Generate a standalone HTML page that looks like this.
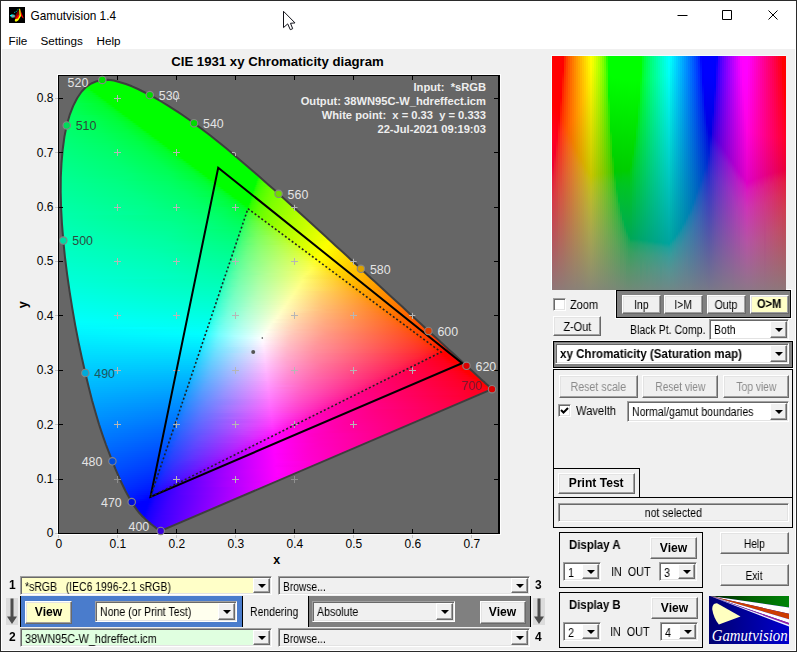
<!DOCTYPE html>
<html><head><meta charset="utf-8"><title>Gamutvision 1.4</title>
<style>
*{box-sizing:border-box;margin:0;padding:0}
html,body{width:797px;height:652px;overflow:hidden;background:#f0f0f0}
body{position:relative;font-family:"Liberation Sans",sans-serif;font-size:12px;color:#000}
.abs{position:absolute}
#frame{position:absolute;left:0;top:0;width:797px;height:652px;border:1px solid #2b2b2b;pointer-events:none;z-index:9}
#frame2{position:absolute;left:1px;top:1px;width:795px;height:650px;border:1px solid #fff;border-top:none;pointer-events:none;z-index:8}
#title{position:absolute;left:0;top:0;width:797px;height:30px;background:#fff}
#title .t{position:absolute;left:30.5px;top:8.7px;font-size:11.85px}
#menu{position:absolute;left:0;top:30px;width:797px;height:19px;background:#fff}
#menu span{position:absolute;top:4px;font-size:11.7px}
.btn{position:absolute;background:#f0f0f0;border:1px solid;border-color:#fff #696969 #696969 #fff;box-shadow:inset -1px -1px 0 #a0a0a0,inset 1px 1px 0 #e3e3e3;text-align:center;font-size:12px;line-height:1}
.btn.b{font-weight:bold}
.btn.dis{color:#8a8a8a}
.sel{position:absolute;background:#fff;border:1px solid;border-color:#a0a0a0 #fff #fff #a0a0a0;box-shadow:inset 1px 1px 0 #696969,inset -1px -1px 0 #e3e3e3;font-size:12px;white-space:nowrap;overflow:hidden}
.sel .tx{position:absolute;left:4px;top:3px;will-change:transform}
.sel .dd{position:absolute;right:1px;top:1px;bottom:1px;width:17px;background:#f0f0f0;border:1px solid;border-color:#fff #696969 #696969 #fff;box-shadow:inset -1px -1px 0 #a0a0a0}
.sel .dd:after{content:"";position:absolute;left:4px;top:50%;margin-top:-2px;border:4px solid transparent;border-top:4px solid #000;border-bottom:none}
.pan{position:absolute;border:1px solid #000}
.lbl{position:absolute;font-size:12px;white-space:nowrap;transform:scaleX(.9);transform-origin:0 50%;will-change:transform}
.lbl.b{font-weight:bold;transform:scaleX(.98)}
.btn .s{display:inline-block;position:relative;top:.7px;transform:scaleX(.9);will-change:transform}
.btn.b .s{transform:none;top:0}
.sel .tx{transform:scaleX(.9);transform-origin:0 50%}
.sel.b{font-weight:bold}
.sel.b .tx{transform:scaleX(.955)}
</style></head><body>
<div id="title"><svg class="abs" style="left:9px;top:7px" width="16" height="16" viewBox="0 0 16 16"><rect width="16" height="16" fill="#000"/><path d="M9.600 3L5 10.800L7.500 12L10.200 8z" fill="#8a0000"/><path d="M9.300 7.500L6 12.300H9.500L11.300 9z" fill="#f00"/><path d="M10.500 1L12.200 5L14.800 11.600L13.400 10.800L11.800 8.500L11 1.500z" fill="#f00"/><path d="M10.100 1.600L11.200 2.200L12 9L9.200 13.400L7 14.800L5.800 14L6 12.300L9 11.600L10.400 8.500z" fill="#ff0"/><path d="M5 5.600L7.500 4.600L9.600 1.600" stroke="#00a8a8" stroke-width="0.9" fill="none" stroke-dasharray="1.6 0.6"/><ellipse cx="3.700" cy="9" rx="2.400" ry="1.800" fill="#00b4b4"/><ellipse cx="4" cy="9.100" rx="1.700" ry="1.200" fill="#a09a9a"/><path d="M0.800 8.200L3.300 7.600L3 9L1.400 9z" fill="#0ff"/></svg>
<div class="t">Gamutvision 1.4</div>
<svg class="abs" style="left:660px;top:0" width="137" height="31" viewBox="0 0 137 31"><path d="M17.5 15.5h10M62.5 10.5h9v9h-9zM108.500 10.5l9 9m0-9l-9 9" stroke="#000" stroke-width="1" fill="none"/></svg>

</div>
<div id="menu"><span style="left:8.5px">File</span><span style="left:40.500px">Settings</span><span style="left:96.500px">Help</span></div>
<svg id="plot" width="545" height="530" viewBox="0 45 545 530" style="position:absolute;left:0;top:45px" font-family="Liberation Sans, sans-serif">
<defs><clipPath id="lc"><polygon points="160.7,530.9 160.6,530.9 160.3,530.9 160.0,530.8 159.6,530.7 159.3,530.6 159.0,530.4 158.6,530.1 158.2,529.7 157.6,529.3 157.0,528.8 156.3,528.2 155.5,527.6 154.5,526.7 153.2,525.8 152.0,524.8 150.9,523.9 150.0,523.1 149.2,522.5 148.4,521.9 147.6,521.2 146.6,520.3 145.6,519.4 144.6,518.4 143.5,517.3 142.3,516.2 141.1,514.9 139.8,513.5 138.4,511.8 136.9,509.8 135.3,507.6 133.6,505.0 131.7,502.1 129.8,498.8 127.7,495.1 125.5,491.0 123.2,486.3 120.7,481.0 118.1,475.1 115.3,468.6 112.4,461.3 109.2,453.2 105.9,444.5 102.5,434.9 99.0,424.3 95.6,412.8 92.1,400.4 88.7,387.1 85.3,373.0 81.9,358.0 78.5,342.1 75.3,325.6 72.4,309.0 69.7,292.1 67.2,274.8 65.0,257.5 63.3,240.6 62.0,224.2 61.1,207.9 60.7,192.2 60.8,177.3 61.5,163.1 62.7,149.5 64.4,136.8 66.7,125.4 69.6,115.2 73.1,106.1 77.1,98.2 81.5,91.8 86.2,86.9 91.3,83.5 96.8,81.2 102.3,79.9 108.0,79.7 113.9,80.5 119.9,82.2 125.9,84.0 131.9,86.3 137.9,89.0 143.9,92.0 149.8,95.1 155.5,98.2 161.2,101.5 166.8,104.8 172.3,108.3 177.8,111.9 183.2,115.5 188.6,119.3 194.0,123.2 199.3,127.1 204.7,131.2 210.0,135.3 215.3,139.5 220.6,143.7 225.9,148.1 231.2,152.5 236.4,156.9 241.7,161.4 247.0,165.9 252.2,170.5 257.5,175.1 262.8,179.7 268.1,184.4 273.4,189.1 278.6,193.8 283.9,198.5 289.1,203.2 294.4,208.0 299.6,212.8 304.9,217.5 310.1,222.3 315.3,227.0 320.5,231.7 325.7,236.5 330.8,241.2 335.9,245.9 341.0,250.5 346.0,255.1 351.0,259.7 356.0,264.3 360.9,268.8 365.7,273.2 370.5,277.7 375.3,282.0 379.9,286.3 384.5,290.5 389.1,294.7 393.5,298.7 397.9,302.7 402.1,306.6 406.3,310.5 410.3,314.2 414.2,317.8 418.0,321.2 421.6,324.6 425.0,327.8 428.4,330.9 431.7,333.9 434.9,336.8 438.0,339.6 440.9,342.3 443.6,344.7 446.0,346.9 448.4,349.2 451.3,351.8 454.9,355.1 458.9,358.8 463.0,362.5 466.5,365.8 469.4,368.4 471.9,370.7 474.1,372.8 476.2,374.7 478.1,376.4 479.8,378.0 481.3,379.4 482.7,380.7 484.0,381.8 485.0,382.8 486.0,383.7 486.8,384.4 487.5,385.1 488.1,385.6 488.6,386.1 489.2,386.6 489.9,387.3 490.7,388.0 491.5,388.7 492.0,389.2"/></clipPath><linearGradient id="g0" gradientUnits="userSpaceOnUse" x1="95" x2="118" y1="0" y2="0"><stop offset="0" stop-color="#0f0"/><stop offset="1" stop-color="#0f0"/></linearGradient><linearGradient id="g1" gradientUnits="userSpaceOnUse" x1="90" x2="125" y1="0" y2="0"><stop offset="0" stop-color="#0f0"/><stop offset="1" stop-color="#0f0"/></linearGradient><linearGradient id="g2" gradientUnits="userSpaceOnUse" x1="87" x2="131" y1="0" y2="0"><stop offset="0" stop-color="#0f0"/><stop offset="1" stop-color="#0f0"/></linearGradient><linearGradient id="g3" gradientUnits="userSpaceOnUse" x1="84" x2="136" y1="0" y2="0"><stop offset="0" stop-color="#00ff16"/><stop offset="0.03846" stop-color="#0f0"/><stop offset="1" stop-color="#0f0"/></linearGradient><linearGradient id="g4" gradientUnits="userSpaceOnUse" x1="82" x2="140" y1="0" y2="0"><stop offset="0" stop-color="#00ff27"/><stop offset="0.06897" stop-color="#00ff1a"/><stop offset="0.1207" stop-color="#0f0"/><stop offset="1" stop-color="#0f0"/></linearGradient><linearGradient id="g5" gradientUnits="userSpaceOnUse" x1="80" x2="144" y1="0" y2="0"><stop offset="0" stop-color="#00ff31"/><stop offset="0.125" stop-color="#00ff1d"/><stop offset="0.1562" stop-color="#00ff12"/><stop offset="0.1719" stop-color="#0f0"/><stop offset="1" stop-color="#0f0"/></linearGradient><linearGradient id="g6" gradientUnits="userSpaceOnUse" x1="78" x2="148" y1="0" y2="0"><stop offset="0" stop-color="#00ff38"/><stop offset="0.1571" stop-color="#00ff23"/><stop offset="0.2" stop-color="#00ff16"/><stop offset="0.2286" stop-color="#0f0"/><stop offset="1" stop-color="#0f0"/></linearGradient><linearGradient id="g7" gradientUnits="userSpaceOnUse" x1="77" x2="152" y1="0" y2="0"><stop offset="0" stop-color="#00ff3d"/><stop offset="0.2" stop-color="#0f2"/><stop offset="0.24" stop-color="#00ff14"/><stop offset="0.2667" stop-color="#0f0"/><stop offset="1" stop-color="#0f0"/></linearGradient><linearGradient id="g8" gradientUnits="userSpaceOnUse" x1="75" x2="156" y1="0" y2="0"><stop offset="0" stop-color="#00ff43"/><stop offset="0.2346" stop-color="#00ff24"/><stop offset="0.284" stop-color="#00ff12"/><stop offset="0.2963" stop-color="#0f0"/><stop offset="1" stop-color="#0f0"/></linearGradient><linearGradient id="g9" gradientUnits="userSpaceOnUse" x1="74" x2="159" y1="0" y2="0"><stop offset="0" stop-color="#00ff47"/><stop offset="0.2588" stop-color="#00ff26"/><stop offset="0.3059" stop-color="#00ff16"/><stop offset="0.3294" stop-color="#0f0"/><stop offset="1" stop-color="#0f0"/></linearGradient><linearGradient id="g10" gradientUnits="userSpaceOnUse" x1="73" x2="163" y1="0" y2="0"><stop offset="0" stop-color="#00ff4b"/><stop offset="0.2778" stop-color="#00ff28"/><stop offset="0.3222" stop-color="#00ff1a"/><stop offset="0.3556" stop-color="#0f0"/><stop offset="1" stop-color="#0f0"/></linearGradient><linearGradient id="g11" gradientUnits="userSpaceOnUse" x1="72" x2="166" y1="0" y2="0"><stop offset="0" stop-color="#00ff4e"/><stop offset="0.2872" stop-color="#00ff2c"/><stop offset="0.3511" stop-color="#00ff18"/><stop offset="0.3617" stop-color="#00ff12"/><stop offset="0.3723" stop-color="#0f0"/><stop offset="1" stop-color="#0f0"/></linearGradient><linearGradient id="g12" gradientUnits="userSpaceOnUse" x1="71" x2="170" y1="0" y2="0"><stop offset="0" stop-color="#00ff52"/><stop offset="0.1919" stop-color="#00ff3f"/><stop offset="0.3232" stop-color="#00ff29"/><stop offset="0.3636" stop-color="#00ff1c"/><stop offset="0.3939" stop-color="#0f0"/><stop offset="1" stop-color="#0f0"/></linearGradient><linearGradient id="g13" gradientUnits="userSpaceOnUse" x1="70" x2="173" y1="0" y2="0"><stop offset="0" stop-color="#0f5"/><stop offset="0.3107" stop-color="#00ff31"/><stop offset="0.3883" stop-color="#00ff1a"/><stop offset="0.4175" stop-color="#0f0"/><stop offset="1" stop-color="#0f0"/></linearGradient><linearGradient id="g14" gradientUnits="userSpaceOnUse" x1="70" x2="176" y1="0" y2="0"><stop offset="0" stop-color="#00ff57"/><stop offset="0.3113" stop-color="#00ff34"/><stop offset="0.3962" stop-color="#00ff1d"/><stop offset="0.4151" stop-color="#00ff12"/><stop offset="0.4245" stop-color="#0f0"/><stop offset="1" stop-color="#0f0"/></linearGradient><linearGradient id="g15" gradientUnits="userSpaceOnUse" x1="69" x2="179" y1="0" y2="0"><stop offset="0" stop-color="#00ff5a"/><stop offset="0.3455" stop-color="#00ff32"/><stop offset="0.4182" stop-color="#00ff1c"/><stop offset="0.4455" stop-color="#0f0"/><stop offset="1" stop-color="#0f0"/></linearGradient><linearGradient id="g16" gradientUnits="userSpaceOnUse" x1="68" x2="182" y1="0" y2="0"><stop offset="0" stop-color="#00ff5d"/><stop offset="0.3509" stop-color="#00ff35"/><stop offset="0.4298" stop-color="#00ff1f"/><stop offset="0.4649" stop-color="#0f0"/><stop offset="1" stop-color="#0f0"/></linearGradient><linearGradient id="g17" gradientUnits="userSpaceOnUse" x1="67" x2="185" y1="0" y2="0"><stop offset="0" stop-color="#00ff5f"/><stop offset="0.3559" stop-color="#00ff38"/><stop offset="0.4322" stop-color="#00ff25"/><stop offset="0.4576" stop-color="#00ff19"/><stop offset="0.4746" stop-color="#0f0"/><stop offset="1" stop-color="#0f0"/></linearGradient><linearGradient id="g18" gradientUnits="userSpaceOnUse" x1="67" x2="188" y1="0" y2="0"><stop offset="0" stop-color="#00ff61"/><stop offset="0.1983" stop-color="#00ff50"/><stop offset="0.3802" stop-color="#00ff36"/><stop offset="0.4628" stop-color="#00ff1c"/><stop offset="0.4876" stop-color="#0f0"/><stop offset="1" stop-color="#0f0"/></linearGradient><linearGradient id="g19" gradientUnits="userSpaceOnUse" x1="66" x2="191" y1="0" y2="0"><stop offset="0" stop-color="#00ff64"/><stop offset="0.224" stop-color="#00ff50"/><stop offset="0.392" stop-color="#00ff37"/><stop offset="0.464" stop-color="#00ff23"/><stop offset="0.488" stop-color="#00ff14"/><stop offset="0.504" stop-color="#0f0"/><stop offset="1" stop-color="#0f0"/></linearGradient><linearGradient id="g20" gradientUnits="userSpaceOnUse" x1="65" x2="193" y1="0" y2="0"><stop offset="0" stop-color="#0f6"/><stop offset="0.25" stop-color="#00ff50"/><stop offset="0.3984" stop-color="#00ff3a"/><stop offset="0.4922" stop-color="#00ff1e"/><stop offset="0.5078" stop-color="#0f1"/><stop offset="0.5156" stop-color="#0f0"/><stop offset="1" stop-color="#0f0"/></linearGradient><linearGradient id="g21" gradientUnits="userSpaceOnUse" x1="65" x2="196" y1="0" y2="0"><stop offset="0" stop-color="#00ff68"/><stop offset="0.2748" stop-color="#00ff4f"/><stop offset="0.4198" stop-color="#00ff38"/><stop offset="0.4885" stop-color="#00ff24"/><stop offset="0.5115" stop-color="#00ff17"/><stop offset="0.5267" stop-color="#0f0"/><stop offset="1" stop-color="#0f0"/></linearGradient><linearGradient id="g22" gradientUnits="userSpaceOnUse" x1="64" x2="199" y1="0" y2="0"><stop offset="0" stop-color="#00ff6a"/><stop offset="0.2444" stop-color="#0f5"/><stop offset="0.4222" stop-color="#00ff3b"/><stop offset="0.5037" stop-color="#00ff23"/><stop offset="0.5185" stop-color="#00ff1b"/><stop offset="0.5407" stop-color="#0f0"/><stop offset="1" stop-color="#0f0"/></linearGradient><linearGradient id="g23" gradientUnits="userSpaceOnUse" x1="64" x2="202" y1="0" y2="0"><stop offset="0" stop-color="#00ff6c"/><stop offset="0.2246" stop-color="#00ff59"/><stop offset="0.413" stop-color="#00ff3f"/><stop offset="0.5145" stop-color="#0f2"/><stop offset="0.5362" stop-color="#0f1"/><stop offset="0.5435" stop-color="#0f0"/><stop offset="1" stop-color="#0f0"/></linearGradient><linearGradient id="g24" gradientUnits="userSpaceOnUse" x1="63" x2="204" y1="0" y2="0"><stop offset="0" stop-color="#00ff6e"/><stop offset="0.2482" stop-color="#00ff59"/><stop offset="0.4255" stop-color="#00ff40"/><stop offset="0.5319" stop-color="#00ff21"/><stop offset="0.5461" stop-color="#00ff17"/><stop offset="0.5603" stop-color="#0f0"/><stop offset="1" stop-color="#0f0"/></linearGradient><linearGradient id="g25" gradientUnits="userSpaceOnUse" x1="63" x2="207" y1="0" y2="0"><stop offset="0" stop-color="#00ff70"/><stop offset="0.2639" stop-color="#00ff59"/><stop offset="0.4514" stop-color="#00ff3d"/><stop offset="0.5347" stop-color="#00ff23"/><stop offset="0.5486" stop-color="#00ff1b"/><stop offset="0.5625" stop-color="#00ff04"/><stop offset="0.5694" stop-color="#0f0"/><stop offset="1" stop-color="#0f0"/></linearGradient><linearGradient id="g26" gradientUnits="userSpaceOnUse" x1="63" x2="210" y1="0" y2="0"><stop offset="0" stop-color="#00ff71"/><stop offset="0.2245" stop-color="#00ff5f"/><stop offset="0.4422" stop-color="#00ff41"/><stop offset="0.5442" stop-color="#0f2"/><stop offset="0.5646" stop-color="#0f1"/><stop offset="0.5714" stop-color="#0f0"/><stop offset="1" stop-color="#0f0"/></linearGradient><linearGradient id="g27" gradientUnits="userSpaceOnUse" x1="62" x2="212" y1="0" y2="0"><stop offset="0" stop-color="#00ff73"/><stop offset="0.2667" stop-color="#00ff5d"/><stop offset="0.4333" stop-color="#00ff46"/><stop offset="0.5467" stop-color="#00ff28"/><stop offset="0.5733" stop-color="#00ff17"/><stop offset="0.5867" stop-color="#0f0"/><stop offset="1" stop-color="#0f0"/></linearGradient><linearGradient id="g28" gradientUnits="userSpaceOnUse" x1="62" x2="215" y1="0" y2="0"><stop offset="0" stop-color="#00ff75"/><stop offset="0.281" stop-color="#00ff5d"/><stop offset="0.4641" stop-color="#00ff42"/><stop offset="0.5556" stop-color="#00ff27"/><stop offset="0.5817" stop-color="#00ff14"/><stop offset="0.5882" stop-color="#0f0"/><stop offset="1" stop-color="#0f0"/></linearGradient><linearGradient id="g29" gradientUnits="userSpaceOnUse" x1="62" x2="217" y1="0" y2="0"><stop offset="0" stop-color="#0f7"/><stop offset="0.271" stop-color="#00ff60"/><stop offset="0.471" stop-color="#00ff43"/><stop offset="0.5677" stop-color="#00ff26"/><stop offset="0.5871" stop-color="#00ff19"/><stop offset="0.6" stop-color="#0f0"/><stop offset="1" stop-color="#0f0"/></linearGradient><linearGradient id="g30" gradientUnits="userSpaceOnUse" x1="61" x2="220" y1="0" y2="0"><stop offset="0" stop-color="#00ff79"/><stop offset="0.2516" stop-color="#00ff64"/><stop offset="0.4528" stop-color="#00ff49"/><stop offset="0.566" stop-color="#00ff2b"/><stop offset="0.5975" stop-color="#00ff17"/><stop offset="0.6101" stop-color="#0f0"/><stop offset="1" stop-color="#0f0"/></linearGradient><linearGradient id="g31" gradientUnits="userSpaceOnUse" x1="61" x2="222" y1="0" y2="0"><stop offset="0" stop-color="#00ff7a"/><stop offset="0.323" stop-color="#00ff5e"/><stop offset="0.4907" stop-color="#0f4"/><stop offset="0.5901" stop-color="#00ff24"/><stop offset="0.6087" stop-color="#00ff14"/><stop offset="0.6149" stop-color="#0f0"/><stop offset="1" stop-color="#0f0"/></linearGradient><linearGradient id="g32" gradientUnits="userSpaceOnUse" x1="61" x2="225" y1="0" y2="0"><stop offset="0" stop-color="#00ff7c"/><stop offset="0.2927" stop-color="#00ff63"/><stop offset="0.4939" stop-color="#00ff45"/><stop offset="0.5976" stop-color="#00ff23"/><stop offset="0.6159" stop-color="#0f1"/><stop offset="0.622" stop-color="#0f0"/><stop offset="1" stop-color="#0f0"/></linearGradient><linearGradient id="g33" gradientUnits="userSpaceOnUse" x1="61" x2="227" y1="0" y2="0"><stop offset="0" stop-color="#00ff7d"/><stop offset="0.2711" stop-color="#00ff67"/><stop offset="0.4759" stop-color="#00ff4b"/><stop offset="0.5843" stop-color="#00ff2e"/><stop offset="0.6145" stop-color="#00ff1d"/><stop offset="0.6325" stop-color="#0f0"/><stop offset="1" stop-color="#0f0"/></linearGradient><linearGradient id="g34" gradientUnits="userSpaceOnUse" x1="60" x2="230" y1="0" y2="0"><stop offset="0" stop-color="#00ff7f"/><stop offset="0.2706" stop-color="#00ff69"/><stop offset="0.4824" stop-color="#00ff4c"/><stop offset="0.5882" stop-color="#00ff30"/><stop offset="0.6235" stop-color="#00ff1b"/><stop offset="0.6294" stop-color="#00ff14"/><stop offset="0.6353" stop-color="#0f0"/><stop offset="1" stop-color="#0f0"/></linearGradient><linearGradient id="g35" gradientUnits="userSpaceOnUse" x1="60" x2="232" y1="0" y2="0"><stop offset="0" stop-color="#00ff81"/><stop offset="0.2965" stop-color="#00ff68"/><stop offset="0.4884" stop-color="#00ff4d"/><stop offset="0.6105" stop-color="#00ff2a"/><stop offset="0.6337" stop-color="#00ff19"/><stop offset="0.6453" stop-color="#0f0"/><stop offset="1" stop-color="#0f0"/></linearGradient><linearGradient id="g36" gradientUnits="userSpaceOnUse" x1="60" x2="234" y1="0" y2="0"><stop offset="0" stop-color="#00ff82"/><stop offset="0.2931" stop-color="#00ff6a"/><stop offset="0.4943" stop-color="#00ff4e"/><stop offset="0.6149" stop-color="#00ff2c"/><stop offset="0.6437" stop-color="#00ff17"/><stop offset="0.6552" stop-color="#0f0"/><stop offset="1" stop-color="#0f0"/></linearGradient><linearGradient id="g37" gradientUnits="userSpaceOnUse" x1="60" x2="237" y1="0" y2="0"><stop offset="0" stop-color="#00ff83"/><stop offset="0.2881" stop-color="#00ff6c"/><stop offset="0.4972" stop-color="#00ff4f"/><stop offset="0.6158" stop-color="#00ff2e"/><stop offset="0.6441" stop-color="#00ff1b"/><stop offset="0.6497" stop-color="#00ff14"/><stop offset="0.6554" stop-color="#0f0"/><stop offset="1" stop-color="#0f0"/></linearGradient><linearGradient id="g38" gradientUnits="userSpaceOnUse" x1="60" x2="239" y1="0" y2="0"><stop offset="0" stop-color="#00ff85"/><stop offset="0.3128" stop-color="#00ff6b"/><stop offset="0.5084" stop-color="#00ff4f"/><stop offset="0.6257" stop-color="#00ff2d"/><stop offset="0.6536" stop-color="#00ff19"/><stop offset="0.6648" stop-color="#0f0"/><stop offset="1" stop-color="#0f0"/></linearGradient><linearGradient id="g39" gradientUnits="userSpaceOnUse" x1="59" x2="241" y1="0" y2="0"><stop offset="0" stop-color="#00ff87"/><stop offset="0.3132" stop-color="#00ff6d"/><stop offset="0.5165" stop-color="#00ff50"/><stop offset="0.6319" stop-color="#00ff2f"/><stop offset="0.6593" stop-color="#00ff1d"/><stop offset="0.6758" stop-color="#0f0"/><stop offset="1" stop-color="#0f0"/></linearGradient><linearGradient id="g40" gradientUnits="userSpaceOnUse" x1="59" x2="244" y1="0" y2="0"><stop offset="0" stop-color="#0f8"/><stop offset="0.2973" stop-color="#00ff70"/><stop offset="0.5189" stop-color="#00ff51"/><stop offset="0.6324" stop-color="#00ff31"/><stop offset="0.6649" stop-color="#00ff1c"/><stop offset="0.6703" stop-color="#00ff14"/><stop offset="0.6757" stop-color="#0f0"/><stop offset="1" stop-color="#0f0"/></linearGradient><linearGradient id="g41" gradientUnits="userSpaceOnUse" x1="59" x2="246" y1="0" y2="0"><stop offset="0" stop-color="#00ff89"/><stop offset="0.2941" stop-color="#00ff72"/><stop offset="0.5241" stop-color="#00ff52"/><stop offset="0.6417" stop-color="#00ff30"/><stop offset="0.6738" stop-color="#00ff1a"/><stop offset="0.6845" stop-color="#0f0"/><stop offset="1" stop-color="#0f0"/></linearGradient><linearGradient id="g42" gradientUnits="userSpaceOnUse" x1="59" x2="248" y1="0" y2="0"><stop offset="0" stop-color="#00ff8b"/><stop offset="0.3175" stop-color="#00ff71"/><stop offset="0.5344" stop-color="#00ff52"/><stop offset="0.6561" stop-color="#00ff2d"/><stop offset="0.6772" stop-color="#00ff1e"/><stop offset="0.6931" stop-color="#0f0"/><stop offset="1" stop-color="#0f0"/></linearGradient><linearGradient id="g43" gradientUnits="userSpaceOnUse" x1="59" x2="251" y1="0" y2="0"><stop offset="0" stop-color="#00ff8c"/><stop offset="0.3125" stop-color="#00ff73"/><stop offset="0.5365" stop-color="#00ff53"/><stop offset="0.6562" stop-color="#00ff2f"/><stop offset="0.6823" stop-color="#00ff1c"/><stop offset="0.6875" stop-color="#00ff14"/><stop offset="0.6927" stop-color="#0f0"/><stop offset="1" stop-color="#0f0"/></linearGradient><linearGradient id="g44" gradientUnits="userSpaceOnUse" x1="59" x2="253" y1="0" y2="0"><stop offset="0" stop-color="#00ff8e"/><stop offset="0.3454" stop-color="#00ff71"/><stop offset="0.5464" stop-color="#00ff53"/><stop offset="0.6649" stop-color="#00ff2e"/><stop offset="0.6907" stop-color="#00ff1a"/><stop offset="0.701" stop-color="#0f0"/><stop offset="1" stop-color="#0f0"/></linearGradient><linearGradient id="g45" gradientUnits="userSpaceOnUse" x1="59" x2="255" y1="0" y2="0"><stop offset="0" stop-color="#00ff8f"/><stop offset="0.3316" stop-color="#00ff74"/><stop offset="0.551" stop-color="#00ff54"/><stop offset="0.6684" stop-color="#00ff30"/><stop offset="0.6939" stop-color="#00ff1e"/><stop offset="0.7092" stop-color="#0f0"/><stop offset="1" stop-color="#0f0"/></linearGradient><linearGradient id="g46" gradientUnits="userSpaceOnUse" x1="59" x2="258" y1="0" y2="0"><stop offset="0" stop-color="#00ff90"/><stop offset="0.3166" stop-color="#0f7"/><stop offset="0.5578" stop-color="#00ff54"/><stop offset="0.6683" stop-color="#00ff32"/><stop offset="0.6985" stop-color="#00ff1c"/><stop offset="0.7035" stop-color="#00ff14"/><stop offset="0.7085" stop-color="#0f0"/><stop offset="1" stop-color="#0f0"/></linearGradient><linearGradient id="g47" gradientUnits="userSpaceOnUse" x1="58" x2="260" y1="0" y2="0"><stop offset="0" stop-color="#00ff92"/><stop offset="0.3614" stop-color="#00ff74"/><stop offset="0.5693" stop-color="#00ff54"/><stop offset="0.6733" stop-color="#00ff34"/><stop offset="0.703" stop-color="#00ff20"/><stop offset="0.7129" stop-color="#0f1"/><stop offset="0.7178" stop-color="#0f0"/><stop offset="0.995" stop-color="#0f0"/><stop offset="1" stop-color="#19ff00"/></linearGradient><linearGradient id="g48" gradientUnits="userSpaceOnUse" x1="58" x2="262" y1="0" y2="0"><stop offset="0" stop-color="#00ff93"/><stop offset="0.348" stop-color="#0f7"/><stop offset="0.5441" stop-color="#00ff5b"/><stop offset="0.6716" stop-color="#00ff38"/><stop offset="0.7108" stop-color="#00ff1e"/><stop offset="0.7255" stop-color="#0f0"/><stop offset="0.9804" stop-color="#0f0"/><stop offset="0.9902" stop-color="#24ff00"/><stop offset="1" stop-color="#36ff00"/></linearGradient><linearGradient id="g49" gradientUnits="userSpaceOnUse" x1="58" x2="264" y1="0" y2="0"><stop offset="0" stop-color="#00ff95"/><stop offset="0.3252" stop-color="#00ff7b"/><stop offset="0.5485" stop-color="#00ff5c"/><stop offset="0.6845" stop-color="#00ff35"/><stop offset="0.7136" stop-color="#0f2"/><stop offset="0.7233" stop-color="#00ff14"/><stop offset="0.7282" stop-color="#0f0"/><stop offset="0.9709" stop-color="#0f0"/><stop offset="0.9757" stop-color="#1fff00"/><stop offset="0.9806" stop-color="#2cff00"/><stop offset="1" stop-color="#46ff00"/></linearGradient><linearGradient id="g50" gradientUnits="userSpaceOnUse" x1="58" x2="267" y1="0" y2="0"><stop offset="0" stop-color="#00ff96"/><stop offset="0.2679" stop-color="#00ff82"/><stop offset="0.5502" stop-color="#00ff5d"/><stop offset="0.6842" stop-color="#00ff37"/><stop offset="0.7177" stop-color="#00ff20"/><stop offset="0.7273" stop-color="#0f1"/><stop offset="0.7321" stop-color="#0f0"/><stop offset="0.9522" stop-color="#0f0"/><stop offset="0.9569" stop-color="#1aff00"/><stop offset="0.9665" stop-color="#32ff00"/><stop offset="1" stop-color="#5f0"/></linearGradient><linearGradient id="g51" gradientUnits="userSpaceOnUse" x1="58" x2="269" y1="0" y2="0"><stop offset="0" stop-color="#00ff97"/><stop offset="0.3033" stop-color="#00ff80"/><stop offset="0.5213" stop-color="#00ff64"/><stop offset="0.6209" stop-color="#00ff4f"/><stop offset="0.6967" stop-color="#00ff34"/><stop offset="0.7251" stop-color="#00ff1e"/><stop offset="0.7393" stop-color="#0f0"/><stop offset="0.9384" stop-color="#0f0"/><stop offset="0.9479" stop-color="#25ff00"/><stop offset="0.9573" stop-color="#37ff00"/><stop offset="1" stop-color="#5fff00"/></linearGradient><linearGradient id="g52" gradientUnits="userSpaceOnUse" x1="58" x2="271" y1="0" y2="0"><stop offset="0" stop-color="#0f9"/><stop offset="0.277" stop-color="#00ff84"/><stop offset="0.5258" stop-color="#00ff65"/><stop offset="0.6291" stop-color="#00ff4f"/><stop offset="0.6948" stop-color="#00ff38"/><stop offset="0.7277" stop-color="#0f2"/><stop offset="0.7371" stop-color="#00ff14"/><stop offset="0.7418" stop-color="#0f0"/><stop offset="0.9296" stop-color="#0f0"/><stop offset="0.9343" stop-color="#20ff00"/><stop offset="0.9437" stop-color="#35ff00"/><stop offset="0.9624" stop-color="#4bff00"/><stop offset="1" stop-color="#67ff00"/></linearGradient><linearGradient id="g53" gradientUnits="userSpaceOnUse" x1="58" x2="274" y1="0" y2="0"><stop offset="0" stop-color="#00ff9a"/><stop offset="0.3009" stop-color="#00ff83"/><stop offset="0.5093" stop-color="#00ff69"/><stop offset="0.6111" stop-color="#0f5"/><stop offset="0.6898" stop-color="#00ff3c"/><stop offset="0.7315" stop-color="#00ff20"/><stop offset="0.7407" stop-color="#00ff10"/><stop offset="0.7454" stop-color="#0f0"/><stop offset="0.912" stop-color="#0f0"/><stop offset="0.9167" stop-color="#1aff00"/><stop offset="0.9213" stop-color="#29ff00"/><stop offset="0.9352" stop-color="#40ff00"/><stop offset="1" stop-color="#71ff00"/></linearGradient><linearGradient id="g54" gradientUnits="userSpaceOnUse" x1="58" x2="276" y1="0" y2="0"><stop offset="0" stop-color="#00ff9b"/><stop offset="0.2844" stop-color="#00ff86"/><stop offset="0.5138" stop-color="#00ff6a"/><stop offset="0.6422" stop-color="#00ff4f"/><stop offset="0.7064" stop-color="#00ff37"/><stop offset="0.7385" stop-color="#00ff1f"/><stop offset="0.7523" stop-color="#0f0"/><stop offset="0.8991" stop-color="#0f0"/><stop offset="0.9083" stop-color="#25ff00"/><stop offset="0.922" stop-color="#3eff00"/><stop offset="0.9495" stop-color="#59ff00"/><stop offset="1" stop-color="#78ff00"/></linearGradient><linearGradient id="g55" gradientUnits="userSpaceOnUse" x1="58" x2="278" y1="0" y2="0"><stop offset="0" stop-color="#00ff9c"/><stop offset="0.3" stop-color="#00ff86"/><stop offset="0.5409" stop-color="#00ff67"/><stop offset="0.6273" stop-color="#0f5"/><stop offset="0.7045" stop-color="#00ff3b"/><stop offset="0.7455" stop-color="#00ff1d"/><stop offset="0.75" stop-color="#00ff14"/><stop offset="0.7545" stop-color="#0f0"/><stop offset="0.8909" stop-color="#0f0"/><stop offset="0.8955" stop-color="#21ff00"/><stop offset="0.9136" stop-color="#42ff00"/><stop offset="0.9455" stop-color="#5fff00"/><stop offset="1" stop-color="#7eff00"/></linearGradient><linearGradient id="g56" gradientUnits="userSpaceOnUse" x1="58" x2="280" y1="0" y2="0"><stop offset="0" stop-color="#00ff9e"/><stop offset="0.3243" stop-color="#00ff85"/><stop offset="0.5676" stop-color="#00ff64"/><stop offset="0.6667" stop-color="#00ff4c"/><stop offset="0.7207" stop-color="#00ff36"/><stop offset="0.7477" stop-color="#00ff21"/><stop offset="0.7613" stop-color="#0f0"/><stop offset="0.8784" stop-color="#0f0"/><stop offset="0.8829" stop-color="#1bff00"/><stop offset="0.8874" stop-color="#29ff00"/><stop offset="0.9054" stop-color="#46ff00"/><stop offset="0.955" stop-color="#6dff00"/><stop offset="1" stop-color="#84ff00"/></linearGradient><linearGradient id="g57" gradientUnits="userSpaceOnUse" x1="58" x2="282" y1="0" y2="0"><stop offset="0" stop-color="#00ff9f"/><stop offset="0.3393" stop-color="#00ff85"/><stop offset="0.5714" stop-color="#00ff65"/><stop offset="0.6607" stop-color="#00ff50"/><stop offset="0.7188" stop-color="#00ff3a"/><stop offset="0.7545" stop-color="#00ff1f"/><stop offset="0.7679" stop-color="#0f0"/><stop offset="0.8661" stop-color="#0f0"/><stop offset="0.875" stop-color="#26ff00"/><stop offset="0.8795" stop-color="#30ff00"/><stop offset="0.9018" stop-color="#4eff00"/><stop offset="0.9464" stop-color="#6fff00"/><stop offset="1" stop-color="#8aff00"/></linearGradient><linearGradient id="g58" gradientUnits="userSpaceOnUse" x1="58" x2="285" y1="0" y2="0"><stop offset="0" stop-color="#00ffa0"/><stop offset="0.3612" stop-color="#00ff84"/><stop offset="0.5727" stop-color="#0f6"/><stop offset="0.7137" stop-color="#00ff3e"/><stop offset="0.7533" stop-color="#00ff23"/><stop offset="0.7621" stop-color="#00ff15"/><stop offset="0.7665" stop-color="#0f0"/><stop offset="0.8546" stop-color="#0f0"/><stop offset="0.859" stop-color="#21ff00"/><stop offset="0.8634" stop-color="#2dff00"/><stop offset="0.8899" stop-color="#51ff00"/><stop offset="0.9339" stop-color="#71ff00"/><stop offset="1" stop-color="#91ff00"/></linearGradient><linearGradient id="g59" gradientUnits="userSpaceOnUse" x1="58" x2="287" y1="0" y2="0"><stop offset="0" stop-color="#00ffa2"/><stop offset="0.3362" stop-color="#0f8"/><stop offset="0.5764" stop-color="#00ff67"/><stop offset="0.655" stop-color="#0f5"/><stop offset="0.7293" stop-color="#00ff39"/><stop offset="0.7598" stop-color="#00ff21"/><stop offset="0.7729" stop-color="#0f0"/><stop offset="0.8428" stop-color="#0f0"/><stop offset="0.8472" stop-color="#1cff00"/><stop offset="0.8515" stop-color="#2aff00"/><stop offset="0.8777" stop-color="#50ff00"/><stop offset="0.917" stop-color="#6eff00"/><stop offset="1" stop-color="#96ff00"/></linearGradient><linearGradient id="g60" gradientUnits="userSpaceOnUse" x1="58" x2="289" y1="0" y2="0"><stop offset="0" stop-color="#00ffa3"/><stop offset="0.3506" stop-color="#0f8"/><stop offset="0.5801" stop-color="#00ff68"/><stop offset="0.6623" stop-color="#0f5"/><stop offset="0.7316" stop-color="#00ff3b"/><stop offset="0.7619" stop-color="#00ff25"/><stop offset="0.7706" stop-color="#00ff18"/><stop offset="0.7792" stop-color="#0f0"/><stop offset="0.8312" stop-color="#0f0"/><stop offset="0.8398" stop-color="#26ff00"/><stop offset="0.8442" stop-color="#31ff00"/><stop offset="0.8701" stop-color="#53ff00"/><stop offset="0.9264" stop-color="#7aff00"/><stop offset="1" stop-color="#9cff00"/></linearGradient><linearGradient id="g61" gradientUnits="userSpaceOnUse" x1="58" x2="291" y1="0" y2="0"><stop offset="0" stop-color="#00ffa4"/><stop offset="0.3648" stop-color="#0f8"/><stop offset="0.5837" stop-color="#00ff69"/><stop offset="0.7082" stop-color="#00ff48"/><stop offset="0.7639" stop-color="#00ff28"/><stop offset="0.7768" stop-color="#00ff15"/><stop offset="0.7811" stop-color="#0f0"/><stop offset="0.824" stop-color="#0f0"/><stop offset="0.8283" stop-color="#2f0"/><stop offset="0.8326" stop-color="#2eff00"/><stop offset="0.8627" stop-color="#56ff00"/><stop offset="0.9185" stop-color="#7cff00"/><stop offset="1" stop-color="#a1ff00"/></linearGradient><linearGradient id="g62" gradientUnits="userSpaceOnUse" x1="58" x2="294" y1="0" y2="0"><stop offset="0" stop-color="#00ffa6"/><stop offset="0.3856" stop-color="#00ff87"/><stop offset="0.6102" stop-color="#00ff65"/><stop offset="0.7415" stop-color="#00ff3a"/><stop offset="0.7712" stop-color="#00ff21"/><stop offset="0.7839" stop-color="#0f0"/><stop offset="0.8093" stop-color="#0f0"/><stop offset="0.8136" stop-color="#1cff00"/><stop offset="0.822" stop-color="#34ff00"/><stop offset="0.8559" stop-color="#5cff00"/><stop offset="0.911" stop-color="#80ff00"/><stop offset="1" stop-color="#a7ff00"/></linearGradient><linearGradient id="g63" gradientUnits="userSpaceOnUse" x1="59" x2="296" y1="0" y2="0"><stop offset="0" stop-color="#00ffa7"/><stop offset="0.3502" stop-color="#00ff8c"/><stop offset="0.6076" stop-color="#00ff67"/><stop offset="0.7384" stop-color="#00ff3e"/><stop offset="0.7722" stop-color="#00ff25"/><stop offset="0.7806" stop-color="#00ff18"/><stop offset="0.7848" stop-color="#00ff06"/><stop offset="0.7975" stop-color="#0f0"/><stop offset="0.8059" stop-color="#27ff00"/><stop offset="0.8143" stop-color="#39ff00"/><stop offset="0.8481" stop-color="#5fff00"/><stop offset="0.903" stop-color="#82ff00"/><stop offset="1" stop-color="#acff00"/></linearGradient><linearGradient id="g64" gradientUnits="userSpaceOnUse" x1="59" x2="298" y1="0" y2="0"><stop offset="0" stop-color="#00ffa8"/><stop offset="0.364" stop-color="#00ff8c"/><stop offset="0.6109" stop-color="#00ff68"/><stop offset="0.6862" stop-color="#0f5"/><stop offset="0.749" stop-color="#00ff3b"/><stop offset="0.7782" stop-color="#00ff23"/><stop offset="0.7866" stop-color="#00ff15"/><stop offset="0.7908" stop-color="#0f0"/><stop offset="0.795" stop-color="#2f0"/><stop offset="0.8033" stop-color="#37ff00"/><stop offset="0.8368" stop-color="#5eff00"/><stop offset="0.8996" stop-color="#86ff00"/><stop offset="1" stop-color="#b1ff00"/></linearGradient><linearGradient id="g65" gradientUnits="userSpaceOnUse" x1="59" x2="300" y1="0" y2="0"><stop offset="0" stop-color="#00ffa9"/><stop offset="0.3485" stop-color="#00ff8f"/><stop offset="0.5685" stop-color="#00ff72"/><stop offset="0.6929" stop-color="#0f5"/><stop offset="0.751" stop-color="#00ff3d"/><stop offset="0.7801" stop-color="#00ff27"/><stop offset="0.7842" stop-color="#1dff22"/><stop offset="0.7925" stop-color="#35ff10"/><stop offset="0.7967" stop-color="#3cff00"/><stop offset="0.834" stop-color="#64ff00"/><stop offset="0.8963" stop-color="#8aff00"/><stop offset="1" stop-color="#b5ff00"/></linearGradient><linearGradient id="g66" gradientUnits="userSpaceOnUse" x1="59" x2="302" y1="0" y2="0"><stop offset="0" stop-color="#0fa"/><stop offset="0.2798" stop-color="#00ff97"/><stop offset="0.5103" stop-color="#00ff7d"/><stop offset="0.6831" stop-color="#00ff5a"/><stop offset="0.7695" stop-color="#00ff34"/><stop offset="0.7778" stop-color="#27ff2e"/><stop offset="0.786" stop-color="#3aff25"/><stop offset="0.7942" stop-color="#46ff18"/><stop offset="0.7984" stop-color="#4bff02"/><stop offset="0.823" stop-color="#63ff00"/><stop offset="0.8683" stop-color="#81ff00"/><stop offset="1" stop-color="#baff00"/></linearGradient><linearGradient id="g67" gradientUnits="userSpaceOnUse" x1="59" x2="305" y1="0" y2="0"><stop offset="0" stop-color="#00ffac"/><stop offset="0.3049" stop-color="#00ff96"/><stop offset="0.5122" stop-color="#00ff7e"/><stop offset="0.6545" stop-color="#00ff63"/><stop offset="0.7602" stop-color="#00ff3c"/><stop offset="0.7642" stop-color="#23ff39"/><stop offset="0.7724" stop-color="#38ff34"/><stop offset="0.7927" stop-color="#53ff1e"/><stop offset="0.7967" stop-color="#57ff15"/><stop offset="0.8008" stop-color="#5bff00"/><stop offset="0.8049" stop-color="#5fff00"/><stop offset="0.8618" stop-color="#85ff00"/><stop offset="1" stop-color="#c0ff00"/></linearGradient><linearGradient id="g68" gradientUnits="userSpaceOnUse" x1="59" x2="307" y1="0" y2="0"><stop offset="0" stop-color="#00ffad"/><stop offset="0.4879" stop-color="#00ff83"/><stop offset="0.6371" stop-color="#00ff69"/><stop offset="0.75" stop-color="#0f4"/><stop offset="0.754" stop-color="#1eff42"/><stop offset="0.7661" stop-color="#3dff3b"/><stop offset="0.7863" stop-color="#56ff2c"/><stop offset="0.8024" stop-color="#65ff0f"/><stop offset="0.8065" stop-color="#68ff00"/><stop offset="0.8952" stop-color="#9bff00"/><stop offset="1" stop-color="#c4ff00"/></linearGradient><linearGradient id="g69" gradientUnits="userSpaceOnUse" x1="59" x2="309" y1="0" y2="0"><stop offset="0" stop-color="#00ffae"/><stop offset="0.492" stop-color="#00ff84"/><stop offset="0.636" stop-color="#00ff6b"/><stop offset="0.74" stop-color="#00ff4b"/><stop offset="0.748" stop-color="#28ff48"/><stop offset="0.756" stop-color="#3aff44"/><stop offset="0.792" stop-color="#64ff2b"/><stop offset="0.804" stop-color="#6dff18"/><stop offset="0.808" stop-color="#70ff00"/><stop offset="0.88" stop-color="#9f0"/><stop offset="1" stop-color="#c9ff00"/></linearGradient><linearGradient id="g70" gradientUnits="userSpaceOnUse" x1="59" x2="311" y1="0" y2="0"><stop offset="0" stop-color="#00ffb0"/><stop offset="0.496" stop-color="#00ff85"/><stop offset="0.6349" stop-color="#00ff6d"/><stop offset="0.7341" stop-color="#00ff50"/><stop offset="0.7381" stop-color="#24ff4f"/><stop offset="0.7421" stop-color="#30ff4d"/><stop offset="0.7579" stop-color="#4bff46"/><stop offset="0.7817" stop-color="#63ff37"/><stop offset="0.8056" stop-color="#75ff1e"/><stop offset="0.8135" stop-color="#7aff00"/><stop offset="0.8889" stop-color="#a2ff00"/><stop offset="1" stop-color="#ceff00"/></linearGradient><linearGradient id="g71" gradientUnits="userSpaceOnUse" x1="59" x2="313" y1="0" y2="0"><stop offset="0" stop-color="#00ffb1"/><stop offset="0.4291" stop-color="#00ff8f"/><stop offset="0.6142" stop-color="#00ff73"/><stop offset="0.7244" stop-color="#00ff56"/><stop offset="0.7283" stop-color="#1eff55"/><stop offset="0.7362" stop-color="#36ff52"/><stop offset="0.7559" stop-color="#53ff49"/><stop offset="0.7795" stop-color="#69ff3c"/><stop offset="0.8031" stop-color="#7aff28"/><stop offset="0.811" stop-color="#7fff1b"/><stop offset="0.8189" stop-color="#83ff00"/><stop offset="0.8898" stop-color="#a7ff00"/><stop offset="1" stop-color="#d2ff00"/></linearGradient><linearGradient id="g72" gradientUnits="userSpaceOnUse" x1="59" x2="316" y1="0" y2="0"><stop offset="0" stop-color="#00ffb2"/><stop offset="0.4319" stop-color="#00ff90"/><stop offset="0.5953" stop-color="#00ff78"/><stop offset="0.7121" stop-color="#00ff5b"/><stop offset="0.7198" stop-color="#29ff59"/><stop offset="0.7315" stop-color="#42ff54"/><stop offset="0.7549" stop-color="#5eff4b"/><stop offset="0.786" stop-color="#77ff39"/><stop offset="0.8093" stop-color="#85ff20"/><stop offset="0.8132" stop-color="#88ff18"/><stop offset="0.8171" stop-color="#8aff00"/><stop offset="1" stop-color="#d8ff00"/></linearGradient><linearGradient id="g73" gradientUnits="userSpaceOnUse" x1="60" x2="318" y1="0" y2="0"><stop offset="0" stop-color="#00ffb3"/><stop offset="0.4341" stop-color="#00ff91"/><stop offset="0.5814" stop-color="#00ff7c"/><stop offset="0.7054" stop-color="#00ff5f"/><stop offset="0.7093" stop-color="#24ff5e"/><stop offset="0.7209" stop-color="#40ff5a"/><stop offset="0.7442" stop-color="#5dff51"/><stop offset="0.7791" stop-color="#79ff40"/><stop offset="0.8101" stop-color="#8cff24"/><stop offset="0.8178" stop-color="#90ff14"/><stop offset="0.8217" stop-color="#92ff00"/><stop offset="1" stop-color="#df0"/></linearGradient><linearGradient id="g74" gradientUnits="userSpaceOnUse" x1="60" x2="320" y1="0" y2="0"><stop offset="0" stop-color="#00ffb5"/><stop offset="0.4385" stop-color="#00ff92"/><stop offset="0.5962" stop-color="#00ff7b"/><stop offset="0.6962" stop-color="#00ff64"/><stop offset="0.7" stop-color="#1fff63"/><stop offset="0.7115" stop-color="#3eff5f"/><stop offset="0.7308" stop-color="#58ff59"/><stop offset="0.7615" stop-color="#73ff4c"/><stop offset="0.8115" stop-color="#92ff28"/><stop offset="0.8192" stop-color="#96ff1b"/><stop offset="0.8269" stop-color="#9aff00"/><stop offset="1" stop-color="#e2ff00"/></linearGradient><linearGradient id="g75" gradientUnits="userSpaceOnUse" x1="60" x2="322" y1="0" y2="0"><stop offset="0" stop-color="#00ffb6"/><stop offset="0.4427" stop-color="#00ff93"/><stop offset="0.687" stop-color="#00ff68"/><stop offset="0.6947" stop-color="#29ff66"/><stop offset="0.7023" stop-color="#3cff64"/><stop offset="0.7252" stop-color="#5bff5d"/><stop offset="0.7595" stop-color="#78ff4f"/><stop offset="0.813" stop-color="#98ff2b"/><stop offset="0.8244" stop-color="#9dff18"/><stop offset="0.8282" stop-color="#9fff00"/><stop offset="1" stop-color="#e6ff00"/></linearGradient><linearGradient id="g76" gradientUnits="userSpaceOnUse" x1="60" x2="324" y1="0" y2="0"><stop offset="0" stop-color="#00ffb7"/><stop offset="0.4129" stop-color="#00ff98"/><stop offset="0.6818" stop-color="#00ff6c"/><stop offset="0.6856" stop-color="#25ff6b"/><stop offset="0.697" stop-color="#40ff68"/><stop offset="0.7273" stop-color="#65ff5e"/><stop offset="0.7538" stop-color="#7aff54"/><stop offset="0.8106" stop-color="#9bff32"/><stop offset="0.8258" stop-color="#a3ff1e"/><stop offset="0.8333" stop-color="#a6ff00"/><stop offset="1" stop-color="#ebff00"/></linearGradient><linearGradient id="g77" gradientUnits="userSpaceOnUse" x1="60" x2="327" y1="0" y2="0"><stop offset="0" stop-color="#00ffb9"/><stop offset="0.4157" stop-color="#0f9"/><stop offset="0.6704" stop-color="#00ff70"/><stop offset="0.6742" stop-color="#1fff6f"/><stop offset="0.6779" stop-color="#2dff6e"/><stop offset="0.6891" stop-color="#45ff6b"/><stop offset="0.7341" stop-color="#74ff5d"/><stop offset="0.809" stop-color="#a1ff34"/><stop offset="0.8277" stop-color="#aaff1b"/><stop offset="0.8352" stop-color="#aeff00"/><stop offset="1" stop-color="#f2ff00"/></linearGradient><linearGradient id="g78" gradientUnits="userSpaceOnUse" x1="60" x2="329" y1="0" y2="0"><stop offset="0" stop-color="#00ffba"/><stop offset="0.3829" stop-color="#00ff9e"/><stop offset="0.6617" stop-color="#00ff74"/><stop offset="0.6691" stop-color="#2aff72"/><stop offset="0.6803" stop-color="#43ff6f"/><stop offset="0.7323" stop-color="#79ff5f"/><stop offset="0.7658" stop-color="#8fff52"/><stop offset="0.8141" stop-color="#a8ff33"/><stop offset="0.829" stop-color="#afff20"/><stop offset="0.8327" stop-color="#b1ff17"/><stop offset="0.8364" stop-color="#b3ff00"/><stop offset="1" stop-color="#f7ff00"/></linearGradient><linearGradient id="g79" gradientUnits="userSpaceOnUse" x1="61" x2="331" y1="0" y2="0"><stop offset="0" stop-color="#0fb"/><stop offset="0.3852" stop-color="#00ff9f"/><stop offset="0.6519" stop-color="#0f7"/><stop offset="0.6556" stop-color="#08ff77"/><stop offset="0.6593" stop-color="#25ff76"/><stop offset="0.6704" stop-color="#41ff73"/><stop offset="0.6963" stop-color="#62ff6c"/><stop offset="0.7259" stop-color="#7bff63"/><stop offset="0.7704" stop-color="#97ff52"/><stop offset="0.8185" stop-color="#afff32"/><stop offset="0.8333" stop-color="#b6ff1d"/><stop offset="0.8407" stop-color="#b9ff00"/><stop offset="1" stop-color="#fcff00"/></linearGradient><linearGradient id="g80" gradientUnits="userSpaceOnUse" x1="61" x2="333" y1="0" y2="0"><stop offset="0" stop-color="#00ffbc"/><stop offset="0.3603" stop-color="#00ffa3"/><stop offset="0.6471" stop-color="#00ff7a"/><stop offset="0.6507" stop-color="#20ff79"/><stop offset="0.6618" stop-color="#3fff77"/><stop offset="0.6912" stop-color="#65ff70"/><stop offset="0.7243" stop-color="#80ff66"/><stop offset="0.7684" stop-color="#9bff55"/><stop offset="0.8199" stop-color="#b4ff34"/><stop offset="0.8346" stop-color="#bf2"/><stop offset="0.8456" stop-color="#c0ff00"/><stop offset="1" stop-color="#fffd00"/></linearGradient><linearGradient id="g81" gradientUnits="userSpaceOnUse" x1="61" x2="335" y1="0" y2="0"><stop offset="0" stop-color="#00ffbe"/><stop offset="0.3759" stop-color="#00ffa3"/><stop offset="0.6387" stop-color="#00ff7e"/><stop offset="0.646" stop-color="#2aff7c"/><stop offset="0.6606" stop-color="#49ff79"/><stop offset="0.6825" stop-color="#64ff74"/><stop offset="0.719" stop-color="#82ff69"/><stop offset="0.7774" stop-color="#a4ff53"/><stop offset="0.8248" stop-color="#bf3"/><stop offset="0.8431" stop-color="#c4ff17"/><stop offset="0.8467" stop-color="#c5ff00"/><stop offset="0.9781" stop-color="#fdff00"/><stop offset="1" stop-color="#fff800"/></linearGradient><linearGradient id="g82" gradientUnits="userSpaceOnUse" x1="61" x2="337" y1="0" y2="0"><stop offset="0" stop-color="#00ffbf"/><stop offset="0.3913" stop-color="#00ffa3"/><stop offset="0.6304" stop-color="#00ff81"/><stop offset="0.6341" stop-color="#0aff81"/><stop offset="0.6377" stop-color="#26ff80"/><stop offset="0.6558" stop-color="#4dff7c"/><stop offset="0.7138" stop-color="#84ff6d"/><stop offset="0.8116" stop-color="#baff41"/><stop offset="0.837" stop-color="#c5ff29"/><stop offset="0.8442" stop-color="#c9ff1d"/><stop offset="0.8514" stop-color="#cf0"/><stop offset="0.9674" stop-color="#feff00"/><stop offset="1" stop-color="#fff300"/></linearGradient><linearGradient id="g83" gradientUnits="userSpaceOnUse" x1="61" x2="340" y1="0" y2="0"><stop offset="0" stop-color="#00ffc1"/><stop offset="0.405" stop-color="#00ffa3"/><stop offset="0.6237" stop-color="#00ff84"/><stop offset="0.6272" stop-color="#20ff83"/><stop offset="0.6416" stop-color="#46ff80"/><stop offset="0.6703" stop-color="#69ff7a"/><stop offset="0.7133" stop-color="#8bff6e"/><stop offset="0.7706" stop-color="#acff59"/><stop offset="0.8136" stop-color="#c1ff40"/><stop offset="0.8387" stop-color="#ccff27"/><stop offset="0.8459" stop-color="#cfff1a"/><stop offset="0.853" stop-color="#d2ff00"/><stop offset="0.9498" stop-color="#fdff00"/><stop offset="1" stop-color="#ffed00"/></linearGradient><linearGradient id="g84" gradientUnits="userSpaceOnUse" x1="61" x2="342" y1="0" y2="0"><stop offset="0" stop-color="#00ffc2"/><stop offset="0.3808" stop-color="#00ffa7"/><stop offset="0.6157" stop-color="#00ff87"/><stop offset="0.6228" stop-color="#2aff86"/><stop offset="0.637" stop-color="#4aff83"/><stop offset="0.669" stop-color="#6fff7c"/><stop offset="0.7011" stop-color="#88ff74"/><stop offset="0.7687" stop-color="#afff5c"/><stop offset="0.8149" stop-color="#c6ff42"/><stop offset="0.847" stop-color="#d4ff1f"/><stop offset="0.8505" stop-color="#d6ff16"/><stop offset="0.8541" stop-color="#d7ff00"/><stop offset="0.9431" stop-color="#ff0"/><stop offset="1" stop-color="#ffe800"/></linearGradient><linearGradient id="g85" gradientUnits="userSpaceOnUse" x1="62" x2="344" y1="0" y2="0"><stop offset="0" stop-color="#00ffc3"/><stop offset="0.3191" stop-color="#00ffae"/><stop offset="0.6064" stop-color="#00ff8a"/><stop offset="0.6099" stop-color="#0cff8a"/><stop offset="0.6135" stop-color="#26ff89"/><stop offset="0.6277" stop-color="#48ff86"/><stop offset="0.6596" stop-color="#6eff80"/><stop offset="0.7057" stop-color="#91ff74"/><stop offset="0.7766" stop-color="#b8ff5a"/><stop offset="0.8191" stop-color="#ccff41"/><stop offset="0.8475" stop-color="#d9ff23"/><stop offset="0.8546" stop-color="#df1"/><stop offset="0.8582" stop-color="#deff00"/><stop offset="0.9326" stop-color="#ff0"/><stop offset="1" stop-color="#ffe300"/></linearGradient><linearGradient id="g86" gradientUnits="userSpaceOnUse" x1="62" x2="346" y1="0" y2="0"><stop offset="0" stop-color="#00ffc5"/><stop offset="0.3134" stop-color="#00ffb0"/><stop offset="0.6021" stop-color="#00ff8d"/><stop offset="0.6056" stop-color="#21ff8c"/><stop offset="0.6092" stop-color="#2eff8c"/><stop offset="0.6232" stop-color="#4cff89"/><stop offset="0.6479" stop-color="#6aff84"/><stop offset="0.7007" stop-color="#93ff77"/><stop offset="0.7676" stop-color="#b8ff60"/><stop offset="0.8239" stop-color="#d3ff40"/><stop offset="0.8486" stop-color="#dfff26"/><stop offset="0.8556" stop-color="#e2ff19"/><stop offset="0.8627" stop-color="#e5ff00"/><stop offset="0.9225" stop-color="#fffe00"/><stop offset="1" stop-color="#ffde00"/></linearGradient><linearGradient id="g87" gradientUnits="userSpaceOnUse" x1="62" x2="348" y1="0" y2="0"><stop offset="0" stop-color="#00ffc6"/><stop offset="0.3427" stop-color="#00ffaf"/><stop offset="0.5944" stop-color="#00ff90"/><stop offset="0.6014" stop-color="#2bff8f"/><stop offset="0.6154" stop-color="#4aff8c"/><stop offset="0.6503" stop-color="#73ff85"/><stop offset="0.6958" stop-color="#95ff7a"/><stop offset="0.7762" stop-color="#c1ff5e"/><stop offset="0.8287" stop-color="#daff3f"/><stop offset="0.8566" stop-color="#e7ff1e"/><stop offset="0.8601" stop-color="#e9ff15"/><stop offset="0.8636" stop-color="#eaff00"/><stop offset="0.9091" stop-color="#ff0"/><stop offset="1" stop-color="#ffda00"/></linearGradient><linearGradient id="g88" gradientUnits="userSpaceOnUse" x1="62" x2="351" y1="0" y2="0"><stop offset="0" stop-color="#00ffc7"/><stop offset="0.3253" stop-color="#00ffb2"/><stop offset="0.5848" stop-color="#00ff93"/><stop offset="0.5952" stop-color="#32ff91"/><stop offset="0.609" stop-color="#4eff8f"/><stop offset="0.6367" stop-color="#6fff8a"/><stop offset="0.6886" stop-color="#97ff7d"/><stop offset="0.7647" stop-color="#c1ff64"/><stop offset="0.8201" stop-color="#dcff46"/><stop offset="0.8512" stop-color="#ebff28"/><stop offset="0.8581" stop-color="#eeff1b"/><stop offset="0.8651" stop-color="#f1ff00"/><stop offset="0.8962" stop-color="#fffe00"/><stop offset="1" stop-color="#ffd400"/></linearGradient><linearGradient id="g89" gradientUnits="userSpaceOnUse" x1="63" x2="353" y1="0" y2="0"><stop offset="0" stop-color="#00ffc9"/><stop offset="0.3517" stop-color="#00ffb1"/><stop offset="0.5793" stop-color="#00ff95"/><stop offset="0.5828" stop-color="#21ff95"/><stop offset="0.5862" stop-color="#2fff94"/><stop offset="0.6" stop-color="#4cff92"/><stop offset="0.6276" stop-color="#6eff8d"/><stop offset="0.6862" stop-color="#9bff7f"/><stop offset="0.7586" stop-color="#c3ff68"/><stop offset="0.8172" stop-color="#e0ff4a"/><stop offset="0.8517" stop-color="#f0ff2b"/><stop offset="0.8621" stop-color="#f5ff18"/><stop offset="0.869" stop-color="#f8ff00"/><stop offset="0.8828" stop-color="#ff0"/><stop offset="1" stop-color="#ffd000"/></linearGradient><linearGradient id="g90" gradientUnits="userSpaceOnUse" x1="63" x2="355" y1="0" y2="0"><stop offset="0" stop-color="#00ffca"/><stop offset="0.3356" stop-color="#00ffb4"/><stop offset="0.5719" stop-color="#00ff98"/><stop offset="0.5788" stop-color="#2bff97"/><stop offset="0.5993" stop-color="#55ff94"/><stop offset="0.6199" stop-color="#6dff90"/><stop offset="0.6815" stop-color="#9dff82"/><stop offset="0.7534" stop-color="#c5ff6c"/><stop offset="0.8219" stop-color="#e7ff49"/><stop offset="0.8596" stop-color="#f9ff24"/><stop offset="0.8664" stop-color="#fcff14"/><stop offset="0.8699" stop-color="#feff00"/><stop offset="1" stop-color="#ffcb00"/></linearGradient><linearGradient id="g91" gradientUnits="userSpaceOnUse" x1="63" x2="357" y1="0" y2="0"><stop offset="0" stop-color="#00ffcb"/><stop offset="0.3197" stop-color="#00ffb7"/><stop offset="0.5646" stop-color="#00ff9b"/><stop offset="0.5714" stop-color="#26ff9a"/><stop offset="0.5782" stop-color="#3bff99"/><stop offset="0.602" stop-color="#61ff95"/><stop offset="0.6429" stop-color="#87ff8d"/><stop offset="0.7177" stop-color="#b7ff7a"/><stop offset="0.7789" stop-color="#d6ff63"/><stop offset="0.8299" stop-color="#f0ff46"/><stop offset="0.8605" stop-color="#ffff27"/><stop offset="0.8673" stop-color="#fffc1a"/><stop offset="0.8741" stop-color="#fff900"/><stop offset="1" stop-color="#ffc700"/></linearGradient><linearGradient id="g92" gradientUnits="userSpaceOnUse" x1="63" x2="359" y1="0" y2="0"><stop offset="0" stop-color="#00ffcd"/><stop offset="0.3142" stop-color="#00ffb9"/><stop offset="0.5608" stop-color="#00ff9e"/><stop offset="0.5642" stop-color="#21ff9d"/><stop offset="0.5676" stop-color="#2fff9d"/><stop offset="0.5912" stop-color="#5bff99"/><stop offset="0.6318" stop-color="#84ff91"/><stop offset="0.7095" stop-color="#b7ff7e"/><stop offset="0.7872" stop-color="#dfff61"/><stop offset="0.8345" stop-color="#f7ff45"/><stop offset="0.8649" stop-color="#fff824"/><stop offset="0.8784" stop-color="#fff200"/><stop offset="1" stop-color="#ffc300"/></linearGradient><linearGradient id="g93" gradientUnits="userSpaceOnUse" x1="63" x2="361" y1="0" y2="0"><stop offset="0" stop-color="#00ffce"/><stop offset="0.3221" stop-color="#00ffba"/><stop offset="0.5537" stop-color="#00ffa0"/><stop offset="0.557" stop-color="#1bffa0"/><stop offset="0.5604" stop-color="#2bffa0"/><stop offset="0.5671" stop-color="#3eff9f"/><stop offset="0.5839" stop-color="#5aff9c"/><stop offset="0.6275" stop-color="#86ff94"/><stop offset="0.7047" stop-color="#b9ff81"/><stop offset="0.7718" stop-color="#dcff6a"/><stop offset="0.8322" stop-color="#fbff49"/><stop offset="0.8658" stop-color="#fff327"/><stop offset="0.8758" stop-color="#ffee12"/><stop offset="0.8792" stop-color="#ffed00"/><stop offset="1" stop-color="#ffbf00"/></linearGradient><linearGradient id="g94" gradientUnits="userSpaceOnUse" x1="64" x2="364" y1="0" y2="0"><stop offset="0" stop-color="#00ffd0"/><stop offset="0.3267" stop-color="#0fb"/><stop offset="0.5433" stop-color="#00ffa3"/><stop offset="0.55" stop-color="#27ffa2"/><stop offset="0.5533" stop-color="#32ffa2"/><stop offset="0.5767" stop-color="#5dff9e"/><stop offset="0.63" stop-color="#90ff95"/><stop offset="0.6933" stop-color="#b9ff85"/><stop offset="0.7633" stop-color="#deff6e"/><stop offset="0.8267" stop-color="#ffff4d"/><stop offset="0.8633" stop-color="#ffed29"/><stop offset="0.8733" stop-color="#ffe918"/><stop offset="0.88" stop-color="#ffe600"/><stop offset="1" stop-color="#ffb900"/></linearGradient><linearGradient id="g95" gradientUnits="userSpaceOnUse" x1="64" x2="366" y1="0" y2="0"><stop offset="0" stop-color="#00ffd1"/><stop offset="0.2848" stop-color="#00ffc0"/><stop offset="0.5397" stop-color="#00ffa6"/><stop offset="0.543" stop-color="#21ffa5"/><stop offset="0.5497" stop-color="#38ffa4"/><stop offset="0.5795" stop-color="#68ffa0"/><stop offset="0.6258" stop-color="#92ff97"/><stop offset="0.7119" stop-color="#c8ff82"/><stop offset="0.8179" stop-color="#fffe55"/><stop offset="0.8675" stop-color="#ffe726"/><stop offset="0.8841" stop-color="#ffdf00"/><stop offset="1" stop-color="#ffb500"/></linearGradient><linearGradient id="g96" gradientUnits="userSpaceOnUse" x1="64" x2="368" y1="0" y2="0"><stop offset="0" stop-color="#00ffd3"/><stop offset="0.3059" stop-color="#00ffc0"/><stop offset="0.5329" stop-color="#00ffa8"/><stop offset="0.5362" stop-color="#1bffa8"/><stop offset="0.5395" stop-color="#2bffa7"/><stop offset="0.5461" stop-color="#3effa7"/><stop offset="0.5625" stop-color="#5affa4"/><stop offset="0.5855" stop-color="#75ffa1"/><stop offset="0.6414" stop-color="#a2ff96"/><stop offset="0.7401" stop-color="#dcff7a"/><stop offset="0.8059" stop-color="#ffff5e"/><stop offset="0.8388" stop-color="#ffef45"/><stop offset="0.8684" stop-color="#ffe128"/><stop offset="0.8783" stop-color="#ffdd19"/><stop offset="0.8849" stop-color="#ffda00"/><stop offset="1" stop-color="#ffb100"/></linearGradient><linearGradient id="g97" gradientUnits="userSpaceOnUse" x1="64" x2="370" y1="0" y2="0"><stop offset="0" stop-color="#00ffd4"/><stop offset="0.3268" stop-color="#00ffc0"/><stop offset="0.5261" stop-color="#00ffab"/><stop offset="0.5327" stop-color="#27ffaa"/><stop offset="0.5392" stop-color="#3bffa9"/><stop offset="0.5523" stop-color="#54ffa8"/><stop offset="0.5784" stop-color="#74ffa4"/><stop offset="0.6667" stop-color="#b7ff92"/><stop offset="0.7941" stop-color="#feff66"/><stop offset="0.866" stop-color="#ffde2d"/><stop offset="0.8824" stop-color="#ffd716"/><stop offset="0.8889" stop-color="#ffd400"/><stop offset="1" stop-color="#ffae00"/></linearGradient><linearGradient id="g98" gradientUnits="userSpaceOnUse" x1="65" x2="372" y1="0" y2="0"><stop offset="0" stop-color="#00ffd6"/><stop offset="0.3453" stop-color="#00ffc0"/><stop offset="0.5212" stop-color="#00ffad"/><stop offset="0.5244" stop-color="#21ffad"/><stop offset="0.5342" stop-color="#40ffac"/><stop offset="0.57" stop-color="#73ffa7"/><stop offset="0.6319" stop-color="#a6ff9b"/><stop offset="0.7785" stop-color="#fbff6f"/><stop offset="0.8697" stop-color="#ffd72b"/><stop offset="0.8827" stop-color="#ffd219"/><stop offset="0.8925" stop-color="#ffce00"/><stop offset="1" stop-color="#fa0"/></linearGradient><linearGradient id="g99" gradientUnits="userSpaceOnUse" x1="65" x2="374" y1="0" y2="0"><stop offset="0" stop-color="#00ffd7"/><stop offset="0.2783" stop-color="#00ffc7"/><stop offset="0.5146" stop-color="#00ffb0"/><stop offset="0.5178" stop-color="#1bffb0"/><stop offset="0.521" stop-color="#2bffaf"/><stop offset="0.5307" stop-color="#45ffae"/><stop offset="0.5728" stop-color="#7cffa8"/><stop offset="0.6278" stop-color="#a8ff9e"/><stop offset="0.767" stop-color="#faff76"/><stop offset="0.8706" stop-color="#ffd22c"/><stop offset="0.8867" stop-color="#ffcc16"/><stop offset="0.8932" stop-color="#ffc900"/><stop offset="1" stop-color="#ffa600"/></linearGradient><linearGradient id="g100" gradientUnits="userSpaceOnUse" x1="65" x2="377" y1="0" y2="0"><stop offset="0" stop-color="#00ffd9"/><stop offset="0.5064" stop-color="#00ffb3"/><stop offset="0.5128" stop-color="#27ffb2"/><stop offset="0.5192" stop-color="#3bffb1"/><stop offset="0.5353" stop-color="#59ffaf"/><stop offset="0.5609" stop-color="#78ffab"/><stop offset="0.6218" stop-color="#aaffa1"/><stop offset="0.7628" stop-color="#feff78"/><stop offset="0.859" stop-color="#ffd236"/><stop offset="0.8846" stop-color="#ffc71a"/><stop offset="0.8942" stop-color="#ffc400"/><stop offset="1" stop-color="#ffa100"/></linearGradient><linearGradient id="g101" gradientUnits="userSpaceOnUse" x1="66" x2="379" y1="0" y2="0"><stop offset="0" stop-color="#00ffda"/><stop offset="0.5016" stop-color="#00ffb5"/><stop offset="0.5048" stop-color="#21ffb5"/><stop offset="0.5144" stop-color="#40ffb4"/><stop offset="0.5304" stop-color="#5cffb1"/><stop offset="0.5527" stop-color="#77ffae"/><stop offset="0.6166" stop-color="#acffa3"/><stop offset="0.754" stop-color="#ffff7e"/><stop offset="0.8658" stop-color="#ffca31"/><stop offset="0.885" stop-color="#ffc31c"/><stop offset="0.8978" stop-color="#ffbe00"/><stop offset="1" stop-color="#ff9d00"/></linearGradient><linearGradient id="g102" gradientUnits="userSpaceOnUse" x1="66" x2="381" y1="0" y2="0"><stop offset="0" stop-color="#00ffdc"/><stop offset="0.4952" stop-color="#00ffb8"/><stop offset="0.4984" stop-color="#1bffb7"/><stop offset="0.5016" stop-color="#2bffb7"/><stop offset="0.5079" stop-color="#3dffb6"/><stop offset="0.527" stop-color="#5fffb4"/><stop offset="0.546" stop-color="#76ffb1"/><stop offset="0.6127" stop-color="#aeffa6"/><stop offset="0.7429" stop-color="#feff84"/><stop offset="0.8698" stop-color="#ffc42f"/><stop offset="0.8921" stop-color="#ffbc15"/><stop offset="0.8984" stop-color="#ffba00"/><stop offset="1" stop-color="#ff9a00"/></linearGradient><linearGradient id="g103" gradientUnits="userSpaceOnUse" x1="66" x2="383" y1="0" y2="0"><stop offset="0" stop-color="#0fd"/><stop offset="0.489" stop-color="#00ffba"/><stop offset="0.4953" stop-color="#26ffba"/><stop offset="0.5079" stop-color="#49ffb8"/><stop offset="0.5489" stop-color="#7fffb3"/><stop offset="0.6088" stop-color="#b0ffa9"/><stop offset="0.735" stop-color="#feff88"/><stop offset="0.8707" stop-color="#ffc030"/><stop offset="0.8927" stop-color="#ffb818"/><stop offset="0.9022" stop-color="#ffb400"/><stop offset="1" stop-color="#ff9600"/></linearGradient><linearGradient id="g104" gradientUnits="userSpaceOnUse" x1="66" x2="385" y1="0" y2="0"><stop offset="0" stop-color="#00ffdf"/><stop offset="0.4859" stop-color="#00ffbd"/><stop offset="0.489" stop-color="#21ffbc"/><stop offset="0.4984" stop-color="#40ffbb"/><stop offset="0.5204" stop-color="#65ffb9"/><stop offset="0.5423" stop-color="#7effb6"/><stop offset="0.605" stop-color="#b2ffac"/><stop offset="0.7273" stop-color="#ffff8d"/><stop offset="0.8621" stop-color="#ffbf38"/><stop offset="0.8903" stop-color="#ffb41e"/><stop offset="0.906" stop-color="#ffaf00"/><stop offset="1" stop-color="#ff9200"/></linearGradient><linearGradient id="g105" gradientUnits="userSpaceOnUse" x1="67" x2="388" y1="0" y2="0"><stop offset="0" stop-color="#00ffe1"/><stop offset="0.4766" stop-color="#00ffbf"/><stop offset="0.4798" stop-color="#1bffbf"/><stop offset="0.4829" stop-color="#2bffbf"/><stop offset="0.4891" stop-color="#3dffbe"/><stop offset="0.5078" stop-color="#5fffbc"/><stop offset="0.5296" stop-color="#7affb9"/><stop offset="0.5981" stop-color="#b4ffae"/><stop offset="0.7134" stop-color="#feff93"/><stop offset="0.8629" stop-color="#ffb936"/><stop offset="0.8941" stop-color="#ffae18"/><stop offset="0.9034" stop-color="#ffab00"/><stop offset="1" stop-color="#ff8e00"/></linearGradient><linearGradient id="g106" gradientUnits="userSpaceOnUse" x1="67" x2="390" y1="0" y2="0"><stop offset="0" stop-color="#00ffe2"/><stop offset="0.4706" stop-color="#00ffc2"/><stop offset="0.4768" stop-color="#26ffc1"/><stop offset="0.483" stop-color="#3bffc1"/><stop offset="0.4985" stop-color="#59ffbf"/><stop offset="0.5232" stop-color="#79ffbc"/><stop offset="0.5913" stop-color="#b4ffb2"/><stop offset="0.7059" stop-color="#ffff97"/><stop offset="0.7709" stop-color="#ffdb6f"/><stop offset="0.87" stop-color="#ffb232"/><stop offset="0.8978" stop-color="#ffa916"/><stop offset="0.9071" stop-color="#ffa600"/><stop offset="1" stop-color="#ff8a00"/></linearGradient><linearGradient id="g107" gradientUnits="userSpaceOnUse" x1="67" x2="392" y1="0" y2="0"><stop offset="0" stop-color="#00ffe4"/><stop offset="0.4677" stop-color="#00ffc4"/><stop offset="0.4708" stop-color="#21ffc4"/><stop offset="0.48" stop-color="#40ffc3"/><stop offset="0.5169" stop-color="#78ffbf"/><stop offset="0.5877" stop-color="#b6ffb4"/><stop offset="0.6985" stop-color="#ffff9b"/><stop offset="0.7846" stop-color="#ffd067"/><stop offset="0.8738" stop-color="#ffad30"/><stop offset="0.8985" stop-color="#ffa419"/><stop offset="0.9046" stop-color="#ffa20e"/><stop offset="0.9077" stop-color="#ffa100"/><stop offset="1" stop-color="#ff8700"/></linearGradient><linearGradient id="g108" gradientUnits="userSpaceOnUse" x1="68" x2="394" y1="0" y2="0"><stop offset="0" stop-color="#00ffe6"/><stop offset="0.4601" stop-color="#00ffc7"/><stop offset="0.4632" stop-color="#1bffc7"/><stop offset="0.4724" stop-color="#3dffc6"/><stop offset="0.5092" stop-color="#77ffc2"/><stop offset="0.5798" stop-color="#b6ffb8"/><stop offset="0.6871" stop-color="#feffa1"/><stop offset="0.7761" stop-color="#ffcf6b"/><stop offset="0.8712" stop-color="#fa3"/><stop offset="0.8988" stop-color="#ffa01b"/><stop offset="0.911" stop-color="#ff9c00"/><stop offset="1" stop-color="#ff8300"/></linearGradient><linearGradient id="g109" gradientUnits="userSpaceOnUse" x1="68" x2="396" y1="0" y2="0"><stop offset="0" stop-color="#00ffe7"/><stop offset="0.4543" stop-color="#00ffca"/><stop offset="0.4604" stop-color="#26ffc9"/><stop offset="0.4695" stop-color="#42ffc8"/><stop offset="0.503" stop-color="#76ffc5"/><stop offset="0.5579" stop-color="#aaffbd"/><stop offset="0.6799" stop-color="#ffffa5"/><stop offset="0.7683" stop-color="#ffce6f"/><stop offset="0.8811" stop-color="#ffa22d"/><stop offset="0.9055" stop-color="#ff9a15"/><stop offset="0.9146" stop-color="#ff9800"/><stop offset="1" stop-color="#ff8000"/></linearGradient><linearGradient id="g110" gradientUnits="userSpaceOnUse" x1="68" x2="398" y1="0" y2="0"><stop offset="0" stop-color="#00ffe9"/><stop offset="0.4515" stop-color="#0fc"/><stop offset="0.4545" stop-color="#21ffcc"/><stop offset="0.4606" stop-color="#37ffcb"/><stop offset="0.4727" stop-color="#52ffca"/><stop offset="0.4939" stop-color="#71ffc8"/><stop offset="0.5606" stop-color="#b1ffbf"/><stop offset="0.6697" stop-color="#feffaa"/><stop offset="0.7667" stop-color="#ffca70"/><stop offset="0.8758" stop-color="#ffa032"/><stop offset="0.903" stop-color="#ff971b"/><stop offset="0.9121" stop-color="#ff950d"/><stop offset="0.9152" stop-color="#ff9400"/><stop offset="1" stop-color="#ff7c00"/></linearGradient><linearGradient id="g111" gradientUnits="userSpaceOnUse" x1="69" x2="401" y1="0" y2="0"><stop offset="0" stop-color="#00ffeb"/><stop offset="0.4428" stop-color="#00ffcf"/><stop offset="0.4458" stop-color="#1bffcf"/><stop offset="0.4548" stop-color="#3dffce"/><stop offset="0.4849" stop-color="#70ffcb"/><stop offset="0.5602" stop-color="#b8ffc1"/><stop offset="0.6596" stop-color="#ffffae"/><stop offset="0.756" stop-color="#ffc974"/><stop offset="0.8855" stop-color="#ff982a"/><stop offset="0.9096" stop-color="#ff9111"/><stop offset="0.9157" stop-color="#ff8f00"/><stop offset="1" stop-color="#ff7800"/></linearGradient><linearGradient id="g112" gradientUnits="userSpaceOnUse" x1="69" x2="403" y1="0" y2="0"><stop offset="0" stop-color="#00ffed"/><stop offset="0.4371" stop-color="#00ffd2"/><stop offset="0.4431" stop-color="#26ffd1"/><stop offset="0.4491" stop-color="#3affd1"/><stop offset="0.4611" stop-color="#54ffd0"/><stop offset="0.485" stop-color="#76ffcd"/><stop offset="0.5479" stop-color="#b3ffc5"/><stop offset="0.6527" stop-color="#fffeb2"/><stop offset="0.7485" stop-color="#ffc877"/><stop offset="0.8743" stop-color="#ff9833"/><stop offset="0.9072" stop-color="#ff8e18"/><stop offset="0.9192" stop-color="#ff8a00"/><stop offset="1" stop-color="#ff7500"/></linearGradient><linearGradient id="g113" gradientUnits="userSpaceOnUse" x1="69" x2="405" y1="0" y2="0"><stop offset="0" stop-color="#00ffef"/><stop offset="0.4345" stop-color="#00ffd4"/><stop offset="0.4375" stop-color="#21ffd4"/><stop offset="0.4464" stop-color="#3fffd3"/><stop offset="0.4792" stop-color="#75ffd0"/><stop offset="0.5565" stop-color="#bfffc6"/><stop offset="0.6429" stop-color="#feffb7"/><stop offset="0.756" stop-color="#ffc073"/><stop offset="0.8661" stop-color="#ff9739"/><stop offset="0.9048" stop-color="#ff8b1d"/><stop offset="0.9137" stop-color="#ff8812"/><stop offset="0.9196" stop-color="#ff8700"/><stop offset="1" stop-color="#ff7100"/></linearGradient><linearGradient id="g114" gradientUnits="userSpaceOnUse" x1="70" x2="407" y1="0" y2="0"><stop offset="0" stop-color="#00fff0"/><stop offset="0.4273" stop-color="#00ffd7"/><stop offset="0.4303" stop-color="#1bffd7"/><stop offset="0.4332" stop-color="#2affd7"/><stop offset="0.4421" stop-color="#44ffd6"/><stop offset="0.4718" stop-color="#74ffd3"/><stop offset="0.5252" stop-color="#abffcd"/><stop offset="0.635" stop-color="#ffb"/><stop offset="0.7389" stop-color="#ffc37b"/><stop offset="0.8754" stop-color="#ff9034"/><stop offset="0.911" stop-color="#ff8518"/><stop offset="0.9228" stop-color="#ff8200"/><stop offset="1" stop-color="#ff6e00"/></linearGradient><linearGradient id="g115" gradientUnits="userSpaceOnUse" x1="70" x2="409" y1="0" y2="0"><stop offset="0" stop-color="#00fff2"/><stop offset="0.4218" stop-color="#00ffda"/><stop offset="0.4277" stop-color="#25ffda"/><stop offset="0.4336" stop-color="#3affd9"/><stop offset="0.4631" stop-color="#6fffd6"/><stop offset="0.531" stop-color="#b5ffcf"/><stop offset="0.6254" stop-color="#feffc0"/><stop offset="0.7581" stop-color="#ffb671"/><stop offset="0.8879" stop-color="#ff892d"/><stop offset="0.9115" stop-color="#ff821a"/><stop offset="0.9263" stop-color="#ff7d00"/><stop offset="1" stop-color="#ff6a00"/></linearGradient><linearGradient id="g116" gradientUnits="userSpaceOnUse" x1="70" x2="412" y1="0" y2="0"><stop offset="0" stop-color="#00fff4"/><stop offset="0.4181" stop-color="#0fd"/><stop offset="0.4211" stop-color="#21ffdd"/><stop offset="0.4298" stop-color="#3fffdc"/><stop offset="0.4649" stop-color="#79ffd9"/><stop offset="0.5146" stop-color="#adffd3"/><stop offset="0.617" stop-color="#ffffc4"/><stop offset="0.7193" stop-color="#ffc284"/><stop offset="0.8772" stop-color="#ff8733"/><stop offset="0.9152" stop-color="#ff7c15"/><stop offset="0.924" stop-color="#ff7a00"/><stop offset="1" stop-color="#f60"/></linearGradient><linearGradient id="g117" gradientUnits="userSpaceOnUse" x1="71" x2="414" y1="0" y2="0"><stop offset="0" stop-color="#00fff6"/><stop offset="0.4111" stop-color="#00ffe0"/><stop offset="0.414" stop-color="#1bffe0"/><stop offset="0.4227" stop-color="#3cffdf"/><stop offset="0.4577" stop-color="#78ffdc"/><stop offset="0.5131" stop-color="#b2ffd6"/><stop offset="0.6093" stop-color="#fffec8"/><stop offset="0.6706" stop-color="#ffd69e"/><stop offset="0.7376" stop-color="#ffb579"/><stop offset="0.8834" stop-color="#ff8230"/><stop offset="0.9155" stop-color="#ff7917"/><stop offset="0.9271" stop-color="#ff7500"/><stop offset="1" stop-color="#ff6300"/></linearGradient><linearGradient id="g118" gradientUnits="userSpaceOnUse" x1="71" x2="416" y1="0" y2="0"><stop offset="0" stop-color="#00fff8"/><stop offset="0.4058" stop-color="#00ffe3"/><stop offset="0.4116" stop-color="#25ffe2"/><stop offset="0.4203" stop-color="#41ffe2"/><stop offset="0.4522" stop-color="#77ffdf"/><stop offset="0.513" stop-color="#b7ffd9"/><stop offset="0.6" stop-color="#feffcd"/><stop offset="0.6464" stop-color="#ffdfac"/><stop offset="0.7275" stop-color="#ffb57e"/><stop offset="0.8899" stop-color="#ff7c2d"/><stop offset="0.9159" stop-color="#ff7519"/><stop offset="0.9304" stop-color="#ff7100"/><stop offset="1" stop-color="#ff5f00"/></linearGradient><linearGradient id="g119" gradientUnits="userSpaceOnUse" x1="71" x2="418" y1="0" y2="0"><stop offset="0" stop-color="#00fffa"/><stop offset="0.4035" stop-color="#00ffe6"/><stop offset="0.4063" stop-color="#20ffe5"/><stop offset="0.4121" stop-color="#36ffe5"/><stop offset="0.4265" stop-color="#57ffe4"/><stop offset="0.4438" stop-color="#72ffe2"/><stop offset="0.4957" stop-color="#acffdd"/><stop offset="0.5937" stop-color="#ffffd1"/><stop offset="0.6513" stop-color="#ffd7a8"/><stop offset="0.7176" stop-color="#ffb583"/><stop offset="0.8963" stop-color="#ff772a"/><stop offset="0.9222" stop-color="#ff7014"/><stop offset="0.9308" stop-color="#ff6d00"/><stop offset="1" stop-color="#ff5c00"/></linearGradient><linearGradient id="g120" gradientUnits="userSpaceOnUse" x1="72" x2="420" y1="0" y2="0"><stop offset="0" stop-color="#00fffc"/><stop offset="0.3966" stop-color="#00ffe9"/><stop offset="0.3994" stop-color="#1bffe9"/><stop offset="0.408" stop-color="#3cffe8"/><stop offset="0.4253" stop-color="#5fffe7"/><stop offset="0.4454" stop-color="#7cffe5"/><stop offset="0.4971" stop-color="#b4ffe0"/><stop offset="0.5805" stop-color="#fcffd6"/><stop offset="0.6466" stop-color="#ffd4a9"/><stop offset="0.7299" stop-color="#ffab7c"/><stop offset="0.8908" stop-color="#ff752e"/><stop offset="0.9253" stop-color="#ff6b13"/><stop offset="0.9339" stop-color="#ff6900"/><stop offset="1" stop-color="#ff5800"/></linearGradient><linearGradient id="g121" gradientUnits="userSpaceOnUse" x1="72" x2="422" y1="0" y2="0"><stop offset="0" stop-color="#00fffe"/><stop offset="0.3914" stop-color="#00ffec"/><stop offset="0.3971" stop-color="#25ffeb"/><stop offset="0.4029" stop-color="#39ffeb"/><stop offset="0.4143" stop-color="#53ffea"/><stop offset="0.44" stop-color="#7bffe8"/><stop offset="0.4886" stop-color="#b1ffe4"/><stop offset="0.5771" stop-color="#ffffda"/><stop offset="0.6314" stop-color="#ffd8b2"/><stop offset="0.72" stop-color="#ffab80"/><stop offset="0.8943" stop-color="#ff702d"/><stop offset="0.9229" stop-color="#ff6818"/><stop offset="0.9371" stop-color="#ff6400"/><stop offset="1" stop-color="#ff5400"/></linearGradient><linearGradient id="g122" gradientUnits="userSpaceOnUse" x1="72" x2="425" y1="0" y2="0"><stop offset="0" stop-color="#00fdff"/><stop offset="0.3853" stop-color="#00ffef"/><stop offset="0.3881" stop-color="#03ffef"/><stop offset="0.3909" stop-color="#20ffef"/><stop offset="0.3994" stop-color="#3effee"/><stop offset="0.4334" stop-color="#7affec"/><stop offset="0.4788" stop-color="#aeffe8"/><stop offset="0.5637" stop-color="#fbffdf"/><stop offset="0.6431" stop-color="#ffcba8"/><stop offset="0.7195" stop-color="#ffa67f"/><stop offset="0.8952" stop-color="#ff6c2c"/><stop offset="0.9263" stop-color="#ff6313"/><stop offset="0.9348" stop-color="#ff6100"/><stop offset="1" stop-color="#ff5000"/></linearGradient><linearGradient id="g123" gradientUnits="userSpaceOnUse" x1="73" x2="427" y1="0" y2="0"><stop offset="0" stop-color="#00fbff"/><stop offset="0.3814" stop-color="#00fff2"/><stop offset="0.3842" stop-color="#1afff2"/><stop offset="0.3898" stop-color="#33fff2"/><stop offset="0.404" stop-color="#55fff1"/><stop offset="0.4209" stop-color="#71ffef"/><stop offset="0.4831" stop-color="#b9ffea"/><stop offset="0.5565" stop-color="#fcffe3"/><stop offset="0.6215" stop-color="#ffd2b4"/><stop offset="0.6949" stop-color="#ffac8a"/><stop offset="0.8983" stop-color="#ff672b"/><stop offset="0.9294" stop-color="#ff5f12"/><stop offset="0.9379" stop-color="#ff5c00"/><stop offset="1" stop-color="#ff4c00"/></linearGradient><linearGradient id="g124" gradientUnits="userSpaceOnUse" x1="73" x2="429" y1="0" y2="0"><stop offset="0" stop-color="#00f9ff"/><stop offset="0.1938" stop-color="#0ff"/><stop offset="0.3764" stop-color="#00fff5"/><stop offset="0.382" stop-color="#24fff5"/><stop offset="0.3876" stop-color="#38fff5"/><stop offset="0.4101" stop-color="#67fff3"/><stop offset="0.4494" stop-color="#9bfff0"/><stop offset="0.5506" stop-color="#fdffe7"/><stop offset="0.6067" stop-color="#ffd6bc"/><stop offset="0.6966" stop-color="#ffa789"/><stop offset="0.9017" stop-color="#ff622a"/><stop offset="0.927" stop-color="#ff5c17"/><stop offset="0.941" stop-color="#ff5800"/><stop offset="1" stop-color="#ff4800"/></linearGradient><linearGradient id="g125" gradientUnits="userSpaceOnUse" x1="73" x2="431" y1="0" y2="0"><stop offset="0" stop-color="#00f7ff"/><stop offset="0.3715" stop-color="#00fff9"/><stop offset="0.3743" stop-color="#06fff9"/><stop offset="0.3771" stop-color="#20fff8"/><stop offset="0.3827" stop-color="#35fff8"/><stop offset="0.4078" stop-color="#6afff7"/><stop offset="0.4525" stop-color="#a4fff4"/><stop offset="0.5419" stop-color="#fbffec"/><stop offset="0.6285" stop-color="#ffc4ad"/><stop offset="0.6983" stop-color="#ffa287"/><stop offset="0.905" stop-color="#ff5e29"/><stop offset="0.933" stop-color="#ff5613"/><stop offset="0.9413" stop-color="#ff5400"/><stop offset="1" stop-color="#f40"/></linearGradient><linearGradient id="g126" gradientUnits="userSpaceOnUse" x1="74" x2="433" y1="0" y2="0"><stop offset="0" stop-color="#00f5ff"/><stop offset="0.3677" stop-color="#00fffc"/><stop offset="0.3705" stop-color="#1afffc"/><stop offset="0.3788" stop-color="#3bfffb"/><stop offset="0.4039" stop-color="#6dfffa"/><stop offset="0.4401" stop-color="#9dfff8"/><stop offset="0.5376" stop-color="#fffff0"/><stop offset="0.5989" stop-color="#ffd0bf"/><stop offset="0.6992" stop-color="#ff9d86"/><stop offset="0.9081" stop-color="#ff5928"/><stop offset="0.9359" stop-color="#ff5211"/><stop offset="0.9443" stop-color="#ff4f00"/><stop offset="1" stop-color="#ff4000"/></linearGradient><linearGradient id="g127" gradientUnits="userSpaceOnUse" x1="74" x2="435" y1="0" y2="0"><stop offset="0" stop-color="#00f3ff"/><stop offset="0.3629" stop-color="#00feff"/><stop offset="0.3684" stop-color="#24ffff"/><stop offset="0.374" stop-color="#38ffff"/><stop offset="0.4017" stop-color="#70fffe"/><stop offset="0.4404" stop-color="#a3fffb"/><stop offset="0.5291" stop-color="#fdfff5"/><stop offset="0.6094" stop-color="#ffc5b6"/><stop offset="0.7036" stop-color="#ff9784"/><stop offset="0.9058" stop-color="#ff562a"/><stop offset="0.9307" stop-color="#ff4f19"/><stop offset="0.9474" stop-color="#ff4b00"/><stop offset="1" stop-color="#ff3c00"/></linearGradient><linearGradient id="g128" gradientUnits="userSpaceOnUse" x1="75" x2="438" y1="0" y2="0"><stop offset="0" stop-color="#00f0ff"/><stop offset="0.3554" stop-color="#00fbff"/><stop offset="0.3581" stop-color="#07fbff"/><stop offset="0.3609" stop-color="#1ffbff"/><stop offset="0.3691" stop-color="#3cfcff"/><stop offset="0.3967" stop-color="#72fdff"/><stop offset="0.438" stop-color="#a9ffff"/><stop offset="0.5207" stop-color="#fefff9"/><stop offset="0.5923" stop-color="#ffc8bf"/><stop offset="0.686" stop-color="#ff998a"/><stop offset="0.8843" stop-color="#ff5835"/><stop offset="0.9311" stop-color="#ff4b18"/><stop offset="0.9421" stop-color="#ff470a"/><stop offset="0.9449" stop-color="#ff4700"/><stop offset="1" stop-color="#ff3700"/></linearGradient><linearGradient id="g129" gradientUnits="userSpaceOnUse" x1="75" x2="440" y1="0" y2="0"><stop offset="0" stop-color="#0ef"/><stop offset="0.3534" stop-color="#00f7ff"/><stop offset="0.3562" stop-color="#19f8ff"/><stop offset="0.3644" stop-color="#39f8ff"/><stop offset="0.3918" stop-color="#6ff9ff"/><stop offset="0.4438" stop-color="#b3fcff"/><stop offset="0.5123" stop-color="#fdfffe"/><stop offset="0.5863" stop-color="#ffc7c1"/><stop offset="0.6712" stop-color="#ff9b91"/><stop offset="0.9014" stop-color="#ff4f2d"/><stop offset="0.9342" stop-color="#ff4617"/><stop offset="0.9479" stop-color="#ff4200"/><stop offset="1" stop-color="#ff3200"/></linearGradient><linearGradient id="g130" gradientUnits="userSpaceOnUse" x1="75" x2="442" y1="0" y2="0"><stop offset="0" stop-color="#00ecff"/><stop offset="0.3488" stop-color="#00f4ff"/><stop offset="0.3569" stop-color="#2df4ff"/><stop offset="0.3842" stop-color="#68f5ff"/><stop offset="0.4251" stop-color="#a0f7ff"/><stop offset="0.5095" stop-color="#fdfbff"/><stop offset="0.5831" stop-color="#ffc4c2"/><stop offset="0.673" stop-color="#ff9690"/><stop offset="0.8992" stop-color="#ff4c2f"/><stop offset="0.9346" stop-color="#ff4118"/><stop offset="0.951" stop-color="#ff3c00"/><stop offset="1" stop-color="#ff2d00"/></linearGradient><linearGradient id="g131" gradientUnits="userSpaceOnUse" x1="76" x2="444" y1="0" y2="0"><stop offset="0" stop-color="#00eaff"/><stop offset="0.3424" stop-color="#00f1ff"/><stop offset="0.3533" stop-color="#32f1ff"/><stop offset="0.3777" stop-color="#65f2ff"/><stop offset="0.4293" stop-color="#aaf4ff"/><stop offset="0.5082" stop-color="#fff7ff"/><stop offset="0.5788" stop-color="#ffc1c3"/><stop offset="0.6576" stop-color="#ff9896"/><stop offset="0.9022" stop-color="#ff472e"/><stop offset="0.9375" stop-color="#ff3c17"/><stop offset="0.9511" stop-color="#ff3800"/><stop offset="1" stop-color="#ff2700"/></linearGradient><linearGradient id="g132" gradientUnits="userSpaceOnUse" x1="76" x2="446" y1="0" y2="0"><stop offset="0" stop-color="#00e8ff"/><stop offset="0.3405" stop-color="#00edff"/><stop offset="0.3432" stop-color="#18edff"/><stop offset="0.3514" stop-color="#36edff"/><stop offset="0.3811" stop-color="#6feeff"/><stop offset="0.4243" stop-color="#a7f0ff"/><stop offset="0.5054" stop-color="#fff3ff"/><stop offset="0.5784" stop-color="#ffbcc2"/><stop offset="0.6595" stop-color="#ff9395"/><stop offset="0.9" stop-color="#ff4330"/><stop offset="0.9351" stop-color="#ff381b"/><stop offset="0.9541" stop-color="#ff3200"/><stop offset="1" stop-color="#ff2100"/></linearGradient><linearGradient id="g133" gradientUnits="userSpaceOnUse" x1="77" x2="449" y1="0" y2="0"><stop offset="0" stop-color="#00e5ff"/><stop offset="0.3333" stop-color="#00eaff"/><stop offset="0.3387" stop-color="#20eaff"/><stop offset="0.3441" stop-color="#33eaff"/><stop offset="0.371" stop-color="#68ebff"/><stop offset="0.414" stop-color="#a1ecff"/><stop offset="0.5" stop-color="#feeeff"/><stop offset="0.5726" stop-color="#ffb9c3"/><stop offset="0.6398" stop-color="#ff969d"/><stop offset="0.9086" stop-color="#ff3b2b"/><stop offset="0.9409" stop-color="#ff3115"/><stop offset="0.9543" stop-color="#ff2c00"/><stop offset="1" stop-color="#ff1700"/></linearGradient><linearGradient id="g134" gradientUnits="userSpaceOnUse" x1="77" x2="451" y1="0" y2="0"><stop offset="0" stop-color="#00e3ff"/><stop offset="0.3289" stop-color="#00e6ff"/><stop offset="0.3316" stop-color="#08e6ff"/><stop offset="0.3342" stop-color="#1ce6ff"/><stop offset="0.3422" stop-color="#37e7ff"/><stop offset="0.377" stop-color="#75e7ff"/><stop offset="0.5" stop-color="#ffe9fe"/><stop offset="0.5561" stop-color="#ffbecd"/><stop offset="0.631" stop-color="#ff96a0"/><stop offset="0.8957" stop-color="#ff3b32"/><stop offset="0.9385" stop-color="#ff2c19"/><stop offset="0.9545" stop-color="#ff2600"/><stop offset="1" stop-color="#ff0900"/></linearGradient><linearGradient id="g135" gradientUnits="userSpaceOnUse" x1="77" x2="453" y1="0" y2="0"><stop offset="0" stop-color="#00e1ff"/><stop offset="0.3271" stop-color="#00e3ff"/><stop offset="0.3298" stop-color="#17e3ff"/><stop offset="0.3324" stop-color="#23e3ff"/><stop offset="0.3404" stop-color="#3ae3ff"/><stop offset="0.375" stop-color="#76e3ff"/><stop offset="0.4973" stop-color="#ffe5fe"/><stop offset="0.5559" stop-color="#ffb9cc"/><stop offset="0.6356" stop-color="#ff909d"/><stop offset="0.9016" stop-color="#ff3430"/><stop offset="0.9415" stop-color="#ff2518"/><stop offset="0.9574" stop-color="#ff1d00"/><stop offset="0.9734" stop-color="#ff1400"/><stop offset="0.9894" stop-color="#f00"/><stop offset="1" stop-color="#f00"/></linearGradient><linearGradient id="g136" gradientUnits="userSpaceOnUse" x1="78" x2="455" y1="0" y2="0"><stop offset="0" stop-color="#00dfff"/><stop offset="0.321" stop-color="#00e0ff"/><stop offset="0.3263" stop-color="#1fe0ff"/><stop offset="0.3342" stop-color="#37e0ff"/><stop offset="0.3634" stop-color="#6ce0ff"/><stop offset="0.4934" stop-color="#ffe1ff"/><stop offset="0.5544" stop-color="#ffb4cb"/><stop offset="0.618" stop-color="#ff93a5"/><stop offset="0.9045" stop-color="#ff2e2f"/><stop offset="0.9443" stop-color="#ff1c17"/><stop offset="0.9602" stop-color="#ff1200"/><stop offset="0.9735" stop-color="#f00"/><stop offset="1" stop-color="#f00"/></linearGradient><linearGradient id="g137" gradientUnits="userSpaceOnUse" x1="78" x2="457" y1="0" y2="0"><stop offset="0" stop-color="#0df"/><stop offset="0.3166" stop-color="#00dcff"/><stop offset="0.3245" stop-color="#25dcff"/><stop offset="0.3298" stop-color="#34dcff"/><stop offset="0.3615" stop-color="#6ddcff"/><stop offset="0.4142" stop-color="#aedcff"/><stop offset="0.4934" stop-color="#ffdbfd"/><stop offset="0.5541" stop-color="#ffafca"/><stop offset="0.6306" stop-color="#ff899e"/><stop offset="0.9103" stop-color="#ff252d"/><stop offset="0.9472" stop-color="#ff0f16"/><stop offset="0.9604" stop-color="#f00"/><stop offset="1" stop-color="#f00"/></linearGradient><linearGradient id="g138" gradientUnits="userSpaceOnUse" x1="79" x2="459" y1="0" y2="0"><stop offset="0" stop-color="#00daff"/><stop offset="0.3132" stop-color="#00d9ff"/><stop offset="0.3158" stop-color="#16d9ff"/><stop offset="0.3263" stop-color="#38d9ff"/><stop offset="0.3579" stop-color="#6ed9ff"/><stop offset="0.4132" stop-color="#b1d8ff"/><stop offset="0.4895" stop-color="#ffd7fd"/><stop offset="0.5526" stop-color="#ffaac9"/><stop offset="0.6263" stop-color="#ff869f"/><stop offset="0.8921" stop-color="#ff2736"/><stop offset="0.9289" stop-color="#ff1224"/><stop offset="0.9395" stop-color="#ff001d"/><stop offset="0.9579" stop-color="#ff000c"/><stop offset="0.9632" stop-color="#f00"/><stop offset="1" stop-color="#f00"/></linearGradient><linearGradient id="g139" gradientUnits="userSpaceOnUse" x1="79" x2="462" y1="0" y2="0"><stop offset="0" stop-color="#00d8ff"/><stop offset="0.3081" stop-color="#00d6ff"/><stop offset="0.3133" stop-color="#1dd6ff"/><stop offset="0.3211" stop-color="#35d5ff"/><stop offset="0.3499" stop-color="#68d5ff"/><stop offset="0.4125" stop-color="#b4d4ff"/><stop offset="0.4856" stop-color="#ffd3fe"/><stop offset="0.5352" stop-color="#ffafd3"/><stop offset="0.6136" stop-color="#ff87a4"/><stop offset="0.8773" stop-color="#ff263b"/><stop offset="0.9112" stop-color="#ff122c"/><stop offset="0.9217" stop-color="#ff0027"/><stop offset="0.9504" stop-color="#ff0014"/><stop offset="0.9634" stop-color="#f00"/><stop offset="1" stop-color="#f00"/></linearGradient><linearGradient id="g140" gradientUnits="userSpaceOnUse" x1="80" x2="464" y1="0" y2="0"><stop offset="0" stop-color="#00d6ff"/><stop offset="0.3021" stop-color="#00d2ff"/><stop offset="0.3151" stop-color="#32d2ff"/><stop offset="0.3464" stop-color="#69d2ff"/><stop offset="0.388" stop-color="#9dd1ff"/><stop offset="0.4818" stop-color="#ffcfff"/><stop offset="0.5339" stop-color="#ffaad2"/><stop offset="0.6094" stop-color="#ff84a5"/><stop offset="0.849" stop-color="#ff2c47"/><stop offset="0.8958" stop-color="#ff1234"/><stop offset="0.9062" stop-color="#ff002f"/><stop offset="0.9479" stop-color="#ff0018"/><stop offset="0.9635" stop-color="#f00"/><stop offset="1" stop-color="#f00"/></linearGradient><linearGradient id="g141" gradientUnits="userSpaceOnUse" x1="80" x2="466" y1="0" y2="0"><stop offset="0" stop-color="#00d4ff"/><stop offset="0.3005" stop-color="#00cfff"/><stop offset="0.3031" stop-color="#14cfff"/><stop offset="0.3109" stop-color="#2fcfff"/><stop offset="0.3368" stop-color="#5fceff"/><stop offset="0.3912" stop-color="#a3cdff"/><stop offset="0.4793" stop-color="#ffcbff"/><stop offset="0.5363" stop-color="#ffa3cf"/><stop offset="0.6062" stop-color="#ff81a6"/><stop offset="0.8394" stop-color="#ff2a4a"/><stop offset="0.8808" stop-color="#ff123b"/><stop offset="0.8912" stop-color="#ff0037"/><stop offset="0.9456" stop-color="#ff001b"/><stop offset="0.9663" stop-color="#f00"/><stop offset="1" stop-color="#f00"/></linearGradient><linearGradient id="g142" gradientUnits="userSpaceOnUse" x1="81" x2="468" y1="0" y2="0"><stop offset="0" stop-color="#00d1ff"/><stop offset="0.2946" stop-color="#0cf"/><stop offset="0.2997" stop-color="#1cccff"/><stop offset="0.3049" stop-color="#2ccbff"/><stop offset="0.3359" stop-color="#64cbff"/><stop offset="0.3928" stop-color="#a9c9ff"/><stop offset="0.478" stop-color="#ffc5fd"/><stop offset="0.5349" stop-color="#ff9fce"/><stop offset="0.6227" stop-color="#ff759d"/><stop offset="0.8295" stop-color="#ff284e"/><stop offset="0.8656" stop-color="#ff1241"/><stop offset="0.876" stop-color="#ff003d"/><stop offset="0.9457" stop-color="#ff001c"/><stop offset="0.9612" stop-color="#ff000e"/><stop offset="0.9664" stop-color="#ff0001"/><stop offset="1" stop-color="#f00"/></linearGradient><linearGradient id="g143" gradientUnits="userSpaceOnUse" x1="81" x2="470" y1="0" y2="0"><stop offset="0" stop-color="#00cfff"/><stop offset="0.2905" stop-color="#00c8ff"/><stop offset="0.2982" stop-color="#21c8ff"/><stop offset="0.3085" stop-color="#3bc8ff"/><stop offset="0.3342" stop-color="#65c7ff"/><stop offset="0.3907" stop-color="#a9c5ff"/><stop offset="0.4756" stop-color="#ffc1fe"/><stop offset="0.5424" stop-color="#ff96c8"/><stop offset="0.6195" stop-color="#ff729e"/><stop offset="0.8175" stop-color="#ff2753"/><stop offset="0.8509" stop-color="#ff1247"/><stop offset="0.8612" stop-color="#ff0043"/><stop offset="0.946" stop-color="#ff001d"/><stop offset="0.9614" stop-color="#ff0010"/><stop offset="0.9692" stop-color="#f00"/><stop offset="1" stop-color="#f00"/></linearGradient><linearGradient id="g144" gradientUnits="userSpaceOnUse" x1="81" x2="472" y1="0" y2="0"><stop offset="0" stop-color="#00cdff"/><stop offset="0.289" stop-color="#00c5ff"/><stop offset="0.2916" stop-color="#13c5ff"/><stop offset="0.2992" stop-color="#2dc5ff"/><stop offset="0.3274" stop-color="#5fc4ff"/><stop offset="0.3785" stop-color="#9ec2ff"/><stop offset="0.4731" stop-color="#ffbdfe"/><stop offset="0.532" stop-color="#ff97ce"/><stop offset="0.6164" stop-color="#ff6f9f"/><stop offset="0.8056" stop-color="#ff2657"/><stop offset="0.8363" stop-color="#ff124c"/><stop offset="0.8465" stop-color="#ff0049"/><stop offset="0.9361" stop-color="#ff0024"/><stop offset="0.9642" stop-color="#ff000f"/><stop offset="0.9719" stop-color="#f00"/><stop offset="1" stop-color="#f00"/></linearGradient><linearGradient id="g145" gradientUnits="userSpaceOnUse" x1="82" x2="475" y1="0" y2="0"><stop offset="0" stop-color="#00caff"/><stop offset="0.2824" stop-color="#00c2ff"/><stop offset="0.2875" stop-color="#1ac2ff"/><stop offset="0.2977" stop-color="#36c1ff"/><stop offset="0.3257" stop-color="#64c0ff"/><stop offset="0.3766" stop-color="#a1beff"/><stop offset="0.4682" stop-color="#ffb9ff"/><stop offset="0.5293" stop-color="#ff92cd"/><stop offset="0.6005" stop-color="#ff70a5"/><stop offset="0.7786" stop-color="#ff2b60"/><stop offset="0.8193" stop-color="#ff1252"/><stop offset="0.8295" stop-color="#ff004e"/><stop offset="0.9313" stop-color="#ff0026"/><stop offset="0.9593" stop-color="#ff0013"/><stop offset="0.9695" stop-color="#f00"/><stop offset="1" stop-color="#f00"/></linearGradient><linearGradient id="g146" gradientUnits="userSpaceOnUse" x1="82" x2="477" y1="0" y2="0"><stop offset="0" stop-color="#00c8ff"/><stop offset="0.2785" stop-color="#00bfff"/><stop offset="0.2861" stop-color="#20beff"/><stop offset="0.2937" stop-color="#33beff"/><stop offset="0.3241" stop-color="#65bcff"/><stop offset="0.3671" stop-color="#99baff"/><stop offset="0.4658" stop-color="#ffb5ff"/><stop offset="0.5291" stop-color="#ff8dcc"/><stop offset="0.6076" stop-color="#ff69a1"/><stop offset="0.7696" stop-color="#ff2963"/><stop offset="0.8051" stop-color="#ff1257"/><stop offset="0.8152" stop-color="#ff0053"/><stop offset="0.9418" stop-color="#ff0021"/><stop offset="0.962" stop-color="#ff0012"/><stop offset="0.9722" stop-color="#f00"/><stop offset="1" stop-color="#f00"/></linearGradient><linearGradient id="g147" gradientUnits="userSpaceOnUse" x1="83" x2="479" y1="0" y2="0"><stop offset="0" stop-color="#00c6ff"/><stop offset="0.2753" stop-color="#0bf"/><stop offset="0.2778" stop-color="#13bbff"/><stop offset="0.2854" stop-color="#2bbbff"/><stop offset="0.3207" stop-color="#66b9ff"/><stop offset="0.3763" stop-color="#a7b6ff"/><stop offset="0.4646" stop-color="#ffaffe"/><stop offset="0.5177" stop-color="#ff8ed2"/><stop offset="0.5909" stop-color="#ff6ba8"/><stop offset="0.7652" stop-color="#ff2464"/><stop offset="0.7904" stop-color="#ff125c"/><stop offset="0.8005" stop-color="#ff0058"/><stop offset="0.9318" stop-color="#ff0027"/><stop offset="0.9596" stop-color="#ff0016"/><stop offset="0.9747" stop-color="#f00"/><stop offset="1" stop-color="#f00"/></linearGradient><linearGradient id="g148" gradientUnits="userSpaceOnUse" x1="83" x2="481" y1="0" y2="0"><stop offset="0" stop-color="#00c3ff"/><stop offset="0.2714" stop-color="#00b8ff"/><stop offset="0.2764" stop-color="#19b8ff"/><stop offset="0.2839" stop-color="#2eb8ff"/><stop offset="0.3116" stop-color="#5db6ff"/><stop offset="0.3668" stop-color="#9fb3ff"/><stop offset="0.4623" stop-color="#ffacfe"/><stop offset="0.5176" stop-color="#ff89d1"/><stop offset="0.5879" stop-color="#ff68a9"/><stop offset="0.7437" stop-color="#ff286c"/><stop offset="0.7714" stop-color="#ff1762"/><stop offset="0.7864" stop-color="#ff005d"/><stop offset="0.9296" stop-color="#ff0029"/><stop offset="0.9648" stop-color="#ff0013"/><stop offset="0.9749" stop-color="#f00"/><stop offset="1" stop-color="#f00"/></linearGradient><linearGradient id="g149" gradientUnits="userSpaceOnUse" x1="84" x2="483" y1="0" y2="0"><stop offset="0" stop-color="#00c1ff"/><stop offset="0.2657" stop-color="#00b5ff"/><stop offset="0.2707" stop-color="#16b5ff"/><stop offset="0.2807" stop-color="#31b4ff"/><stop offset="0.3158" stop-color="#68b2ff"/><stop offset="0.3734" stop-color="#aaaeff"/><stop offset="0.4586" stop-color="#ffa8ff"/><stop offset="0.5063" stop-color="#ff8ad7"/><stop offset="0.5639" stop-color="#ff6eb4"/><stop offset="0.7243" stop-color="#ff2b72"/><stop offset="0.7569" stop-color="#ff1767"/><stop offset="0.7719" stop-color="#ff0062"/><stop offset="0.9198" stop-color="#ff002e"/><stop offset="0.9649" stop-color="#ff0014"/><stop offset="0.9774" stop-color="#f00"/><stop offset="1" stop-color="#f00"/></linearGradient><linearGradient id="g150" gradientUnits="userSpaceOnUse" x1="84" x2="486" y1="0" y2="0"><stop offset="0" stop-color="#00bfff"/><stop offset="0.2637" stop-color="#00b2ff"/><stop offset="0.2662" stop-color="#12b2ff"/><stop offset="0.2736" stop-color="#29b1ff"/><stop offset="0.3035" stop-color="#5cafff"/><stop offset="0.3483" stop-color="#92acff"/><stop offset="0.4552" stop-color="#ffa4ff"/><stop offset="0.505" stop-color="#ff85d6"/><stop offset="0.5672" stop-color="#ff67b1"/><stop offset="0.7239" stop-color="#ff2372"/><stop offset="0.7463" stop-color="#ff126a"/><stop offset="0.7562" stop-color="#ff0067"/><stop offset="0.9279" stop-color="#ff002a"/><stop offset="0.9677" stop-color="#f01"/><stop offset="0.9776" stop-color="#f00"/><stop offset="1" stop-color="#f00"/></linearGradient><linearGradient id="g151" gradientUnits="userSpaceOnUse" x1="85" x2="488" y1="0" y2="0"><stop offset="0" stop-color="#00bcff"/><stop offset="0.2581" stop-color="#00afff"/><stop offset="0.263" stop-color="#18aeff"/><stop offset="0.2705" stop-color="#2caeff"/><stop offset="0.3102" stop-color="#6aabff"/><stop offset="0.3747" stop-color="#b2a6ff"/><stop offset="0.4541" stop-color="#ff9efd"/><stop offset="0.4963" stop-color="#ff84da"/><stop offset="0.5533" stop-color="#ff68b7"/><stop offset="0.7047" stop-color="#ff2678"/><stop offset="0.7295" stop-color="#ff1570"/><stop offset="0.7419" stop-color="#ff006b"/><stop offset="0.9132" stop-color="#ff0031"/><stop offset="0.9553" stop-color="#ff001c"/><stop offset="0.9727" stop-color="#ff000d"/><stop offset="0.9777" stop-color="#f00"/><stop offset="1" stop-color="#f00"/></linearGradient><linearGradient id="g152" gradientUnits="userSpaceOnUse" x1="85" x2="490" y1="0" y2="0"><stop offset="0" stop-color="#00baff"/><stop offset="0.2543" stop-color="#00acff"/><stop offset="0.2667" stop-color="#2aabff"/><stop offset="0.2963" stop-color="#5ba8ff"/><stop offset="0.3556" stop-color="#a0a4ff"/><stop offset="0.4519" stop-color="#ff9afe"/><stop offset="0.4963" stop-color="#ff7fd9"/><stop offset="0.558" stop-color="#ff61b4"/><stop offset="0.6864" stop-color="#ff297f"/><stop offset="0.716" stop-color="#ff1574"/><stop offset="0.7284" stop-color="#ff0070"/><stop offset="0.9284" stop-color="#ff002b"/><stop offset="0.9679" stop-color="#ff0014"/><stop offset="0.9802" stop-color="#f00"/><stop offset="1" stop-color="#f00"/></linearGradient><linearGradient id="g153" gradientUnits="userSpaceOnUse" x1="86" x2="492" y1="0" y2="0"><stop offset="0" stop-color="#00b8ff"/><stop offset="0.2512" stop-color="#00a9ff"/><stop offset="0.2537" stop-color="#11a8ff"/><stop offset="0.2635" stop-color="#2da7ff"/><stop offset="0.2931" stop-color="#5ca5ff"/><stop offset="0.3596" stop-color="#a89fff"/><stop offset="0.4483" stop-color="#ff96fe"/><stop offset="0.5443" stop-color="#ff62ba"/><stop offset="0.6749" stop-color="#ff2882"/><stop offset="0.702" stop-color="#ff1579"/><stop offset="0.7143" stop-color="#ff0075"/><stop offset="0.936" stop-color="#ff0028"/><stop offset="0.9704" stop-color="#ff0013"/><stop offset="0.9828" stop-color="#f00"/><stop offset="1" stop-color="#f00"/></linearGradient><linearGradient id="g154" gradientUnits="userSpaceOnUse" x1="86" x2="494" y1="0" y2="0"><stop offset="0" stop-color="#00b5ff"/><stop offset="0.2475" stop-color="#00a6ff"/><stop offset="0.2574" stop-color="#25a5ff"/><stop offset="0.2892" stop-color="#5aa2ff"/><stop offset="0.348" stop-color="#9e9cff"/><stop offset="0.4461" stop-color="#ff92ff"/><stop offset="0.4877" stop-color="#ff79dc"/><stop offset="0.549" stop-color="#ff5cb7"/><stop offset="0.6618" stop-color="#ff2887"/><stop offset="0.6887" stop-color="#ff157d"/><stop offset="0.701" stop-color="#ff0079"/><stop offset="0.9118" stop-color="#f03"/><stop offset="0.9657" stop-color="#ff0018"/><stop offset="0.9804" stop-color="#ff0009"/><stop offset="0.9828" stop-color="#f00"/><stop offset="1" stop-color="#f00"/></linearGradient><linearGradient id="g155" gradientUnits="userSpaceOnUse" x1="87" x2="494" y1="0" y2="0"><stop offset="0" stop-color="#00b3ff"/><stop offset="0.2432" stop-color="#00a3ff"/><stop offset="0.2555" stop-color="#28a1ff"/><stop offset="0.285" stop-color="#589fff"/><stop offset="0.3415" stop-color="#99f"/><stop offset="0.4447" stop-color="#ff8eff"/><stop offset="0.5307" stop-color="#ff60c1"/><stop offset="0.6585" stop-color="#ff2489"/><stop offset="0.6781" stop-color="#ff1582"/><stop offset="0.6904" stop-color="#ff007e"/><stop offset="0.9091" stop-color="#ff0036"/><stop offset="0.9558" stop-color="#f02"/><stop offset="0.9803" stop-color="#f01"/><stop offset="0.9902" stop-color="#f00"/><stop offset="1" stop-color="#f00"/></linearGradient><linearGradient id="g156" gradientUnits="userSpaceOnUse" x1="87" x2="490" y1="0" y2="0"><stop offset="0" stop-color="#00b1ff"/><stop offset="0.2457" stop-color="#009fff"/><stop offset="0.2506" stop-color="#199fff"/><stop offset="0.2581" stop-color="#2b9eff"/><stop offset="0.2854" stop-color="#569bff"/><stop offset="0.3474" stop-color="#9c95ff"/><stop offset="0.4516" stop-color="#ff89fe"/><stop offset="0.5285" stop-color="#ff60c6"/><stop offset="0.6452" stop-color="#ff2a91"/><stop offset="0.6749" stop-color="#ff1586"/><stop offset="0.6873" stop-color="#ff0082"/><stop offset="0.9132" stop-color="#ff003a"/><stop offset="0.9752" stop-color="#ff0020"/><stop offset="1" stop-color="#ff000d"/></linearGradient><linearGradient id="g157" gradientUnits="userSpaceOnUse" x1="88" x2="486" y1="0" y2="0"><stop offset="0" stop-color="#00aeff"/><stop offset="0.2437" stop-color="#009cff"/><stop offset="0.2487" stop-color="#169cff"/><stop offset="0.2563" stop-color="#299bff"/><stop offset="0.2839" stop-color="#5498ff"/><stop offset="0.3392" stop-color="#9293ff"/><stop offset="0.4548" stop-color="#ff85fe"/><stop offset="0.5251" stop-color="#ff60cb"/><stop offset="0.6407" stop-color="#ff2a96"/><stop offset="0.6709" stop-color="#ff158b"/><stop offset="0.6834" stop-color="#ff0087"/><stop offset="0.9246" stop-color="#ff003b"/><stop offset="1" stop-color="#ff001b"/></linearGradient><linearGradient id="g158" gradientUnits="userSpaceOnUse" x1="88" x2="481" y1="0" y2="0"><stop offset="0" stop-color="#00acff"/><stop offset="0.2443" stop-color="#09f"/><stop offset="0.2545" stop-color="#2198ff"/><stop offset="0.285" stop-color="#5295ff"/><stop offset="0.3461" stop-color="#958fff"/><stop offset="0.4606" stop-color="#ff81ff"/><stop offset="0.542" stop-color="#ff57c6"/><stop offset="0.6412" stop-color="#ff299a"/><stop offset="0.6692" stop-color="#ff1590"/><stop offset="0.6819" stop-color="#ff008b"/><stop offset="1" stop-color="#ff0025"/></linearGradient><linearGradient id="g159" gradientUnits="userSpaceOnUse" x1="89" x2="476" y1="0" y2="0"><stop offset="0" stop-color="#00a9ff"/><stop offset="0.2455" stop-color="#0096ff"/><stop offset="0.2481" stop-color="#1096ff"/><stop offset="0.2558" stop-color="#2495ff"/><stop offset="0.2842" stop-color="#5092ff"/><stop offset="0.3333" stop-color="#868dff"/><stop offset="0.4651" stop-color="#ff7dff"/><stop offset="0.5401" stop-color="#ff57cb"/><stop offset="0.6486" stop-color="#ff239b"/><stop offset="0.6667" stop-color="#ff1594"/><stop offset="0.6796" stop-color="#ff0090"/><stop offset="1" stop-color="#ff002d"/></linearGradient><linearGradient id="g160" gradientUnits="userSpaceOnUse" x1="89" x2="472" y1="0" y2="0"><stop offset="0" stop-color="#00a7ff"/><stop offset="0.2454" stop-color="#0093ff"/><stop offset="0.2507" stop-color="#1593ff"/><stop offset="0.2611" stop-color="#2c92ff"/><stop offset="0.3081" stop-color="#698dff"/><stop offset="0.4726" stop-color="#ff77fd"/><stop offset="0.5509" stop-color="#ff51c9"/><stop offset="0.6449" stop-color="#ff23a0"/><stop offset="0.6632" stop-color="#ff1599"/><stop offset="0.6762" stop-color="#ff0094"/><stop offset="1" stop-color="#f03"/></linearGradient><linearGradient id="g161" gradientUnits="userSpaceOnUse" x1="90" x2="467" y1="0" y2="0"><stop offset="0" stop-color="#00a5ff"/><stop offset="0.244" stop-color="#0091ff"/><stop offset="0.252" stop-color="#1a90ff"/><stop offset="0.2653" stop-color="#338eff"/><stop offset="0.3103" stop-color="#6a89ff"/><stop offset="0.4775" stop-color="#ff73fe"/><stop offset="0.5544" stop-color="#ff4ecb"/><stop offset="0.634" stop-color="#ff28a8"/><stop offset="0.6605" stop-color="#ff159e"/><stop offset="0.6737" stop-color="#f09"/><stop offset="1" stop-color="#ff0039"/></linearGradient><linearGradient id="g162" gradientUnits="userSpaceOnUse" x1="90" x2="462" y1="0" y2="0"><stop offset="0" stop-color="#00a2ff"/><stop offset="0.2473" stop-color="#008dff"/><stop offset="0.2527" stop-color="#178dff"/><stop offset="0.2661" stop-color="#318bff"/><stop offset="0.3118" stop-color="#6886ff"/><stop offset="0.4839" stop-color="#ff6ffe"/><stop offset="0.5538" stop-color="#ff4dd0"/><stop offset="0.6371" stop-color="#ff25aa"/><stop offset="0.6586" stop-color="#ff15a2"/><stop offset="0.672" stop-color="#ff009e"/><stop offset="1" stop-color="#ff003f"/></linearGradient><linearGradient id="g163" gradientUnits="userSpaceOnUse" x1="91" x2="457" y1="0" y2="0"><stop offset="0" stop-color="#00a0ff"/><stop offset="0.2459" stop-color="#008bff"/><stop offset="0.2596" stop-color="#2689ff"/><stop offset="0.2978" stop-color="#5885ff"/><stop offset="0.3716" stop-color="#9e7cff"/><stop offset="0.4891" stop-color="#ff6bff"/><stop offset="0.571" stop-color="#ff44cb"/><stop offset="0.6339" stop-color="#ff25b0"/><stop offset="0.6557" stop-color="#ff15a7"/><stop offset="0.6694" stop-color="#ff00a2"/><stop offset="1" stop-color="#f04"/></linearGradient><linearGradient id="g164" gradientUnits="userSpaceOnUse" x1="91" x2="453" y1="0" y2="0"><stop offset="0" stop-color="#009dff"/><stop offset="0.2459" stop-color="#08f"/><stop offset="0.2541" stop-color="#1987ff"/><stop offset="0.2652" stop-color="#2d86ff"/><stop offset="0.3011" stop-color="#5981ff"/><stop offset="0.3729" stop-color="#9c79ff"/><stop offset="0.4945" stop-color="#f6f"/><stop offset="0.547" stop-color="#ff4ddc"/><stop offset="0.6215" stop-color="#ff2ab8"/><stop offset="0.6519" stop-color="#ff15ac"/><stop offset="0.6657" stop-color="#ff00a7"/><stop offset="1" stop-color="#ff0049"/></linearGradient><linearGradient id="g165" gradientUnits="userSpaceOnUse" x1="92" x2="448" y1="0" y2="0"><stop offset="0" stop-color="#009bff"/><stop offset="0.2472" stop-color="#0085ff"/><stop offset="0.25" stop-color="#0f85ff"/><stop offset="0.264" stop-color="#2b83ff"/><stop offset="0.3062" stop-color="#5d7eff"/><stop offset="0.3989" stop-color="#af72ff"/><stop offset="0.5028" stop-color="#ff61fe"/><stop offset="0.5562" stop-color="#ff48db"/><stop offset="0.6236" stop-color="#ff27bb"/><stop offset="0.6489" stop-color="#ff15b1"/><stop offset="0.6629" stop-color="#ff00ac"/><stop offset="0.7949" stop-color="#ff0082"/><stop offset="1" stop-color="#ff004e"/></linearGradient><linearGradient id="g166" gradientUnits="userSpaceOnUse" x1="93" x2="443" y1="0" y2="0"><stop offset="0" stop-color="#0098ff"/><stop offset="0.2457" stop-color="#0082ff"/><stop offset="0.2514" stop-color="#1481ff"/><stop offset="0.2629" stop-color="#2980ff"/><stop offset="0.3086" stop-color="#5e7bff"/><stop offset="0.3829" stop-color="#9f71ff"/><stop offset="0.5086" stop-color="#ff5cfe"/><stop offset="0.5657" stop-color="#ff42da"/><stop offset="0.6286" stop-color="#ff22bd"/><stop offset="0.6486" stop-color="#ff12b5"/><stop offset="0.66" stop-color="#ff00b1"/><stop offset="0.8057" stop-color="#ff0083"/><stop offset="1" stop-color="#ff0053"/></linearGradient><linearGradient id="g167" gradientUnits="userSpaceOnUse" x1="93" x2="439" y1="0" y2="0"><stop offset="0" stop-color="#0096ff"/><stop offset="0.2457" stop-color="#007fff"/><stop offset="0.263" stop-color="#277dff"/><stop offset="0.3121" stop-color="#5f77ff"/><stop offset="0.5145" stop-color="#ff58ff"/><stop offset="0.6243" stop-color="#ff22c3"/><stop offset="0.6445" stop-color="#ff12ba"/><stop offset="0.6561" stop-color="#ff00b6"/><stop offset="0.8035" stop-color="#ff0087"/><stop offset="1" stop-color="#ff0057"/></linearGradient><linearGradient id="g168" gradientUnits="userSpaceOnUse" x1="94" x2="434" y1="0" y2="0"><stop offset="0" stop-color="#0094ff"/><stop offset="0.2471" stop-color="#017cff"/><stop offset="0.2529" stop-color="#157cff"/><stop offset="0.2647" stop-color="#2a7aff"/><stop offset="0.3147" stop-color="#6074ff"/><stop offset="0.5206" stop-color="#ff53ff"/><stop offset="0.6176" stop-color="#ff24ca"/><stop offset="0.6382" stop-color="#ff15c1"/><stop offset="0.6529" stop-color="#f0b"/><stop offset="0.7853" stop-color="#ff0090"/><stop offset="1" stop-color="#ff005b"/></linearGradient><linearGradient id="g169" gradientUnits="userSpaceOnUse" x1="94" x2="429" y1="0" y2="0"><stop offset="0" stop-color="#0091ff"/><stop offset="0.2478" stop-color="#007aff"/><stop offset="0.2537" stop-color="#1379ff"/><stop offset="0.2657" stop-color="#2878ff"/><stop offset="0.3075" stop-color="#5672ff"/><stop offset="0.409" stop-color="#a965ff"/><stop offset="0.5313" stop-color="#ff4dfe"/><stop offset="0.6149" stop-color="#ff24d0"/><stop offset="0.6388" stop-color="#ff12c5"/><stop offset="0.6478" stop-color="#ff00c2"/><stop offset="0.8" stop-color="#ff0090"/><stop offset="1" stop-color="#ff0060"/></linearGradient><linearGradient id="g170" gradientUnits="userSpaceOnUse" x1="95" x2="425" y1="0" y2="0"><stop offset="0" stop-color="#008fff"/><stop offset="0.2455" stop-color="#07f"/><stop offset="0.2576" stop-color="#1d76ff"/><stop offset="0.2727" stop-color="#3274ff"/><stop offset="0.3273" stop-color="#676dff"/><stop offset="0.5364" stop-color="#ff48fe"/><stop offset="0.6242" stop-color="#ff1acf"/><stop offset="0.6394" stop-color="#ff0ac8"/><stop offset="0.6424" stop-color="#ff00c7"/><stop offset="0.7939" stop-color="#ff0095"/><stop offset="1" stop-color="#ff0064"/></linearGradient><linearGradient id="g171" gradientUnits="userSpaceOnUse" x1="96" x2="420" y1="0" y2="0"><stop offset="0" stop-color="#008cff"/><stop offset="0.2438" stop-color="#0075ff"/><stop offset="0.2562" stop-color="#1b73ff"/><stop offset="0.2747" stop-color="#3471ff"/><stop offset="0.321" stop-color="#606bff"/><stop offset="0.5432" stop-color="#ff43fe"/><stop offset="0.6173" stop-color="#ff1cd6"/><stop offset="0.6327" stop-color="#ff0ed0"/><stop offset="0.6389" stop-color="#ff00cd"/><stop offset="0.7901" stop-color="#ff009a"/><stop offset="1" stop-color="#ff0068"/></linearGradient><linearGradient id="g172" gradientUnits="userSpaceOnUse" x1="96" x2="415" y1="0" y2="0"><stop offset="0" stop-color="#008aff"/><stop offset="0.2476" stop-color="#0072ff"/><stop offset="0.2539" stop-color="#1371ff"/><stop offset="0.2665" stop-color="#276fff"/><stop offset="0.3197" stop-color="#5c68ff"/><stop offset="0.4545" stop-color="#bf55ff"/><stop offset="0.5517" stop-color="#ff3eff"/><stop offset="0.6144" stop-color="#ff1cdd"/><stop offset="0.6301" stop-color="#ff0ed6"/><stop offset="0.6364" stop-color="#ff00d3"/><stop offset="0.7806" stop-color="#ff00a1"/><stop offset="1" stop-color="#ff006d"/></linearGradient><linearGradient id="g173" gradientUnits="userSpaceOnUse" x1="97" x2="411" y1="0" y2="0"><stop offset="0" stop-color="#0087ff"/><stop offset="0.2452" stop-color="#006fff"/><stop offset="0.258" stop-color="#1c6dff"/><stop offset="0.2707" stop-color="#2d6cff"/><stop offset="0.3217" stop-color="#5d65ff"/><stop offset="0.4745" stop-color="#ca4eff"/><stop offset="0.5573" stop-color="#ff38ff"/><stop offset="0.6083" stop-color="#ff1ce3"/><stop offset="0.6242" stop-color="#ff0edc"/><stop offset="0.6306" stop-color="#ff00d9"/><stop offset="0.7643" stop-color="#ff00a9"/><stop offset="1" stop-color="#ff0070"/></linearGradient><linearGradient id="g174" gradientUnits="userSpaceOnUse" x1="97" x2="406" y1="0" y2="0"><stop offset="0" stop-color="#0085ff"/><stop offset="0.246" stop-color="#006cff"/><stop offset="0.2589" stop-color="#1a6bff"/><stop offset="0.2751" stop-color="#2f69ff"/><stop offset="0.3269" stop-color="#5e62ff"/><stop offset="0.466" stop-color="#bf4dff"/><stop offset="0.5696" stop-color="#ff31fe"/><stop offset="0.6117" stop-color="#ff17e7"/><stop offset="0.6278" stop-color="#ff00df"/><stop offset="0.7864" stop-color="#ff00a7"/><stop offset="1" stop-color="#ff0075"/></linearGradient><linearGradient id="g175" gradientUnits="userSpaceOnUse" x1="98" x2="401" y1="0" y2="0"><stop offset="0" stop-color="#0082ff"/><stop offset="0.2475" stop-color="#0069ff"/><stop offset="0.2541" stop-color="#1269ff"/><stop offset="0.2673" stop-color="#2667ff"/><stop offset="0.3135" stop-color="#5261ff"/><stop offset="0.495" stop-color="#ce44ff"/><stop offset="0.5776" stop-color="#ff2afe"/><stop offset="0.6073" stop-color="#ff17ee"/><stop offset="0.6238" stop-color="#ff00e6"/><stop offset="0.8086" stop-color="#ff00a5"/><stop offset="1" stop-color="#ff0079"/></linearGradient><linearGradient id="g176" gradientUnits="userSpaceOnUse" x1="99" x2="397" y1="0" y2="0"><stop offset="0" stop-color="#0080ff"/><stop offset="0.245" stop-color="#0067ff"/><stop offset="0.255" stop-color="#1666ff"/><stop offset="0.2718" stop-color="#2c63ff"/><stop offset="0.3154" stop-color="#535eff"/><stop offset="0.4799" stop-color="#c144ff"/><stop offset="0.5839" stop-color="#f2f"/><stop offset="0.6074" stop-color="#ff11f2"/><stop offset="0.6174" stop-color="#ff00ed"/><stop offset="0.7886" stop-color="#ff00ae"/><stop offset="1" stop-color="#ff007d"/></linearGradient><linearGradient id="g177" gradientUnits="userSpaceOnUse" x1="99" x2="392" y1="0" y2="0"><stop offset="0" stop-color="#007dff"/><stop offset="0.2457" stop-color="#0064ff"/><stop offset="0.2765" stop-color="#2e60ff"/><stop offset="0.314" stop-color="#4f5bff"/><stop offset="0.4949" stop-color="#c63eff"/><stop offset="0.5597" stop-color="#ec2bff"/><stop offset="0.5939" stop-color="#ff19ff"/><stop offset="0.6143" stop-color="#ff00f4"/><stop offset="0.7406" stop-color="#ff00c1"/><stop offset="1" stop-color="#ff0081"/></linearGradient><linearGradient id="g178" gradientUnits="userSpaceOnUse" x1="100" x2="387" y1="0" y2="0"><stop offset="0" stop-color="#007bff"/><stop offset="0.2474" stop-color="#0062ff"/><stop offset="0.2544" stop-color="#1261ff"/><stop offset="0.2787" stop-color="#305dff"/><stop offset="0.3519" stop-color="#6953ff"/><stop offset="0.5331" stop-color="#d831ff"/><stop offset="0.5749" stop-color="#ef21ff"/><stop offset="0.6063" stop-color="#ff08fe"/><stop offset="0.6098" stop-color="#ff00fc"/><stop offset="0.7422" stop-color="#ff00c5"/><stop offset="1" stop-color="#ff0085"/></linearGradient><linearGradient id="g179" gradientUnits="userSpaceOnUse" x1="101" x2="383" y1="0" y2="0"><stop offset="0" stop-color="#0078ff"/><stop offset="0.2447" stop-color="#005fff"/><stop offset="0.273" stop-color="#2b5bff"/><stop offset="0.3475" stop-color="#6551ff"/><stop offset="0.5426" stop-color="#da2aff"/><stop offset="0.5851" stop-color="#f116ff"/><stop offset="0.6028" stop-color="#fa00ff"/><stop offset="0.6135" stop-color="#ff00fe"/><stop offset="0.7766" stop-color="#ff00be"/><stop offset="1" stop-color="#ff0089"/></linearGradient><linearGradient id="g180" gradientUnits="userSpaceOnUse" x1="101" x2="378" y1="0" y2="0"><stop offset="0" stop-color="#0076ff"/><stop offset="0.2455" stop-color="#005dff"/><stop offset="0.278" stop-color="#2d58ff"/><stop offset="0.3538" stop-color="#664eff"/><stop offset="0.5379" stop-color="#d229ff"/><stop offset="0.5812" stop-color="#e915ff"/><stop offset="0.5993" stop-color="#f200ff"/><stop offset="0.6245" stop-color="#ff00fe"/><stop offset="0.7762" stop-color="#ff00c3"/><stop offset="1" stop-color="#ff008e"/></linearGradient><linearGradient id="g181" gradientUnits="userSpaceOnUse" x1="102" x2="373" y1="0" y2="0"><stop offset="0" stop-color="#0073ff"/><stop offset="0.2472" stop-color="#005aff"/><stop offset="0.2583" stop-color="#1758ff"/><stop offset="0.2731" stop-color="#2856ff"/><stop offset="0.3395" stop-color="#5b4dff"/><stop offset="0.4871" stop-color="#b234ff"/><stop offset="0.5572" stop-color="#d71eff"/><stop offset="0.5793" stop-color="#e312ff"/><stop offset="0.5941" stop-color="#eb00ff"/><stop offset="0.6347" stop-color="#f0f"/><stop offset="0.7749" stop-color="#ff00c8"/><stop offset="1" stop-color="#ff0092"/></linearGradient><linearGradient id="g182" gradientUnits="userSpaceOnUse" x1="103" x2="369" y1="0" y2="0"><stop offset="0" stop-color="#0070ff"/><stop offset="0.2444" stop-color="#0057ff"/><stop offset="0.2556" stop-color="#1556ff"/><stop offset="0.2744" stop-color="#2a53ff"/><stop offset="0.3421" stop-color="#5c4aff"/><stop offset="0.5226" stop-color="#c227ff"/><stop offset="0.5639" stop-color="#d716ff"/><stop offset="0.5865" stop-color="#e300ff"/><stop offset="0.6429" stop-color="#f0f"/><stop offset="0.812" stop-color="#ff00c1"/><stop offset="1" stop-color="#ff0096"/></linearGradient><linearGradient id="g183" gradientUnits="userSpaceOnUse" x1="104" x2="364" y1="0" y2="0"><stop offset="0" stop-color="#006eff"/><stop offset="0.2423" stop-color="#05f"/><stop offset="0.2769" stop-color="#2c50ff"/><stop offset="0.3577" stop-color="#6445ff"/><stop offset="0.5154" stop-color="#ba26ff"/><stop offset="0.5615" stop-color="#d113ff"/><stop offset="0.5808" stop-color="#db00ff"/><stop offset="0.6577" stop-color="#ff00fe"/><stop offset="0.8077" stop-color="#ff00c7"/><stop offset="1" stop-color="#ff009a"/></linearGradient><linearGradient id="g184" gradientUnits="userSpaceOnUse" x1="104" x2="359" y1="0" y2="0"><stop offset="0" stop-color="#006bff"/><stop offset="0.2471" stop-color="#0052ff"/><stop offset="0.2549" stop-color="#1151ff"/><stop offset="0.2745" stop-color="#274eff"/><stop offset="0.3451" stop-color="#5945ff"/><stop offset="0.5137" stop-color="#b424ff"/><stop offset="0.5608" stop-color="#cc10ff"/><stop offset="0.5765" stop-color="#d300ff"/><stop offset="0.6667" stop-color="#fe00ff"/><stop offset="0.8118" stop-color="#ff00cb"/><stop offset="1" stop-color="#ff009f"/></linearGradient><linearGradient id="g185" gradientUnits="userSpaceOnUse" x1="105" x2="355" y1="0" y2="0"><stop offset="0" stop-color="#0069ff"/><stop offset="0.244" stop-color="#0050ff"/><stop offset="0.268" stop-color="#224cff"/><stop offset="0.336" stop-color="#5343ff"/><stop offset="0.508" stop-color="#af22ff"/><stop offset="0.548" stop-color="#c212ff"/><stop offset="0.568" stop-color="#c0f"/><stop offset="0.68" stop-color="#f0f"/><stop offset="0.812" stop-color="#ff00cf"/><stop offset="1" stop-color="#ff00a3"/></linearGradient><linearGradient id="g186" gradientUnits="userSpaceOnUse" x1="106" x2="350" y1="0" y2="0"><stop offset="0" stop-color="#06f"/><stop offset="0.2418" stop-color="#004dff"/><stop offset="0.2787" stop-color="#2b48ff"/><stop offset="0.3648" stop-color="#623cff"/><stop offset="0.5" stop-color="#a721ff"/><stop offset="0.5451" stop-color="#bc0fff"/><stop offset="0.5615" stop-color="#c400ff"/><stop offset="0.6926" stop-color="#f0f"/><stop offset="0.8197" stop-color="#ff00d2"/><stop offset="1" stop-color="#ff00a7"/></linearGradient><linearGradient id="g187" gradientUnits="userSpaceOnUse" x1="107" x2="345" y1="0" y2="0"><stop offset="0" stop-color="#0063ff"/><stop offset="0.2437" stop-color="#004aff"/><stop offset="0.2521" stop-color="#1149ff"/><stop offset="0.2815" stop-color="#2d45ff"/><stop offset="0.3697" stop-color="#6339ff"/><stop offset="0.4958" stop-color="#a11fff"/><stop offset="0.5336" stop-color="#b311ff"/><stop offset="0.5546" stop-color="#bd00ff"/><stop offset="0.7017" stop-color="#fd00ff"/><stop offset="0.8487" stop-color="#ff00cf"/><stop offset="1" stop-color="#ff00ac"/></linearGradient><linearGradient id="g188" gradientUnits="userSpaceOnUse" x1="107" x2="341" y1="0" y2="0"><stop offset="0" stop-color="#0061ff"/><stop offset="0.2436" stop-color="#0048ff"/><stop offset="0.2735" stop-color="#2544ff"/><stop offset="0.3632" stop-color="#5d37ff"/><stop offset="0.4915" stop-color="#9c1dff"/><stop offset="0.5299" stop-color="#ad0eff"/><stop offset="0.547" stop-color="#b500ff"/><stop offset="0.7179" stop-color="#fe00ff"/><stop offset="0.8547" stop-color="#ff00d2"/><stop offset="1" stop-color="#ff00b0"/></linearGradient><linearGradient id="g189" gradientUnits="userSpaceOnUse" x1="108" x2="336" y1="0" y2="0"><stop offset="0" stop-color="#005eff"/><stop offset="0.2412" stop-color="#0045ff"/><stop offset="0.2763" stop-color="#2741ff"/><stop offset="0.3684" stop-color="#5e34ff"/><stop offset="0.5" stop-color="#9c17ff"/><stop offset="0.5395" stop-color="#ae00ff"/><stop offset="0.7325" stop-color="#fe00ff"/><stop offset="0.8596" stop-color="#ff00d6"/><stop offset="1" stop-color="#ff00b5"/></linearGradient><linearGradient id="g190" gradientUnits="userSpaceOnUse" x1="109" x2="331" y1="0" y2="0"><stop offset="0" stop-color="#005cff"/><stop offset="0.2432" stop-color="#0042ff"/><stop offset="0.2523" stop-color="#1041ff"/><stop offset="0.2793" stop-color="#293eff"/><stop offset="0.3559" stop-color="#5633ff"/><stop offset="0.4685" stop-color="#8b1dff"/><stop offset="0.5315" stop-color="#a600ff"/><stop offset="0.7523" stop-color="#f0f"/><stop offset="0.8694" stop-color="#ff00d9"/><stop offset="1" stop-color="#f0b"/></linearGradient><linearGradient id="g191" gradientUnits="userSpaceOnUse" x1="110" x2="327" y1="0" y2="0"><stop offset="0" stop-color="#0059ff"/><stop offset="0.2396" stop-color="#0040ff"/><stop offset="0.2719" stop-color="#243cff"/><stop offset="0.3226" stop-color="#4435ff"/><stop offset="0.4654" stop-color="#871aff"/><stop offset="0.5207" stop-color="#9f00ff"/><stop offset="0.765" stop-color="#f0f"/><stop offset="1" stop-color="#ff00bf"/></linearGradient><linearGradient id="g192" gradientUnits="userSpaceOnUse" x1="111" x2="322" y1="0" y2="0"><stop offset="0" stop-color="#0056ff"/><stop offset="0.237" stop-color="#003eff"/><stop offset="0.2701" stop-color="#2339ff"/><stop offset="0.3081" stop-color="#3b34ff"/><stop offset="0.4455" stop-color="#7c1cff"/><stop offset="0.5118" stop-color="#9800ff"/><stop offset="0.7773" stop-color="#fd00ff"/><stop offset="1" stop-color="#ff00c4"/></linearGradient><linearGradient id="g193" gradientUnits="userSpaceOnUse" x1="111" x2="317" y1="0" y2="0"><stop offset="0" stop-color="#0054ff"/><stop offset="0.2427" stop-color="#003bff"/><stop offset="0.2621" stop-color="#1a38ff"/><stop offset="0.3058" stop-color="#3732ff"/><stop offset="0.4466" stop-color="#7819ff"/><stop offset="0.5049" stop-color="#9000ff"/><stop offset="0.7913" stop-color="#fb00ff"/><stop offset="1" stop-color="#ff00ca"/></linearGradient><linearGradient id="g194" gradientUnits="userSpaceOnUse" x1="112" x2="313" y1="0" y2="0"><stop offset="0" stop-color="#0051ff"/><stop offset="0.2388" stop-color="#0038ff"/><stop offset="0.2587" stop-color="#1836ff"/><stop offset="0.2985" stop-color="#3330ff"/><stop offset="0.4179" stop-color="#6b1cff"/><stop offset="0.4925" stop-color="#8900ff"/><stop offset="0.8159" stop-color="#fe00ff"/><stop offset="1" stop-color="#ff00cf"/></linearGradient><linearGradient id="g195" gradientUnits="userSpaceOnUse" x1="113" x2="308" y1="0" y2="0"><stop offset="0" stop-color="#004eff"/><stop offset="0.2359" stop-color="#0036ff"/><stop offset="0.2615" stop-color="#1b32ff"/><stop offset="0.3128" stop-color="#3a2bff"/><stop offset="0.4205" stop-color="#6918ff"/><stop offset="0.4821" stop-color="#8200ff"/><stop offset="0.7333" stop-color="#dc00ff"/><stop offset="0.841" stop-color="#f0f"/><stop offset="1" stop-color="#ff00d5"/></linearGradient><linearGradient id="g196" gradientUnits="userSpaceOnUse" x1="114" x2="303" y1="0" y2="0"><stop offset="0" stop-color="#004bff"/><stop offset="0.2381" stop-color="#03f"/><stop offset="0.2698" stop-color="#212eff"/><stop offset="0.3333" stop-color="#4325ff"/><stop offset="0.418" stop-color="#6615ff"/><stop offset="0.4709" stop-color="#7a00ff"/><stop offset="0.6667" stop-color="#c000ff"/><stop offset="0.8624" stop-color="#f0f"/><stop offset="1" stop-color="#ff00db"/></linearGradient><linearGradient id="g197" gradientUnits="userSpaceOnUse" x1="115" x2="299" y1="0" y2="0"><stop offset="0" stop-color="#0048ff"/><stop offset="0.2337" stop-color="#0030ff"/><stop offset="0.2717" stop-color="#232bff"/><stop offset="0.3478" stop-color="#491fff"/><stop offset="0.4293" stop-color="#690dff"/><stop offset="0.4565" stop-color="#7300ff"/><stop offset="0.6033" stop-color="#a700ff"/><stop offset="0.875" stop-color="#fd00ff"/><stop offset="1" stop-color="#ff00e1"/></linearGradient><linearGradient id="g198" gradientUnits="userSpaceOnUse" x1="116" x2="294" y1="0" y2="0"><stop offset="0" stop-color="#0045ff"/><stop offset="0.2303" stop-color="#002dff"/><stop offset="0.264" stop-color="#1e29ff"/><stop offset="0.3146" stop-color="#3922ff"/><stop offset="0.3933" stop-color="#5913ff"/><stop offset="0.4438" stop-color="#6c00ff"/><stop offset="0.5618" stop-color="#9500ff"/><stop offset="0.9045" stop-color="#fe00ff"/><stop offset="1" stop-color="#ff00e7"/></linearGradient><linearGradient id="g199" gradientUnits="userSpaceOnUse" x1="116" x2="289" y1="0" y2="0"><stop offset="0" stop-color="#0042ff"/><stop offset="0.237" stop-color="#002aff"/><stop offset="0.2543" stop-color="#1528ff"/><stop offset="0.3006" stop-color="#3021ff"/><stop offset="0.3757" stop-color="#4f14ff"/><stop offset="0.4277" stop-color="#6300ff"/><stop offset="0.4913" stop-color="#7900ff"/><stop offset="0.9133" stop-color="#f900ff"/><stop offset="1" stop-color="#ff00ef"/></linearGradient><linearGradient id="g200" gradientUnits="userSpaceOnUse" x1="117" x2="285" y1="0" y2="0"><stop offset="0" stop-color="#003fff"/><stop offset="0.2321" stop-color="#0027ff"/><stop offset="0.2679" stop-color="#1f23ff"/><stop offset="0.3274" stop-color="#3c19ff"/><stop offset="0.4107" stop-color="#5b00ff"/><stop offset="0.5417" stop-color="#8700ff"/><stop offset="0.9464" stop-color="#fc00ff"/><stop offset="1" stop-color="#ff00f5"/></linearGradient><linearGradient id="g201" gradientUnits="userSpaceOnUse" x1="118" x2="280" y1="0" y2="0"><stop offset="0" stop-color="#003cff"/><stop offset="0.2284" stop-color="#0025ff"/><stop offset="0.2654" stop-color="#1e20ff"/><stop offset="0.3704" stop-color="#4b0cff"/><stop offset="0.3951" stop-color="#5400ff"/><stop offset="0.6975" stop-color="#b100ff"/><stop offset="1" stop-color="#ff00fc"/></linearGradient><linearGradient id="g202" gradientUnits="userSpaceOnUse" x1="119" x2="275" y1="0" y2="0"><stop offset="0" stop-color="#0039ff"/><stop offset="0.2308" stop-color="#0021ff"/><stop offset="0.2436" stop-color="#101fff"/><stop offset="0.2692" stop-color="#201cff"/><stop offset="0.3974" stop-color="#5300ff"/><stop offset="0.6731" stop-color="#a500ff"/><stop offset="1" stop-color="#f900ff"/></linearGradient><linearGradient id="g203" gradientUnits="userSpaceOnUse" x1="120" x2="271" y1="0" y2="0"><stop offset="0" stop-color="#0036ff"/><stop offset="0.2252" stop-color="#001eff"/><stop offset="0.2715" stop-color="#2217ff"/><stop offset="0.3576" stop-color="#40f"/><stop offset="0.404" stop-color="#5400ff"/><stop offset="0.6689" stop-color="#a000ff"/><stop offset="1" stop-color="#f300ff"/></linearGradient><linearGradient id="g204" gradientUnits="userSpaceOnUse" x1="121" x2="266" y1="0" y2="0"><stop offset="0" stop-color="#0032ff"/><stop offset="0.2207" stop-color="#001bff"/><stop offset="0.269" stop-color="#2113ff"/><stop offset="0.3379" stop-color="#3c00ff"/><stop offset="0.4138" stop-color="#50f"/><stop offset="1" stop-color="#eb00ff"/></linearGradient><linearGradient id="g205" gradientUnits="userSpaceOnUse" x1="122" x2="261" y1="0" y2="0"><stop offset="0" stop-color="#002fff"/><stop offset="0.223" stop-color="#0017ff"/><stop offset="0.2374" stop-color="#1014ff"/><stop offset="0.2734" stop-color="#230eff"/><stop offset="0.3165" stop-color="#3400ff"/><stop offset="0.4173" stop-color="#5400ff"/><stop offset="1" stop-color="#e300ff"/></linearGradient><linearGradient id="g206" gradientUnits="userSpaceOnUse" x1="123" x2="256" y1="0" y2="0"><stop offset="0" stop-color="#002bff"/><stop offset="0.218" stop-color="#0013ff"/><stop offset="0.2406" stop-color="#130fff"/><stop offset="0.2782" stop-color="#2507ff"/><stop offset="0.2932" stop-color="#2a00ff"/><stop offset="0.4286" stop-color="#50f"/><stop offset="1" stop-color="#da00ff"/></linearGradient><linearGradient id="g207" gradientUnits="userSpaceOnUse" x1="124" x2="252" y1="0" y2="0"><stop offset="0" stop-color="#0028ff"/><stop offset="0.2109" stop-color="#000fff"/><stop offset="0.2656" stop-color="#2000ff"/><stop offset="0.3047" stop-color="#2f00ff"/><stop offset="0.4453" stop-color="#5800ff"/><stop offset="1" stop-color="#d400ff"/></linearGradient><linearGradient id="g208" gradientUnits="userSpaceOnUse" x1="125" x2="247" y1="0" y2="0"><stop offset="0" stop-color="#0024ff"/><stop offset="0.2131" stop-color="#0008ff"/><stop offset="0.2541" stop-color="#1c00ff"/><stop offset="0.3852" stop-color="#4600ff"/><stop offset="1" stop-color="#c0f"/></linearGradient><linearGradient id="g209" gradientUnits="userSpaceOnUse" x1="126" x2="242" y1="0" y2="0"><stop offset="0" stop-color="#0020ff"/><stop offset="0.1466" stop-color="#000fff"/><stop offset="0.2069" stop-color="#00f"/><stop offset="0.2586" stop-color="#1e00ff"/><stop offset="0.3879" stop-color="#4500ff"/><stop offset="1" stop-color="#c400ff"/></linearGradient><linearGradient id="g210" gradientUnits="userSpaceOnUse" x1="127" x2="238" y1="0" y2="0"><stop offset="0" stop-color="#001bff"/><stop offset="0.1982" stop-color="#00f"/><stop offset="0.2523" stop-color="#1d00ff"/><stop offset="0.3874" stop-color="#40f"/><stop offset="1" stop-color="#be00ff"/></linearGradient><linearGradient id="g211" gradientUnits="userSpaceOnUse" x1="129" x2="233" y1="0" y2="0"><stop offset="0" stop-color="#0015ff"/><stop offset="0.125" stop-color="#00f"/><stop offset="0.1923" stop-color="#00f"/><stop offset="0.25" stop-color="#1f00ff"/><stop offset="0.3846" stop-color="#4300ff"/><stop offset="1" stop-color="#b600ff"/></linearGradient><linearGradient id="g212" gradientUnits="userSpaceOnUse" x1="130" x2="228" y1="0" y2="0"><stop offset="0" stop-color="#000fff"/><stop offset="0.08163" stop-color="#00f"/><stop offset="0.1837" stop-color="#00f"/><stop offset="0.2449" stop-color="#1e00ff"/><stop offset="0.3878" stop-color="#4200ff"/><stop offset="1" stop-color="#ae00ff"/></linearGradient><linearGradient id="g213" gradientUnits="userSpaceOnUse" x1="131" x2="224" y1="0" y2="0"><stop offset="0" stop-color="#0008ff"/><stop offset="0.03226" stop-color="#00f"/><stop offset="0.172" stop-color="#00f"/><stop offset="0.2473" stop-color="#2000ff"/><stop offset="0.3871" stop-color="#4100ff"/><stop offset="1" stop-color="#a800ff"/></linearGradient><linearGradient id="g214" gradientUnits="userSpaceOnUse" x1="132" x2="219" y1="0" y2="0"><stop offset="0" stop-color="#00f"/><stop offset="0.1724" stop-color="#0100ff"/><stop offset="0.2184" stop-color="#1800ff"/><stop offset="0.3908" stop-color="#4000ff"/><stop offset="1" stop-color="#a000ff"/></linearGradient><linearGradient id="g215" gradientUnits="userSpaceOnUse" x1="134" x2="214" y1="0" y2="0"><stop offset="0" stop-color="#00f"/><stop offset="0.15" stop-color="#00f"/><stop offset="0.2125" stop-color="#1a00ff"/><stop offset="0.3875" stop-color="#3f00ff"/><stop offset="1" stop-color="#9800ff"/></linearGradient><linearGradient id="g216" gradientUnits="userSpaceOnUse" x1="135" x2="210" y1="0" y2="0"><stop offset="0" stop-color="#00f"/><stop offset="0.1333" stop-color="#00f"/><stop offset="0.2" stop-color="#1900ff"/><stop offset="0.3867" stop-color="#3e00ff"/><stop offset="1" stop-color="#9200ff"/></linearGradient><linearGradient id="g217" gradientUnits="userSpaceOnUse" x1="137" x2="205" y1="0" y2="0"><stop offset="0" stop-color="#00f"/><stop offset="0.1176" stop-color="#0100ff"/><stop offset="0.1618" stop-color="#1400ff"/><stop offset="0.3235" stop-color="#3400ff"/><stop offset="1" stop-color="#8a00ff"/></linearGradient><linearGradient id="g218" gradientUnits="userSpaceOnUse" x1="139" x2="200" y1="0" y2="0"><stop offset="0" stop-color="#00f"/><stop offset="0.08197" stop-color="#00f"/><stop offset="0.1639" stop-color="#1a00ff"/><stop offset="0.377" stop-color="#3c00ff"/><stop offset="1" stop-color="#8200ff"/></linearGradient><linearGradient id="g219" gradientUnits="userSpaceOnUse" x1="141" x2="196" y1="0" y2="0"><stop offset="0" stop-color="#00f"/><stop offset="0.03636" stop-color="#00f"/><stop offset="0.1091" stop-color="#1500ff"/><stop offset="0.2909" stop-color="#3200ff"/><stop offset="1" stop-color="#7c00ff"/></linearGradient><linearGradient id="g220" gradientUnits="userSpaceOnUse" x1="143" x2="191" y1="0" y2="0"><stop offset="0" stop-color="#0200ff"/><stop offset="0.1042" stop-color="#1b00ff"/><stop offset="0.2708" stop-color="#3100ff"/><stop offset="1" stop-color="#7400ff"/></linearGradient><linearGradient id="g221" gradientUnits="userSpaceOnUse" x1="145" x2="186" y1="0" y2="0"><stop offset="0" stop-color="#1200ff"/><stop offset="0.3171" stop-color="#3700ff"/><stop offset="1" stop-color="#6c00ff"/></linearGradient><linearGradient id="g222" gradientUnits="userSpaceOnUse" x1="147" x2="182" y1="0" y2="0"><stop offset="0" stop-color="#1b00ff"/><stop offset="0.2857" stop-color="#3600ff"/><stop offset="1" stop-color="#60f"/></linearGradient><linearGradient id="g223" gradientUnits="userSpaceOnUse" x1="150" x2="177" y1="0" y2="0"><stop offset="0" stop-color="#2600ff"/><stop offset="1" stop-color="#5e00ff"/></linearGradient><linearGradient id="g224" gradientUnits="userSpaceOnUse" x1="152" x2="172" y1="0" y2="0"><stop offset="0" stop-color="#2d00ff"/><stop offset="1" stop-color="#5600ff"/></linearGradient><linearGradient id="g225" gradientUnits="userSpaceOnUse" x1="155" x2="168" y1="0" y2="0"><stop offset="0" stop-color="#3500ff"/><stop offset="1" stop-color="#4f00ff"/></linearGradient></defs>
<rect x="57.5" y="74.5" width="443" height="460" fill="none" stroke="#fff" stroke-width="1" shape-rendering="crispEdges"/><rect x="58" y="75" width="442" height="459" fill="#666"/>
<g clip-path="url(#lc)" shape-rendering="crispEdges"><rect x="95" y="79" width="23" height="2" fill="url(#g0)"/><rect x="90" y="81" width="35" height="2" fill="url(#g1)"/><rect x="87" y="83" width="44" height="2" fill="url(#g2)"/><rect x="84" y="85" width="52" height="2" fill="url(#g3)"/><rect x="82" y="87" width="58" height="2" fill="url(#g4)"/><rect x="80" y="89" width="64" height="2" fill="url(#g5)"/><rect x="78" y="91" width="70" height="2" fill="url(#g6)"/><rect x="77" y="93" width="75" height="2" fill="url(#g7)"/><rect x="75" y="95" width="81" height="2" fill="url(#g8)"/><rect x="74" y="97" width="85" height="2" fill="url(#g9)"/><rect x="73" y="99" width="90" height="2" fill="url(#g10)"/><rect x="72" y="101" width="94" height="2" fill="url(#g11)"/><rect x="71" y="103" width="99" height="2" fill="url(#g12)"/><rect x="70" y="105" width="103" height="2" fill="url(#g13)"/><rect x="70" y="107" width="106" height="2" fill="url(#g14)"/><rect x="69" y="109" width="110" height="2" fill="url(#g15)"/><rect x="68" y="111" width="114" height="2" fill="url(#g16)"/><rect x="67" y="113" width="118" height="2" fill="url(#g17)"/><rect x="67" y="115" width="121" height="2" fill="url(#g18)"/><rect x="66" y="117" width="125" height="2" fill="url(#g19)"/><rect x="65" y="119" width="128" height="2" fill="url(#g20)"/><rect x="65" y="121" width="131" height="2" fill="url(#g21)"/><rect x="64" y="123" width="135" height="2" fill="url(#g22)"/><rect x="64" y="125" width="138" height="2" fill="url(#g23)"/><rect x="63" y="127" width="141" height="2" fill="url(#g24)"/><rect x="63" y="129" width="144" height="2" fill="url(#g25)"/><rect x="63" y="131" width="147" height="2" fill="url(#g26)"/><rect x="62" y="133" width="150" height="2" fill="url(#g27)"/><rect x="62" y="135" width="153" height="2" fill="url(#g28)"/><rect x="62" y="137" width="155" height="2" fill="url(#g29)"/><rect x="61" y="139" width="159" height="2" fill="url(#g30)"/><rect x="61" y="141" width="161" height="2" fill="url(#g31)"/><rect x="61" y="143" width="164" height="2" fill="url(#g32)"/><rect x="61" y="145" width="166" height="2" fill="url(#g33)"/><rect x="60" y="147" width="170" height="2" fill="url(#g34)"/><rect x="60" y="149" width="172" height="2" fill="url(#g35)"/><rect x="60" y="151" width="174" height="2" fill="url(#g36)"/><rect x="60" y="153" width="177" height="2" fill="url(#g37)"/><rect x="60" y="155" width="179" height="2" fill="url(#g38)"/><rect x="59" y="157" width="182" height="2" fill="url(#g39)"/><rect x="59" y="159" width="185" height="2" fill="url(#g40)"/><rect x="59" y="161" width="187" height="2" fill="url(#g41)"/><rect x="59" y="163" width="189" height="2" fill="url(#g42)"/><rect x="59" y="165" width="192" height="2" fill="url(#g43)"/><rect x="59" y="167" width="194" height="2" fill="url(#g44)"/><rect x="59" y="169" width="196" height="2" fill="url(#g45)"/><rect x="59" y="171" width="199" height="2" fill="url(#g46)"/><rect x="58" y="173" width="202" height="2" fill="url(#g47)"/><rect x="58" y="175" width="204" height="2" fill="url(#g48)"/><rect x="58" y="177" width="206" height="2" fill="url(#g49)"/><rect x="58" y="179" width="209" height="2" fill="url(#g50)"/><rect x="58" y="181" width="211" height="2" fill="url(#g51)"/><rect x="58" y="183" width="213" height="2" fill="url(#g52)"/><rect x="58" y="185" width="216" height="2" fill="url(#g53)"/><rect x="58" y="187" width="218" height="2" fill="url(#g54)"/><rect x="58" y="189" width="220" height="2" fill="url(#g55)"/><rect x="58" y="191" width="222" height="2" fill="url(#g56)"/><rect x="58" y="193" width="224" height="2" fill="url(#g57)"/><rect x="58" y="195" width="227" height="2" fill="url(#g58)"/><rect x="58" y="197" width="229" height="2" fill="url(#g59)"/><rect x="58" y="199" width="231" height="2" fill="url(#g60)"/><rect x="58" y="201" width="233" height="2" fill="url(#g61)"/><rect x="58" y="203" width="236" height="2" fill="url(#g62)"/><rect x="59" y="205" width="237" height="2" fill="url(#g63)"/><rect x="59" y="207" width="239" height="2" fill="url(#g64)"/><rect x="59" y="209" width="241" height="2" fill="url(#g65)"/><rect x="59" y="211" width="243" height="2" fill="url(#g66)"/><rect x="59" y="213" width="246" height="2" fill="url(#g67)"/><rect x="59" y="215" width="248" height="2" fill="url(#g68)"/><rect x="59" y="217" width="250" height="2" fill="url(#g69)"/><rect x="59" y="219" width="252" height="2" fill="url(#g70)"/><rect x="59" y="221" width="254" height="2" fill="url(#g71)"/><rect x="59" y="223" width="257" height="2" fill="url(#g72)"/><rect x="60" y="225" width="258" height="2" fill="url(#g73)"/><rect x="60" y="227" width="260" height="2" fill="url(#g74)"/><rect x="60" y="229" width="262" height="2" fill="url(#g75)"/><rect x="60" y="231" width="264" height="2" fill="url(#g76)"/><rect x="60" y="233" width="267" height="2" fill="url(#g77)"/><rect x="60" y="235" width="269" height="2" fill="url(#g78)"/><rect x="61" y="237" width="270" height="2" fill="url(#g79)"/><rect x="61" y="239" width="272" height="2" fill="url(#g80)"/><rect x="61" y="241" width="274" height="2" fill="url(#g81)"/><rect x="61" y="243" width="276" height="2" fill="url(#g82)"/><rect x="61" y="245" width="279" height="2" fill="url(#g83)"/><rect x="61" y="247" width="281" height="2" fill="url(#g84)"/><rect x="62" y="249" width="282" height="2" fill="url(#g85)"/><rect x="62" y="251" width="284" height="2" fill="url(#g86)"/><rect x="62" y="253" width="286" height="2" fill="url(#g87)"/><rect x="62" y="255" width="289" height="2" fill="url(#g88)"/><rect x="63" y="257" width="290" height="2" fill="url(#g89)"/><rect x="63" y="259" width="292" height="2" fill="url(#g90)"/><rect x="63" y="261" width="294" height="2" fill="url(#g91)"/><rect x="63" y="263" width="296" height="2" fill="url(#g92)"/><rect x="63" y="265" width="298" height="2" fill="url(#g93)"/><rect x="64" y="267" width="300" height="2" fill="url(#g94)"/><rect x="64" y="269" width="302" height="2" fill="url(#g95)"/><rect x="64" y="271" width="304" height="2" fill="url(#g96)"/><rect x="64" y="273" width="306" height="2" fill="url(#g97)"/><rect x="65" y="275" width="307" height="2" fill="url(#g98)"/><rect x="65" y="277" width="309" height="2" fill="url(#g99)"/><rect x="65" y="279" width="312" height="2" fill="url(#g100)"/><rect x="66" y="281" width="313" height="2" fill="url(#g101)"/><rect x="66" y="283" width="315" height="2" fill="url(#g102)"/><rect x="66" y="285" width="317" height="2" fill="url(#g103)"/><rect x="66" y="287" width="319" height="2" fill="url(#g104)"/><rect x="67" y="289" width="321" height="2" fill="url(#g105)"/><rect x="67" y="291" width="323" height="2" fill="url(#g106)"/><rect x="67" y="293" width="325" height="2" fill="url(#g107)"/><rect x="68" y="295" width="326" height="2" fill="url(#g108)"/><rect x="68" y="297" width="328" height="2" fill="url(#g109)"/><rect x="68" y="299" width="330" height="2" fill="url(#g110)"/><rect x="69" y="301" width="332" height="2" fill="url(#g111)"/><rect x="69" y="303" width="334" height="2" fill="url(#g112)"/><rect x="69" y="305" width="336" height="2" fill="url(#g113)"/><rect x="70" y="307" width="337" height="2" fill="url(#g114)"/><rect x="70" y="309" width="339" height="2" fill="url(#g115)"/><rect x="70" y="311" width="342" height="2" fill="url(#g116)"/><rect x="71" y="313" width="343" height="2" fill="url(#g117)"/><rect x="71" y="315" width="345" height="2" fill="url(#g118)"/><rect x="71" y="317" width="347" height="2" fill="url(#g119)"/><rect x="72" y="319" width="348" height="2" fill="url(#g120)"/><rect x="72" y="321" width="350" height="2" fill="url(#g121)"/><rect x="72" y="323" width="353" height="2" fill="url(#g122)"/><rect x="73" y="325" width="354" height="2" fill="url(#g123)"/><rect x="73" y="327" width="356" height="2" fill="url(#g124)"/><rect x="73" y="329" width="358" height="2" fill="url(#g125)"/><rect x="74" y="331" width="359" height="2" fill="url(#g126)"/><rect x="74" y="333" width="361" height="2" fill="url(#g127)"/><rect x="75" y="335" width="363" height="2" fill="url(#g128)"/><rect x="75" y="337" width="365" height="2" fill="url(#g129)"/><rect x="75" y="339" width="367" height="2" fill="url(#g130)"/><rect x="76" y="341" width="368" height="2" fill="url(#g131)"/><rect x="76" y="343" width="370" height="2" fill="url(#g132)"/><rect x="77" y="345" width="372" height="2" fill="url(#g133)"/><rect x="77" y="347" width="374" height="2" fill="url(#g134)"/><rect x="77" y="349" width="376" height="2" fill="url(#g135)"/><rect x="78" y="351" width="377" height="2" fill="url(#g136)"/><rect x="78" y="353" width="379" height="2" fill="url(#g137)"/><rect x="79" y="355" width="380" height="2" fill="url(#g138)"/><rect x="79" y="357" width="383" height="2" fill="url(#g139)"/><rect x="80" y="359" width="384" height="2" fill="url(#g140)"/><rect x="80" y="361" width="386" height="2" fill="url(#g141)"/><rect x="81" y="363" width="387" height="2" fill="url(#g142)"/><rect x="81" y="365" width="389" height="2" fill="url(#g143)"/><rect x="81" y="367" width="391" height="2" fill="url(#g144)"/><rect x="82" y="369" width="393" height="2" fill="url(#g145)"/><rect x="82" y="371" width="395" height="2" fill="url(#g146)"/><rect x="83" y="373" width="396" height="2" fill="url(#g147)"/><rect x="83" y="375" width="398" height="2" fill="url(#g148)"/><rect x="84" y="377" width="399" height="2" fill="url(#g149)"/><rect x="84" y="379" width="402" height="2" fill="url(#g150)"/><rect x="85" y="381" width="403" height="2" fill="url(#g151)"/><rect x="85" y="383" width="405" height="2" fill="url(#g152)"/><rect x="86" y="385" width="406" height="2" fill="url(#g153)"/><rect x="86" y="387" width="408" height="2" fill="url(#g154)"/><rect x="87" y="389" width="407" height="2" fill="url(#g155)"/><rect x="87" y="391" width="403" height="2" fill="url(#g156)"/><rect x="88" y="393" width="398" height="2" fill="url(#g157)"/><rect x="88" y="395" width="393" height="2" fill="url(#g158)"/><rect x="89" y="397" width="387" height="2" fill="url(#g159)"/><rect x="89" y="399" width="383" height="2" fill="url(#g160)"/><rect x="90" y="401" width="377" height="2" fill="url(#g161)"/><rect x="90" y="403" width="372" height="2" fill="url(#g162)"/><rect x="91" y="405" width="366" height="2" fill="url(#g163)"/><rect x="91" y="407" width="362" height="2" fill="url(#g164)"/><rect x="92" y="409" width="356" height="2" fill="url(#g165)"/><rect x="93" y="411" width="350" height="2" fill="url(#g166)"/><rect x="93" y="413" width="346" height="2" fill="url(#g167)"/><rect x="94" y="415" width="340" height="2" fill="url(#g168)"/><rect x="94" y="417" width="335" height="2" fill="url(#g169)"/><rect x="95" y="419" width="330" height="2" fill="url(#g170)"/><rect x="96" y="421" width="324" height="2" fill="url(#g171)"/><rect x="96" y="423" width="319" height="2" fill="url(#g172)"/><rect x="97" y="425" width="314" height="2" fill="url(#g173)"/><rect x="97" y="427" width="309" height="2" fill="url(#g174)"/><rect x="98" y="429" width="303" height="2" fill="url(#g175)"/><rect x="99" y="431" width="298" height="2" fill="url(#g176)"/><rect x="99" y="433" width="293" height="2" fill="url(#g177)"/><rect x="100" y="435" width="287" height="2" fill="url(#g178)"/><rect x="101" y="437" width="282" height="2" fill="url(#g179)"/><rect x="101" y="439" width="277" height="2" fill="url(#g180)"/><rect x="102" y="441" width="271" height="2" fill="url(#g181)"/><rect x="103" y="443" width="266" height="2" fill="url(#g182)"/><rect x="104" y="445" width="260" height="2" fill="url(#g183)"/><rect x="104" y="447" width="255" height="2" fill="url(#g184)"/><rect x="105" y="449" width="250" height="2" fill="url(#g185)"/><rect x="106" y="451" width="244" height="2" fill="url(#g186)"/><rect x="107" y="453" width="238" height="2" fill="url(#g187)"/><rect x="107" y="455" width="234" height="2" fill="url(#g188)"/><rect x="108" y="457" width="228" height="2" fill="url(#g189)"/><rect x="109" y="459" width="222" height="2" fill="url(#g190)"/><rect x="110" y="461" width="217" height="2" fill="url(#g191)"/><rect x="111" y="463" width="211" height="2" fill="url(#g192)"/><rect x="111" y="465" width="206" height="2" fill="url(#g193)"/><rect x="112" y="467" width="201" height="2" fill="url(#g194)"/><rect x="113" y="469" width="195" height="2" fill="url(#g195)"/><rect x="114" y="471" width="189" height="2" fill="url(#g196)"/><rect x="115" y="473" width="184" height="2" fill="url(#g197)"/><rect x="116" y="475" width="178" height="2" fill="url(#g198)"/><rect x="116" y="477" width="173" height="2" fill="url(#g199)"/><rect x="117" y="479" width="168" height="2" fill="url(#g200)"/><rect x="118" y="481" width="162" height="2" fill="url(#g201)"/><rect x="119" y="483" width="156" height="2" fill="url(#g202)"/><rect x="120" y="485" width="151" height="2" fill="url(#g203)"/><rect x="121" y="487" width="145" height="2" fill="url(#g204)"/><rect x="122" y="489" width="139" height="2" fill="url(#g205)"/><rect x="123" y="491" width="133" height="2" fill="url(#g206)"/><rect x="124" y="493" width="128" height="2" fill="url(#g207)"/><rect x="125" y="495" width="122" height="2" fill="url(#g208)"/><rect x="126" y="497" width="116" height="2" fill="url(#g209)"/><rect x="127" y="499" width="111" height="2" fill="url(#g210)"/><rect x="129" y="501" width="104" height="2" fill="url(#g211)"/><rect x="130" y="503" width="98" height="2" fill="url(#g212)"/><rect x="131" y="505" width="93" height="2" fill="url(#g213)"/><rect x="132" y="507" width="87" height="2" fill="url(#g214)"/><rect x="134" y="509" width="80" height="2" fill="url(#g215)"/><rect x="135" y="511" width="75" height="2" fill="url(#g216)"/><rect x="137" y="513" width="68" height="2" fill="url(#g217)"/><rect x="139" y="515" width="61" height="2" fill="url(#g218)"/><rect x="141" y="517" width="55" height="2" fill="url(#g219)"/><rect x="143" y="519" width="48" height="2" fill="url(#g220)"/><rect x="145" y="521" width="41" height="2" fill="url(#g221)"/><rect x="147" y="523" width="35" height="2" fill="url(#g222)"/><rect x="150" y="525" width="27" height="2" fill="url(#g223)"/><rect x="152" y="527" width="20" height="2" fill="url(#g224)"/><rect x="155" y="529" width="13" height="2" fill="url(#g225)"/></g>
<polygon points="160.7,530.9 160.6,530.9 160.3,530.9 160.0,530.8 159.6,530.7 159.3,530.6 159.0,530.4 158.6,530.1 158.2,529.7 157.6,529.3 157.0,528.8 156.3,528.2 155.5,527.6 154.5,526.7 153.2,525.8 152.0,524.8 150.9,523.9 150.0,523.1 149.2,522.5 148.4,521.9 147.6,521.2 146.6,520.3 145.6,519.4 144.6,518.4 143.5,517.3 142.3,516.2 141.1,514.9 139.8,513.5 138.4,511.8 136.9,509.8 135.3,507.6 133.6,505.0 131.7,502.1 129.8,498.8 127.7,495.1 125.5,491.0 123.2,486.3 120.7,481.0 118.1,475.1 115.3,468.6 112.4,461.3 109.2,453.2 105.9,444.5 102.5,434.9 99.0,424.3 95.6,412.8 92.1,400.4 88.7,387.1 85.3,373.0 81.9,358.0 78.5,342.1 75.3,325.6 72.4,309.0 69.7,292.1 67.2,274.8 65.0,257.5 63.3,240.6 62.0,224.2 61.1,207.9 60.7,192.2 60.8,177.3 61.5,163.1 62.7,149.5 64.4,136.8 66.7,125.4 69.6,115.2 73.1,106.1 77.1,98.2 81.5,91.8 86.2,86.9 91.3,83.5 96.8,81.2 102.3,79.9 108.0,79.7 113.9,80.5 119.9,82.2 125.9,84.0 131.9,86.3 137.9,89.0 143.9,92.0 149.8,95.1 155.5,98.2 161.2,101.5 166.8,104.8 172.3,108.3 177.8,111.9 183.2,115.5 188.6,119.3 194.0,123.2 199.3,127.1 204.7,131.2 210.0,135.3 215.3,139.5 220.6,143.7 225.9,148.1 231.2,152.5 236.4,156.9 241.7,161.4 247.0,165.9 252.2,170.5 257.5,175.1 262.8,179.7 268.1,184.4 273.4,189.1 278.6,193.8 283.9,198.5 289.1,203.2 294.4,208.0 299.6,212.8 304.9,217.5 310.1,222.3 315.3,227.0 320.5,231.7 325.7,236.5 330.8,241.2 335.9,245.9 341.0,250.5 346.0,255.1 351.0,259.7 356.0,264.3 360.9,268.8 365.7,273.2 370.5,277.7 375.3,282.0 379.9,286.3 384.5,290.5 389.1,294.7 393.5,298.7 397.9,302.7 402.1,306.6 406.3,310.5 410.3,314.2 414.2,317.8 418.0,321.2 421.6,324.6 425.0,327.8 428.4,330.9 431.7,333.9 434.9,336.8 438.0,339.6 440.9,342.3 443.6,344.7 446.0,346.9 448.4,349.2 451.3,351.8 454.9,355.1 458.9,358.8 463.0,362.5 466.5,365.8 469.4,368.4 471.9,370.7 474.1,372.8 476.2,374.7 478.1,376.4 479.8,378.0 481.3,379.4 482.7,380.7 484.0,381.8 485.0,382.8 486.0,383.7 486.8,384.4 487.5,385.1 488.1,385.6 488.6,386.1 489.2,386.6 489.9,387.3 490.7,388.0 491.5,388.7 492.0,389.2" fill="none" stroke="#3e3e3e" stroke-width="2" stroke-linejoin="round"/>
<clipPath id="lc2"><polygon points="161.7,533.2 160.4,533.4 160.1,533.4 159.4,533.3 158.7,533.0 158.1,532.7 157.6,532.4 157.1,532.1 156.6,531.7 156.0,531.3 155.4,530.8 154.7,530.2 153.9,529.5 152.9,528.7 151.7,527.7 150.4,526.7 149.3,525.8 148.4,525.1 147.6,524.5 146.8,523.8 146.0,523.0 145.0,522.2 144.0,521.3 142.8,520.2 141.7,519.1 140.5,517.9 139.3,516.6 137.9,515.1 136.5,513.3 134.9,511.3 133.3,509.0 131.5,506.4 129.6,503.4 127.6,500.0 125.5,496.3 123.3,492.2 120.9,487.4 118.4,482.0 115.8,476.1 113.0,469.6 110.0,462.2 106.9,454.1 103.5,445.3 100.1,435.7 96.6,425.1 93.2,413.5 89.7,401.0 86.2,387.7 82.9,373.6 79.5,358.5 76.1,342.6 72.8,326.1 69.9,309.4 67.2,292.5 64.7,275.1 62.6,257.7 60.8,240.8 59.6,224.3 58.6,208.0 58.2,192.2 58.3,177.2 59.0,162.9 60.2,149.2 61.9,136.4 64.3,124.8 67.3,114.4 70.9,105.1 75.0,97.0 79.5,90.2 84.6,85.0 90.2,81.3 96.0,78.9 102.0,77.4 108.2,77.2 114.4,78.1 120.6,79.8 126.7,81.7 132.8,84.0 139.0,86.7 145.0,89.8 150.9,92.9 156.7,96.0 162.5,99.3 168.1,102.7 173.7,106.2 179.2,109.8 184.6,113.5 190.0,117.3 195.4,121.1 200.8,125.1 206.2,129.2 211.5,133.3 216.9,137.5 222.2,141.8 227.5,146.1 232.8,150.5 238.1,155.0 243.3,159.5 248.6,164.0 253.9,168.6 259.2,173.2 264.4,177.8 269.7,182.5 275.0,187.2 280.3,191.9 285.6,196.6 290.8,201.4 296.1,206.2 301.3,210.9 306.6,215.7 311.8,220.4 317.0,225.2 322.2,229.9 327.4,234.6 332.5,239.3 337.6,244.0 342.7,248.7 347.7,253.3 352.7,257.9 357.7,262.4 362.6,266.9 367.4,271.4 372.2,275.8 377.0,280.2 381.6,284.5 386.2,288.7 390.8,292.8 395.2,296.9 399.6,300.9 403.8,304.8 408.0,308.6 412.0,312.4 415.9,316.0 419.6,319.4 423.3,322.7 426.7,325.9 430.1,329.0 433.4,332.0 436.6,335.0 439.7,337.8 442.6,340.5 445.3,342.9 447.6,345.1 450.1,347.3 453.0,350.0 456.6,353.3 460.6,357.0 464.7,360.7 468.2,363.9 471.1,366.6 473.5,368.9 475.8,370.9 477.9,372.8 479.8,374.6 481.5,376.2 483.0,377.6 484.4,378.8 485.6,380.0 486.7,381.0 487.7,381.8 488.5,382.6 489.2,383.2 489.8,383.8 490.3,384.3 490.9,384.8 491.6,385.5 492.4,386.2 493.2,386.9 493.0,391.5"/></clipPath>
<g clip-path="url(#lc2)"><path d="M114.0 479.5h7M117.5 476.0v7M114.0 424.5h7M117.5 421.0v7M114.0 370.5h7M117.5 367.0v7M114.0 315.5h7M117.5 312.0v7M114.0 261.5h7M117.5 258.0v7M114.0 207.5h7M117.5 204.0v7M114.0 152.5h7M117.5 149.0v7M114.0 98.5h7M117.5 95.0v7M173.0 479.5h7M176.5 476.0v7M173.0 424.5h7M176.5 421.0v7M173.0 370.5h7M176.5 367.0v7M173.0 315.5h7M176.5 312.0v7M173.0 261.5h7M176.5 258.0v7M173.0 207.5h7M176.5 204.0v7M173.0 152.5h7M176.5 149.0v7M173.0 98.5h7M176.5 95.0v7M232.0 479.5h7M235.5 476.0v7M232.0 424.5h7M235.5 421.0v7M232.0 370.5h7M235.5 367.0v7M232.0 315.5h7M235.5 312.0v7M232.0 261.5h7M235.5 258.0v7M232.0 207.5h7M235.5 204.0v7M232.0 152.5h7M235.5 149.0v7M232.0 98.5h7M235.5 95.0v7M291.0 479.5h7M294.5 476.0v7M291.0 424.5h7M294.5 421.0v7M291.0 370.5h7M294.5 367.0v7M291.0 315.5h7M294.5 312.0v7M291.0 261.5h7M294.5 258.0v7M291.0 207.5h7M294.5 204.0v7M291.0 152.5h7M294.5 149.0v7M291.0 98.5h7M294.5 95.0v7M350.0 479.5h7M353.5 476.0v7M350.0 424.5h7M353.5 421.0v7M350.0 370.5h7M353.5 367.0v7M350.0 315.5h7M353.5 312.0v7M350.0 261.5h7M353.5 258.0v7M350.0 207.5h7M353.5 204.0v7M350.0 152.5h7M353.5 149.0v7M350.0 98.5h7M353.5 95.0v7M409.0 479.5h7M412.5 476.0v7M409.0 370.5h7M412.5 367.0v7M409.0 315.5h7M412.5 312.0v7M409.0 261.5h7M412.5 258.0v7M409.0 207.5h7M412.5 204.0v7M409.0 152.5h7M412.5 149.0v7M409.0 98.5h7M412.5 95.0v7M468.0 479.5h7M471.5 476.0v7M468.0 424.5h7M471.5 421.0v7M468.0 315.5h7M471.5 312.0v7M468.0 261.5h7M471.5 258.0v7M468.0 207.5h7M471.5 204.0v7M468.0 152.5h7M471.5 149.0v7M468.0 98.5h7M471.5 95.0v7" stroke="#b6b6b6" stroke-width="1" fill="none" shape-rendering="crispEdges"/></g>
<path d="M173.0 98.5h7M176.5 95.0v7" stroke="#aaa" stroke-width="1" fill="none" shape-rendering="crispEdges"/>
<path d="M114.0 479.5h7M117.5 476.0v7" stroke="#8e8e8e" stroke-width="1" fill="none" shape-rendering="crispEdges"/>
<path d="M291.0 479.5h7M294.5 476.0v7" stroke="#909090" stroke-width="1" fill="none" shape-rendering="crispEdges"/>
<polygon points="218.2,167.7 462.1,363.2 150.5,496.8" fill="none" stroke="#000" stroke-width="2" stroke-linejoin="miter"/>
<polygon points="247.9,208.7 441.1,352.1 150.5,496.8" fill="none" stroke="#222" stroke-width="1.6" stroke-dasharray="2 2.2"/>
<circle cx="253.2" cy="352" r="2" fill="#555"/><circle cx="262.3" cy="338" r="0.8" fill="#333"/>
<path d="M58.5 535v3M117.5 535v3M176.5 535v3M235.5 535v3M294.5 535v3M353.5 535v3M412.5 535v3M471.5 535v3M55 533.5h3M55 479.5h3M55 424.5h3M55 370.5h3M55 315.5h3M55 261.5h3M55 207.5h3M55 152.5h3M55 98.5h3" stroke="#c4c4c4" stroke-width="1" fill="none" shape-rendering="crispEdges"/>
<path d="M58.5 75.5H498.5V533.5H58.5ZM499.5 75V534M58.5 534v-5M58.5 75v5M117.5 534v-5M117.5 75v5M176.5 534v-5M176.5 75v5M235.5 534v-5M235.5 75v5M294.5 534v-5M294.5 75v5M353.5 534v-5M353.5 75v5M412.5 534v-5M412.5 75v5M471.5 534v-5M471.5 75v5M58 533.5h5M499 533.5h-5M58 479.5h5M499 479.5h-5M58 424.5h5M499 424.5h-5M58 370.5h5M499 370.5h-5M58 315.5h5M499 315.5h-5M58 261.5h5M499 261.5h-5M58 207.5h5M499 207.5h-5M58 152.5h5M499 152.5h-5M58 98.5h5M499 98.5h-5" stroke="#000" stroke-width="1" fill="none" shape-rendering="crispEdges"/>
<text x="58.8" y="548" font-size="12" text-anchor="middle" fill="#000">0</text>
<text x="117.8" y="548" font-size="12" text-anchor="middle" fill="#000">0.1</text>
<text x="176.8" y="548" font-size="12" text-anchor="middle" fill="#000">0.2</text>
<text x="235.8" y="548" font-size="12" text-anchor="middle" fill="#000">0.3</text>
<text x="294.8" y="548" font-size="12" text-anchor="middle" fill="#000">0.4</text>
<text x="353.8" y="548" font-size="12" text-anchor="middle" fill="#000">0.5</text>
<text x="412.8" y="548" font-size="12" text-anchor="middle" fill="#000">0.6</text>
<text x="471.8" y="548" font-size="12" text-anchor="middle" fill="#000">0.7</text>
<text x="53.5" y="537.4" font-size="12" text-anchor="end" fill="#000">0</text>
<text x="53.5" y="483.0" font-size="12" text-anchor="end" fill="#000">0.1</text>
<text x="53.5" y="428.6" font-size="12" text-anchor="end" fill="#000">0.2</text>
<text x="53.5" y="374.2" font-size="12" text-anchor="end" fill="#000">0.3</text>
<text x="53.5" y="319.8" font-size="12" text-anchor="end" fill="#000">0.4</text>
<text x="53.5" y="265.4" font-size="12" text-anchor="end" fill="#000">0.5</text>
<text x="53.5" y="211.0" font-size="12" text-anchor="end" fill="#000">0.6</text>
<text x="53.5" y="156.6" font-size="12" text-anchor="end" fill="#000">0.7</text>
<text x="53.5" y="102.2" font-size="12" text-anchor="end" fill="#000">0.8</text>
<text x="276.7" y="563.8" font-size="12.5" font-weight="bold" text-anchor="middle">x</text>
<text transform="translate(26.6,304.7) rotate(-90)" font-size="12.5" font-weight="bold" text-anchor="middle">y</text>
<text x="277.5" y="66" font-size="13.2" font-weight="bold" text-anchor="middle">CIE 1931 xy Chromaticity diagram</text>
<text x="486" y="91" font-size="11.17" font-weight="bold" text-anchor="end" fill="#eee" xml:space="preserve">Input:  *sRGB</text>
<text x="486" y="105" font-size="11.17" font-weight="bold" text-anchor="end" fill="#eee" xml:space="preserve">Output: 38WN95C-W_hdreffect.icm</text>
<text x="486" y="119" font-size="11.17" font-weight="bold" text-anchor="end" fill="#eee" xml:space="preserve">White point:  x = 0.33  y = 0.333</text>
<text x="486" y="133" font-size="11.17" font-weight="bold" text-anchor="end" fill="#eee" xml:space="preserve">22-Jul-2021 09:19:03</text>
<circle cx="160.7" cy="530.9" r="3.7" fill="#3800db" stroke="#858585" stroke-width="1.1"/>
<text x="149.2" y="530.7" font-size="12.4" text-anchor="end" fill="#e4e4e4">400</text>
<circle cx="131.7" cy="502.1" r="3.7" fill="#000fdb" stroke="#858585" stroke-width="1.1"/>
<text x="121.7" y="506.9" font-size="12.4" text-anchor="end" fill="#e4e4e4">470</text>
<circle cx="112.4" cy="461.3" r="3.7" fill="#004cdb" stroke="#858585" stroke-width="1.1"/>
<text x="102.4" y="466.1" font-size="12.4" text-anchor="end" fill="#e4e4e4">480</text>
<circle cx="85.3" cy="373.0" r="3.7" fill="#00abdb" stroke="#858585" stroke-width="1.1"/>
<text x="94.3" y="377.8" font-size="12.4" fill="#1d5560">490</text>
<circle cx="63.3" cy="240.6" r="3.7" fill="#00dba1" stroke="#858585" stroke-width="1.1"/>
<text x="72.3" y="245.4" font-size="12.4" fill="#2c4a40">500</text>
<circle cx="66.7" cy="125.4" r="3.7" fill="#00db5b" stroke="#858585" stroke-width="1.1"/>
<text x="75.7" y="130.2" font-size="12.4" fill="#2c4a38">510</text>
<circle cx="102.3" cy="79.9" r="3.7" fill="#00db00" stroke="#858585" stroke-width="1.1"/>
<text x="88.3" y="86.7" font-size="12.4" text-anchor="end" fill="#e4e4e4">520</text>
<circle cx="149.8" cy="95.1" r="3.7" fill="#00db00" stroke="#858585" stroke-width="1.1"/>
<text x="158.8" y="99.9" font-size="12.4" fill="#e4e4e4">530</text>
<circle cx="194.0" cy="123.2" r="3.7" fill="#00db00" stroke="#858585" stroke-width="1.1"/>
<text x="203.0" y="128.0" font-size="12.4" fill="#e4e4e4">540</text>
<circle cx="278.6" cy="193.8" r="3.7" fill="#70db00" stroke="#858585" stroke-width="1.1"/>
<text x="287.6" y="198.6" font-size="12.4" fill="#e4e4e4">560</text>
<circle cx="360.9" cy="268.8" r="3.7" fill="#dba100" stroke="#858585" stroke-width="1.1"/>
<text x="369.9" y="273.6" font-size="12.4" fill="#e4e4e4">580</text>
<circle cx="428.4" cy="330.9" r="3.7" fill="#db3b00" stroke="#858585" stroke-width="1.1"/>
<text x="437.4" y="335.7" font-size="12.4" fill="#e4e4e4">600</text>
<circle cx="466.5" cy="365.8" r="3.7" fill="#db0000" stroke="#858585" stroke-width="1.1"/>
<text x="475.5" y="370.6" font-size="12.4" fill="#e4e4e4">620</text>
<circle cx="492.0" cy="389.2" r="3.7" fill="#db0000" stroke="#858585" stroke-width="1.1"/>
<text x="482.0" y="390.0" font-size="12.4" text-anchor="end" fill="#7a1830">700</text>
</svg>
<div class="abs" style="left:551px;top:55px;width:235px;height:235px;background:#f4ffff"></div><svg class="abs" style="left:552px;top:56px;z-index:2" width="234" height="234" shape-rendering="crispEdges"><defs><linearGradient id="h0" x1="0" y1="0" x2="0" y2="1"><stop offset="0" stop-color="#f00"/><stop offset="0.209" stop-color="#f00"/><stop offset="0.346" stop-color="#ff0020"/><stop offset="0.466" stop-color="#ed0032"/><stop offset="0.517" stop-color="#e51e3a"/><stop offset="0.615" stop-color="#d53947"/><stop offset="1" stop-color="#8e7778"/></linearGradient><linearGradient id="h1" x1="0" y1="0" x2="0" y2="1"><stop offset="0" stop-color="#f00"/><stop offset="0.218" stop-color="#f00"/><stop offset="0.346" stop-color="#ff001f"/><stop offset="0.415" stop-color="#f4002a"/><stop offset="0.462" stop-color="#ed1c31"/><stop offset="0.577" stop-color="#db3a41"/><stop offset="1" stop-color="#8e7878"/></linearGradient><linearGradient id="h2" x1="0" y1="0" x2="0" y2="1"><stop offset="0" stop-color="#f00"/><stop offset="0.226" stop-color="#f00"/><stop offset="0.35" stop-color="#fd001e"/><stop offset="0.41" stop-color="#f41f28"/><stop offset="0.53" stop-color="#e13b3a"/><stop offset="1" stop-color="#8e7977"/></linearGradient><linearGradient id="h3" x1="0" y1="0" x2="0" y2="1"><stop offset="0" stop-color="#f00"/><stop offset="0.244" stop-color="#f00"/><stop offset="0.274" stop-color="#ff000a"/><stop offset="0.333" stop-color="#ff1d19"/><stop offset="0.432" stop-color="#f0352a"/><stop offset="0.573" stop-color="#da4b3f"/><stop offset="1" stop-color="#8d7a77"/></linearGradient><linearGradient id="h4" x1="0" y1="0" x2="0" y2="1"><stop offset="0" stop-color="#f00"/><stop offset="0.179" stop-color="#f00"/><stop offset="0.218" stop-color="#ff1500"/><stop offset="0.256" stop-color="#ff2100"/><stop offset="0.329" stop-color="#ff3115"/><stop offset="0.607" stop-color="#d35743"/><stop offset="1" stop-color="#8d7a77"/></linearGradient><linearGradient id="h5" x1="0" y1="0" x2="0" y2="1"><stop offset="0" stop-color="#f00"/><stop offset="0.0641" stop-color="#f00"/><stop offset="0.103" stop-color="#ff1500"/><stop offset="0.137" stop-color="#ff2000"/><stop offset="0.274" stop-color="#ff3900"/><stop offset="0.325" stop-color="#ff4111"/><stop offset="0.513" stop-color="#e15535"/><stop offset="1" stop-color="#8d7b77"/></linearGradient><linearGradient id="h6" x1="0" y1="0" x2="0" y2="1"><stop offset="0" stop-color="#f20"/><stop offset="0.107" stop-color="#ff3600"/><stop offset="0.295" stop-color="#ff4c00"/><stop offset="0.316" stop-color="#ff4e08"/><stop offset="0.397" stop-color="#f2551f"/><stop offset="0.509" stop-color="#e15e33"/><stop offset="1" stop-color="#8c7c77"/></linearGradient><linearGradient id="h7" x1="0" y1="0" x2="0" y2="1"><stop offset="0" stop-color="#ff4000"/><stop offset="0.312" stop-color="#fe5a00"/><stop offset="0.38" stop-color="#f45f18"/><stop offset="0.517" stop-color="#de6733"/><stop offset="1" stop-color="#8c7d77"/></linearGradient><linearGradient id="h8" x1="0" y1="0" x2="0" y2="1"><stop offset="0" stop-color="#ff5600"/><stop offset="0.299" stop-color="#f60"/><stop offset="0.333" stop-color="#f96800"/><stop offset="0.385" stop-color="#f26a15"/><stop offset="0.487" stop-color="#e26e2c"/><stop offset="1" stop-color="#8c7e77"/></linearGradient><linearGradient id="h9" x1="0" y1="0" x2="0" y2="1"><stop offset="0" stop-color="#ff6900"/><stop offset="0.286" stop-color="#ff7200"/><stop offset="0.35" stop-color="#f57300"/><stop offset="0.41" stop-color="#ec7518"/><stop offset="0.53" stop-color="#da7732"/><stop offset="1" stop-color="#8b7f77"/></linearGradient><linearGradient id="h10" x1="0" y1="0" x2="0" y2="1"><stop offset="0" stop-color="#ff7a00"/><stop offset="0.274" stop-color="#ff7d00"/><stop offset="0.368" stop-color="#f17e00"/><stop offset="0.432" stop-color="#e77f1a"/><stop offset="0.513" stop-color="#db7f2d"/><stop offset="1" stop-color="#8b8077"/></linearGradient><linearGradient id="h11" x1="0" y1="0" x2="0" y2="1"><stop offset="0" stop-color="#ff8b00"/><stop offset="0.261" stop-color="#ff8900"/><stop offset="0.389" stop-color="#ec8800"/><stop offset="0.453" stop-color="#e2881c"/><stop offset="0.564" stop-color="#d18735"/><stop offset="1" stop-color="#8b8177"/></linearGradient><linearGradient id="h12" x1="0" y1="0" x2="0" y2="1"><stop offset="0" stop-color="#ff9b00"/><stop offset="0.248" stop-color="#ff9500"/><stop offset="0.406" stop-color="#e79100"/><stop offset="0.457" stop-color="#e09019"/><stop offset="0.568" stop-color="#cf8d34"/><stop offset="1" stop-color="#8a8177"/></linearGradient><linearGradient id="h13" x1="0" y1="0" x2="0" y2="1"><stop offset="0" stop-color="#fa0"/><stop offset="0.231" stop-color="#ffa100"/><stop offset="0.423" stop-color="#e39a00"/><stop offset="0.474" stop-color="#db981a"/><stop offset="0.577" stop-color="#cc9434"/><stop offset="1" stop-color="#8a8277"/></linearGradient><linearGradient id="h14" x1="0" y1="0" x2="0" y2="1"><stop offset="0" stop-color="#ffb900"/><stop offset="0.209" stop-color="#ffae00"/><stop offset="0.44" stop-color="#dea200"/><stop offset="0.483" stop-color="#d8a018"/><stop offset="0.581" stop-color="#c99b33"/><stop offset="1" stop-color="#8a8377"/></linearGradient><linearGradient id="h15" x1="0" y1="0" x2="0" y2="1"><stop offset="0" stop-color="#ffc800"/><stop offset="0.188" stop-color="#ffbc00"/><stop offset="0.453" stop-color="#daaa00"/><stop offset="0.496" stop-color="#d4a718"/><stop offset="0.581" stop-color="#c7a131"/><stop offset="1" stop-color="#898477"/></linearGradient><linearGradient id="h16" x1="0" y1="0" x2="0" y2="1"><stop offset="0" stop-color="#ffd700"/><stop offset="0.162" stop-color="#ffca00"/><stop offset="0.47" stop-color="#d5b100"/><stop offset="0.53" stop-color="#ccac20"/><stop offset="0.645" stop-color="#bca33d"/><stop offset="1" stop-color="#898576"/></linearGradient><linearGradient id="h17" x1="0" y1="0" x2="0" y2="1"><stop offset="0" stop-color="#ffe500"/><stop offset="0.137" stop-color="#ffd900"/><stop offset="0.483" stop-color="#d0b800"/><stop offset="0.517" stop-color="#ccb516"/><stop offset="0.56" stop-color="#c6b026"/><stop offset="0.667" stop-color="#b7a640"/><stop offset="1" stop-color="#898676"/></linearGradient><linearGradient id="h18" x1="0" y1="0" x2="0" y2="1"><stop offset="0" stop-color="#fff400"/><stop offset="0.103" stop-color="#ffe900"/><stop offset="0.5" stop-color="#cbbe00"/><stop offset="0.526" stop-color="#c8bb14"/><stop offset="0.594" stop-color="#bfb42d"/><stop offset="0.756" stop-color="#aaa250"/><stop offset="1" stop-color="#888776"/></linearGradient><linearGradient id="h19" x1="0" y1="0" x2="0" y2="1"><stop offset="0" stop-color="#ff0"/><stop offset="0.0598" stop-color="#fffb00"/><stop offset="0.513" stop-color="#c7c400"/><stop offset="0.564" stop-color="#c0be20"/><stop offset="0.632" stop-color="#b8b535"/><stop offset="0.761" stop-color="#a7a550"/><stop offset="1" stop-color="#888876"/></linearGradient><linearGradient id="h20" x1="0" y1="0" x2="0" y2="1"><stop offset="0" stop-color="#f3ff00"/><stop offset="0.0385" stop-color="#efff00"/><stop offset="0.509" stop-color="#bdc500"/><stop offset="0.56" stop-color="#b8bf1f"/><stop offset="0.62" stop-color="#b1b732"/><stop offset="0.761" stop-color="#a2a650"/><stop offset="1" stop-color="#878876"/></linearGradient><linearGradient id="h21" x1="0" y1="0" x2="0" y2="1"><stop offset="0" stop-color="#dfff00"/><stop offset="0.047" stop-color="#dbff00"/><stop offset="0.509" stop-color="#b3c500"/><stop offset="0.538" stop-color="#b0c216"/><stop offset="0.611" stop-color="#aab930"/><stop offset="0.765" stop-color="#9ca551"/><stop offset="1" stop-color="#868876"/></linearGradient><linearGradient id="h22" x1="0" y1="0" x2="0" y2="1"><stop offset="0" stop-color="#caff00"/><stop offset="0.0513" stop-color="#c6ff00"/><stop offset="0.504" stop-color="#a8c700"/><stop offset="0.543" stop-color="#a6c219"/><stop offset="0.603" stop-color="#a2ba2e"/><stop offset="0.748" stop-color="#97a84e"/><stop offset="1" stop-color="#858876"/></linearGradient><linearGradient id="h23" x1="0" y1="0" x2="0" y2="1"><stop offset="0" stop-color="#b3ff00"/><stop offset="0.0598" stop-color="#b1ff00"/><stop offset="0.504" stop-color="#9dc700"/><stop offset="0.556" stop-color="#9bc11f"/><stop offset="0.628" stop-color="#97b735"/><stop offset="0.786" stop-color="#8fa355"/><stop offset="1" stop-color="#838876"/></linearGradient><linearGradient id="h24" x1="0" y1="0" x2="0" y2="1"><stop offset="0" stop-color="#9bff00"/><stop offset="0.0641" stop-color="#9aff00"/><stop offset="0.504" stop-color="#92c700"/><stop offset="0.547" stop-color="#91c21c"/><stop offset="0.615" stop-color="#8fb932"/><stop offset="0.769" stop-color="#8aa652"/><stop offset="1" stop-color="#828876"/></linearGradient><linearGradient id="h25" x1="0" y1="0" x2="0" y2="1"><stop offset="0" stop-color="#7fff00"/><stop offset="0.0684" stop-color="#81ff00"/><stop offset="0.5" stop-color="#86c800"/><stop offset="0.556" stop-color="#86c120"/><stop offset="0.607" stop-color="#86bb30"/><stop offset="0.752" stop-color="#85a84f"/><stop offset="1" stop-color="#818876"/></linearGradient><linearGradient id="h26" x1="0" y1="0" x2="0" y2="1"><stop offset="0" stop-color="#5dff00"/><stop offset="0.0726" stop-color="#63ff00"/><stop offset="0.5" stop-color="#79c900"/><stop offset="0.526" stop-color="#7ac613"/><stop offset="0.598" stop-color="#7cbc2e"/><stop offset="0.735" stop-color="#7eab4c"/><stop offset="1" stop-color="#808876"/></linearGradient><linearGradient id="h27" x1="0" y1="0" x2="0" y2="1"><stop offset="0" stop-color="#21ff00"/><stop offset="0.0769" stop-color="#38ff00"/><stop offset="0.197" stop-color="#4ef000"/><stop offset="0.5" stop-color="#6bc900"/><stop offset="0.53" stop-color="#6dc516"/><stop offset="0.594" stop-color="#71bd2d"/><stop offset="0.756" stop-color="#78a850"/><stop offset="1" stop-color="#7f8876"/></linearGradient><linearGradient id="h28" x1="0" y1="0" x2="0" y2="1"><stop offset="0" stop-color="#0f0"/><stop offset="0.0812" stop-color="#0f0"/><stop offset="0.171" stop-color="#00f400"/><stop offset="0.209" stop-color="#1fef00"/><stop offset="0.261" stop-color="#32e800"/><stop offset="0.372" stop-color="#4ada00"/><stop offset="0.496" stop-color="#5bca00"/><stop offset="0.547" stop-color="#60c41e"/><stop offset="0.62" stop-color="#67ba34"/><stop offset="0.808" stop-color="#74a259"/><stop offset="1" stop-color="#7d8876"/></linearGradient><linearGradient id="h29" x1="0" y1="0" x2="0" y2="1"><stop offset="0" stop-color="#0f0"/><stop offset="0.0855" stop-color="#0f0"/><stop offset="0.321" stop-color="#00e100"/><stop offset="0.338" stop-color="#14df00"/><stop offset="0.372" stop-color="#27da00"/><stop offset="0.496" stop-color="#48ca00"/><stop offset="0.538" stop-color="#50c51b"/><stop offset="0.607" stop-color="#5abc31"/><stop offset="0.739" stop-color="#69ab4d"/><stop offset="1" stop-color="#7c8876"/></linearGradient><linearGradient id="h30" x1="0" y1="0" x2="0" y2="1"><stop offset="0" stop-color="#0f0"/><stop offset="0.0897" stop-color="#0f0"/><stop offset="0.427" stop-color="#00d400"/><stop offset="0.44" stop-color="#11d200"/><stop offset="0.457" stop-color="#1ed000"/><stop offset="0.496" stop-color="#2fcb00"/><stop offset="0.543" stop-color="#3dc51d"/><stop offset="0.603" stop-color="#4bbd30"/><stop offset="0.778" stop-color="#66a654"/><stop offset="1" stop-color="#7b8876"/></linearGradient><linearGradient id="h31" x1="0" y1="0" x2="0" y2="1"><stop offset="0" stop-color="#0f0"/><stop offset="0.0897" stop-color="#0f0"/><stop offset="0.496" stop-color="#00cb00"/><stop offset="0.504" stop-color="#00ca07"/><stop offset="0.543" stop-color="#22c51d"/><stop offset="0.615" stop-color="#3ebc33"/><stop offset="0.778" stop-color="#5fa654"/><stop offset="1" stop-color="#7a8876"/></linearGradient><linearGradient id="h32" x1="0" y1="0" x2="0" y2="1"><stop offset="0" stop-color="#0f0"/><stop offset="0.094" stop-color="#0f0"/><stop offset="0.491" stop-color="#0c0"/><stop offset="0.521" stop-color="#00c814"/><stop offset="0.568" stop-color="#00c226"/><stop offset="0.607" stop-color="#24bd31"/><stop offset="0.688" stop-color="#43b243"/><stop offset="0.812" stop-color="#5ea259"/><stop offset="1" stop-color="#788876"/></linearGradient><linearGradient id="h33" x1="0" y1="0" x2="0" y2="1"><stop offset="0" stop-color="#0f0"/><stop offset="0.094" stop-color="#0f0"/><stop offset="0.491" stop-color="#0c0"/><stop offset="0.543" stop-color="#00c51e"/><stop offset="0.62" stop-color="#00bb34"/><stop offset="0.632" stop-color="#12ba37"/><stop offset="0.658" stop-color="#26b63d"/><stop offset="0.718" stop-color="#3faf49"/><stop offset="0.833" stop-color="#5c9f5d"/><stop offset="1" stop-color="#778876"/></linearGradient><linearGradient id="h34" x1="0" y1="0" x2="0" y2="1"><stop offset="0" stop-color="#0f0"/><stop offset="0.0983" stop-color="#0f0"/><stop offset="0.491" stop-color="#0c0"/><stop offset="0.547" stop-color="#00c520"/><stop offset="0.658" stop-color="#00b73d"/><stop offset="0.692" stop-color="#23b244"/><stop offset="0.774" stop-color="#46a753"/><stop offset="1" stop-color="#768976"/></linearGradient><linearGradient id="h35" x1="0" y1="0" x2="0" y2="1"><stop offset="0" stop-color="#0f0"/><stop offset="0.0983" stop-color="#0f0"/><stop offset="0.491" stop-color="#00cd00"/><stop offset="0.517" stop-color="#00c913"/><stop offset="0.564" stop-color="#00c326"/><stop offset="0.697" stop-color="#00b245"/><stop offset="0.705" stop-color="#10b147"/><stop offset="0.722" stop-color="#21ae4a"/><stop offset="0.774" stop-color="#3ca853"/><stop offset="0.859" stop-color="#579c61"/><stop offset="1" stop-color="#758976"/></linearGradient><linearGradient id="h36" x1="0" y1="0" x2="0" y2="1"><stop offset="0" stop-color="#0f0"/><stop offset="0.0983" stop-color="#0f0"/><stop offset="0.491" stop-color="#00cd00"/><stop offset="0.513" stop-color="#00ca11"/><stop offset="0.551" stop-color="#00c522"/><stop offset="0.722" stop-color="#00af4a"/><stop offset="0.756" stop-color="#26aa50"/><stop offset="0.808" stop-color="#40a359"/><stop offset="0.889" stop-color="#5a9866"/><stop offset="1" stop-color="#738976"/></linearGradient><linearGradient id="h37" x1="0" y1="0" x2="0" y2="1"><stop offset="0" stop-color="#0f0"/><stop offset="0.0983" stop-color="#0f0"/><stop offset="0.491" stop-color="#00cd00"/><stop offset="0.521" stop-color="#00c916"/><stop offset="0.573" stop-color="#00c229"/><stop offset="0.748" stop-color="#00ab4f"/><stop offset="0.774" stop-color="#21a853"/><stop offset="0.838" stop-color="#449f5e"/><stop offset="1" stop-color="#728976"/></linearGradient><linearGradient id="h38" x1="0" y1="0" x2="0" y2="1"><stop offset="0" stop-color="#0f0"/><stop offset="0.103" stop-color="#0f0"/><stop offset="0.487" stop-color="#00ce00"/><stop offset="0.517" stop-color="#00ca14"/><stop offset="0.573" stop-color="#00c329"/><stop offset="0.769" stop-color="#00a953"/><stop offset="0.791" stop-color="#1ea656"/><stop offset="0.825" stop-color="#36a15c"/><stop offset="0.897" stop-color="#549767"/><stop offset="1" stop-color="#718976"/></linearGradient><linearGradient id="h39" x1="0" y1="0" x2="0" y2="1"><stop offset="0" stop-color="#0f0"/><stop offset="0.103" stop-color="#0f0"/><stop offset="0.466" stop-color="#00d000"/><stop offset="0.491" stop-color="#00cd12"/><stop offset="0.551" stop-color="#00c529"/><stop offset="0.782" stop-color="#00a757"/><stop offset="0.799" stop-color="#1da55a"/><stop offset="0.833" stop-color="#36a05f"/><stop offset="0.919" stop-color="#59946c"/><stop offset="1" stop-color="#708977"/></linearGradient><linearGradient id="h40" x1="0" y1="0" x2="0" y2="1"><stop offset="0" stop-color="#0f0"/><stop offset="0.103" stop-color="#0f0"/><stop offset="0.415" stop-color="#00d700"/><stop offset="0.44" stop-color="#00d412"/><stop offset="0.5" stop-color="#00cc28"/><stop offset="0.637" stop-color="#00ba45"/><stop offset="0.782" stop-color="#00a75b"/><stop offset="0.799" stop-color="#1ca55e"/><stop offset="0.842" stop-color="#3a9f63"/><stop offset="0.919" stop-color="#59946e"/><stop offset="1" stop-color="#708978"/></linearGradient><linearGradient id="h41" x1="0" y1="0" x2="0" y2="1"><stop offset="0" stop-color="#0f0"/><stop offset="0.103" stop-color="#0f0"/><stop offset="0.35" stop-color="#00df00"/><stop offset="0.406" stop-color="#00d81d"/><stop offset="0.5" stop-color="#00cc35"/><stop offset="0.782" stop-color="#00a75f"/><stop offset="0.799" stop-color="#1ba461"/><stop offset="0.846" stop-color="#3c9e67"/><stop offset="0.91" stop-color="#56956f"/><stop offset="1" stop-color="#708979"/></linearGradient><linearGradient id="h42" x1="0" y1="0" x2="0" y2="1"><stop offset="0" stop-color="#0f0"/><stop offset="0.0983" stop-color="#0f0"/><stop offset="0.278" stop-color="#00e800"/><stop offset="0.321" stop-color="#00e318"/><stop offset="0.415" stop-color="#00d731"/><stop offset="0.59" stop-color="#00c04d"/><stop offset="0.782" stop-color="#00a763"/><stop offset="0.799" stop-color="#1aa465"/><stop offset="0.838" stop-color="#379f69"/><stop offset="0.889" stop-color="#4e986f"/><stop offset="1" stop-color="#708979"/></linearGradient><linearGradient id="h43" x1="0" y1="0" x2="0" y2="1"><stop offset="0" stop-color="#0f0"/><stop offset="0.0983" stop-color="#0f0"/><stop offset="0.188" stop-color="#00f400"/><stop offset="0.239" stop-color="#00ed1b"/><stop offset="0.359" stop-color="#00de36"/><stop offset="0.782" stop-color="#00a768"/><stop offset="0.808" stop-color="#22a36a"/><stop offset="0.842" stop-color="#399f6d"/><stop offset="0.915" stop-color="#579573"/><stop offset="1" stop-color="#70897a"/></linearGradient><linearGradient id="h44" x1="0" y1="0" x2="0" y2="1"><stop offset="0" stop-color="#0f0"/><stop offset="0.0726" stop-color="#0f0"/><stop offset="0.137" stop-color="#00fa1e"/><stop offset="0.295" stop-color="#00e63c"/><stop offset="0.786" stop-color="#00a66c"/><stop offset="0.795" stop-color="#12a56d"/><stop offset="0.808" stop-color="#21a36e"/><stop offset="0.85" stop-color="#3d9d71"/><stop offset="1" stop-color="#70897b"/></linearGradient><linearGradient id="h45" x1="0" y1="0" x2="0" y2="1"><stop offset="0" stop-color="#00ff20"/><stop offset="0.0983" stop-color="#0f3"/><stop offset="0.265" stop-color="#00ea48"/><stop offset="0.786" stop-color="#00a670"/><stop offset="0.808" stop-color="#20a371"/><stop offset="0.842" stop-color="#389e73"/><stop offset="0.893" stop-color="#4f9876"/><stop offset="1" stop-color="#70897c"/></linearGradient><linearGradient id="h46" x1="0" y1="0" x2="0" y2="1"><stop offset="0" stop-color="#00ff3f"/><stop offset="0.0983" stop-color="#00ff49"/><stop offset="0.786" stop-color="#00a674"/><stop offset="0.808" stop-color="#1fa375"/><stop offset="0.846" stop-color="#3a9e76"/><stop offset="0.902" stop-color="#529679"/><stop offset="1" stop-color="#70897d"/></linearGradient><linearGradient id="h47" x1="0" y1="0" x2="0" y2="1"><stop offset="0" stop-color="#0f5"/><stop offset="0.0983" stop-color="#00ff5b"/><stop offset="0.786" stop-color="#00a678"/><stop offset="0.816" stop-color="#26a279"/><stop offset="0.859" stop-color="#409c7a"/><stop offset="1" stop-color="#70897e"/></linearGradient><linearGradient id="h48" x1="0" y1="0" x2="0" y2="1"><stop offset="0" stop-color="#00ff67"/><stop offset="0.094" stop-color="#00ff6b"/><stop offset="0.791" stop-color="#00a57c"/><stop offset="0.808" stop-color="#1da37c"/><stop offset="0.846" stop-color="#399e7c"/><stop offset="0.906" stop-color="#53967d"/><stop offset="1" stop-color="#70897f"/></linearGradient><linearGradient id="h49" x1="0" y1="0" x2="0" y2="1"><stop offset="0" stop-color="#00ff79"/><stop offset="0.094" stop-color="#00ff7a"/><stop offset="0.791" stop-color="#00a57f"/><stop offset="0.808" stop-color="#1ca37f"/><stop offset="0.855" stop-color="#3d9d7f"/><stop offset="0.936" stop-color="#5d9180"/><stop offset="1" stop-color="#6f8980"/></linearGradient><linearGradient id="h50" x1="0" y1="0" x2="0" y2="1"><stop offset="0" stop-color="#00ff89"/><stop offset="0.094" stop-color="#00ff89"/><stop offset="0.791" stop-color="#00a583"/><stop offset="0.812" stop-color="#1fa283"/><stop offset="0.846" stop-color="#389e82"/><stop offset="0.902" stop-color="#519682"/><stop offset="1" stop-color="#6f8980"/></linearGradient><linearGradient id="h51" x1="0" y1="0" x2="0" y2="1"><stop offset="0" stop-color="#0f9"/><stop offset="0.0897" stop-color="#00ff97"/><stop offset="0.791" stop-color="#00a587"/><stop offset="0.795" stop-color="#01a487"/><stop offset="0.812" stop-color="#1ea286"/><stop offset="0.855" stop-color="#3c9c85"/><stop offset="0.91" stop-color="#549584"/><stop offset="1" stop-color="#6f8981"/></linearGradient><linearGradient id="h52" x1="0" y1="0" x2="0" y2="1"><stop offset="0" stop-color="#00ffa9"/><stop offset="0.0897" stop-color="#00ffa5"/><stop offset="0.795" stop-color="#00a48a"/><stop offset="0.812" stop-color="#1da28a"/><stop offset="0.846" stop-color="#379d88"/><stop offset="0.906" stop-color="#529586"/><stop offset="1" stop-color="#6f8882"/></linearGradient><linearGradient id="h53" x1="0" y1="0" x2="0" y2="1"><stop offset="0" stop-color="#00ffb8"/><stop offset="0.0897" stop-color="#00ffb3"/><stop offset="0.795" stop-color="#00a48e"/><stop offset="0.816" stop-color="#20a18d"/><stop offset="0.855" stop-color="#3b9c8b"/><stop offset="0.915" stop-color="#559488"/><stop offset="1" stop-color="#6f8883"/></linearGradient><linearGradient id="h54" x1="0" y1="0" x2="0" y2="1"><stop offset="0" stop-color="#00ffc6"/><stop offset="0.0855" stop-color="#00ffc1"/><stop offset="0.795" stop-color="#00a492"/><stop offset="0.816" stop-color="#1fa190"/><stop offset="0.859" stop-color="#3d9c8d"/><stop offset="1" stop-color="#6f8884"/></linearGradient><linearGradient id="h55" x1="0" y1="0" x2="0" y2="1"><stop offset="0" stop-color="#00ffd5"/><stop offset="0.0855" stop-color="#00ffce"/><stop offset="0.799" stop-color="#00a495"/><stop offset="0.816" stop-color="#1ea194"/><stop offset="0.855" stop-color="#3a9c91"/><stop offset="0.91" stop-color="#53958c"/><stop offset="1" stop-color="#6f8885"/></linearGradient><linearGradient id="h56" x1="0" y1="0" x2="0" y2="1"><stop offset="0" stop-color="#00ffe4"/><stop offset="0.0812" stop-color="#00ffdc"/><stop offset="0.799" stop-color="#00a399"/><stop offset="0.821" stop-color="#21a197"/><stop offset="0.859" stop-color="#3c9b93"/><stop offset="0.919" stop-color="#56938d"/><stop offset="1" stop-color="#6f8886"/></linearGradient><linearGradient id="h57" x1="0" y1="0" x2="0" y2="1"><stop offset="0" stop-color="#00fff2"/><stop offset="0.0812" stop-color="#00ffe9"/><stop offset="0.799" stop-color="#00a39c"/><stop offset="0.821" stop-color="#20a19a"/><stop offset="0.855" stop-color="#399c96"/><stop offset="0.915" stop-color="#549490"/><stop offset="1" stop-color="#6f8886"/></linearGradient><linearGradient id="h58" x1="0" y1="0" x2="0" y2="1"><stop offset="0" stop-color="#0ff"/><stop offset="0.0769" stop-color="#00fff7"/><stop offset="0.803" stop-color="#00a39f"/><stop offset="0.812" stop-color="#13a29e"/><stop offset="0.825" stop-color="#23a09d"/><stop offset="0.859" stop-color="#3b9b99"/><stop offset="0.923" stop-color="#579391"/><stop offset="1" stop-color="#6f8887"/></linearGradient><linearGradient id="h59" x1="0" y1="0" x2="0" y2="1"><stop offset="0" stop-color="#00faff"/><stop offset="0.791" stop-color="#00a1a1"/><stop offset="0.812" stop-color="#1e9e9e"/><stop offset="0.85" stop-color="#3a9a9a"/><stop offset="0.91" stop-color="#549292"/><stop offset="1" stop-color="#6f8787"/></linearGradient><linearGradient id="h60" x1="0" y1="0" x2="0" y2="1"><stop offset="0" stop-color="#00ecff"/><stop offset="0.782" stop-color="#009ea2"/><stop offset="0.803" stop-color="#1f9ca0"/><stop offset="0.838" stop-color="#37989c"/><stop offset="0.897" stop-color="#519294"/><stop offset="1" stop-color="#708787"/></linearGradient><linearGradient id="h61" x1="0" y1="0" x2="0" y2="1"><stop offset="0" stop-color="#00deff"/><stop offset="0.047" stop-color="#00dafe"/><stop offset="0.769" stop-color="#009ba4"/><stop offset="0.774" stop-color="#019ba4"/><stop offset="0.795" stop-color="#2099a1"/><stop offset="0.833" stop-color="#39969c"/><stop offset="0.889" stop-color="#509095"/><stop offset="1" stop-color="#708688"/></linearGradient><linearGradient id="h62" x1="0" y1="0" x2="0" y2="1"><stop offset="0" stop-color="#00d0ff"/><stop offset="0.0855" stop-color="#00cafa"/><stop offset="0.761" stop-color="#0098a6"/><stop offset="0.782" stop-color="#1e96a3"/><stop offset="0.808" stop-color="#3094a0"/><stop offset="0.88" stop-color="#4f8f97"/><stop offset="1" stop-color="#718588"/></linearGradient><linearGradient id="h63" x1="0" y1="0" x2="0" y2="1"><stop offset="0" stop-color="#00c2ff"/><stop offset="0.0513" stop-color="#00bfff"/><stop offset="0.748" stop-color="#0095a8"/><stop offset="0.774" stop-color="#2093a4"/><stop offset="0.816" stop-color="#39909f"/><stop offset="0.893" stop-color="#558b95"/><stop offset="1" stop-color="#718488"/></linearGradient><linearGradient id="h64" x1="0" y1="0" x2="0" y2="1"><stop offset="0" stop-color="#00b4ff"/><stop offset="0.0556" stop-color="#00b2ff"/><stop offset="0.735" stop-color="#0091a9"/><stop offset="0.756" stop-color="#1c90a7"/><stop offset="0.816" stop-color="#3d8d9f"/><stop offset="0.897" stop-color="#588995"/><stop offset="1" stop-color="#718388"/></linearGradient><linearGradient id="h65" x1="0" y1="0" x2="0" y2="1"><stop offset="0" stop-color="#00a6ff"/><stop offset="0.0598" stop-color="#00a4ff"/><stop offset="0.718" stop-color="#008eac"/><stop offset="0.744" stop-color="#1c8da9"/><stop offset="0.799" stop-color="#3a8aa2"/><stop offset="0.885" stop-color="#568797"/><stop offset="1" stop-color="#728288"/></linearGradient><linearGradient id="h66" x1="0" y1="0" x2="0" y2="1"><stop offset="0" stop-color="#0098ff"/><stop offset="0.0641" stop-color="#0096ff"/><stop offset="0.705" stop-color="#0089ae"/><stop offset="0.731" stop-color="#1d89ab"/><stop offset="0.786" stop-color="#3987a3"/><stop offset="0.897" stop-color="#5b8495"/><stop offset="1" stop-color="#728188"/></linearGradient><linearGradient id="h67" x1="0" y1="0" x2="0" y2="1"><stop offset="0" stop-color="#0089ff"/><stop offset="0.0684" stop-color="#0089ff"/><stop offset="0.688" stop-color="#0085b0"/><stop offset="0.705" stop-color="#1584ae"/><stop offset="0.722" stop-color="#2184ac"/><stop offset="0.769" stop-color="#3784a6"/><stop offset="0.868" stop-color="#558299"/><stop offset="1" stop-color="#738188"/></linearGradient><linearGradient id="h68" x1="0" y1="0" x2="0" y2="1"><stop offset="0" stop-color="#007aff"/><stop offset="0.0726" stop-color="#007bff"/><stop offset="0.671" stop-color="#0080b3"/><stop offset="0.684" stop-color="#1180b1"/><stop offset="0.701" stop-color="#1e80af"/><stop offset="0.765" stop-color="#3a80a7"/><stop offset="1" stop-color="#738088"/></linearGradient><linearGradient id="h69" x1="0" y1="0" x2="0" y2="1"><stop offset="0" stop-color="#006bff"/><stop offset="0.0726" stop-color="#006dff"/><stop offset="0.65" stop-color="#007ab6"/><stop offset="0.684" stop-color="#1e7ab1"/><stop offset="0.752" stop-color="#3a7ba8"/><stop offset="1" stop-color="#747f88"/></linearGradient><linearGradient id="h70" x1="0" y1="0" x2="0" y2="1"><stop offset="0" stop-color="#005cff"/><stop offset="0.0769" stop-color="#005fff"/><stop offset="0.628" stop-color="#0074b9"/><stop offset="0.671" stop-color="#2175b3"/><stop offset="0.735" stop-color="#3977ab"/><stop offset="1" stop-color="#747e88"/></linearGradient><linearGradient id="h71" x1="0" y1="0" x2="0" y2="1"><stop offset="0" stop-color="#004bff"/><stop offset="0.0812" stop-color="#0051ff"/><stop offset="0.607" stop-color="#006dbc"/><stop offset="0.645" stop-color="#1e6eb7"/><stop offset="0.714" stop-color="#3771ae"/><stop offset="1" stop-color="#747d88"/></linearGradient><linearGradient id="h72" x1="0" y1="0" x2="0" y2="1"><stop offset="0" stop-color="#003aff"/><stop offset="0.0812" stop-color="#0041ff"/><stop offset="0.581" stop-color="#0065bf"/><stop offset="0.611" stop-color="#1766bb"/><stop offset="0.701" stop-color="#386cb0"/><stop offset="1" stop-color="#757c88"/></linearGradient><linearGradient id="h73" x1="0" y1="0" x2="0" y2="1"><stop offset="0" stop-color="#0025ff"/><stop offset="0.0812" stop-color="#0030ff"/><stop offset="0.556" stop-color="#005cc3"/><stop offset="0.598" stop-color="#1c5fbd"/><stop offset="0.688" stop-color="#3966b2"/><stop offset="1" stop-color="#757b88"/></linearGradient><linearGradient id="h74" x1="0" y1="0" x2="0" y2="1"><stop offset="0" stop-color="#0001ff"/><stop offset="0.0641" stop-color="#0017ff"/><stop offset="0.175" stop-color="#002bf3"/><stop offset="0.53" stop-color="#0052c6"/><stop offset="0.585" stop-color="#2057bf"/><stop offset="0.671" stop-color="#395fb4"/><stop offset="1" stop-color="#757a88"/></linearGradient><linearGradient id="h75" x1="0" y1="0" x2="0" y2="1"><stop offset="0" stop-color="#00f"/><stop offset="0.115" stop-color="#0000fb"/><stop offset="0.167" stop-color="#0014f5"/><stop offset="0.239" stop-color="#0024eb"/><stop offset="0.504" stop-color="#0048ca"/><stop offset="0.556" stop-color="#1d4dc3"/><stop offset="0.632" stop-color="#3455b9"/><stop offset="1" stop-color="#767a88"/></linearGradient><linearGradient id="h76" x1="0" y1="0" x2="0" y2="1"><stop offset="0" stop-color="#00f"/><stop offset="0.0855" stop-color="#00f"/><stop offset="0.209" stop-color="#0000ef"/><stop offset="0.303" stop-color="#001fe3"/><stop offset="0.483" stop-color="#003ccd"/><stop offset="0.504" stop-color="#103fca"/><stop offset="0.538" stop-color="#1f43c5"/><stop offset="0.641" stop-color="#3a50b8"/><stop offset="1" stop-color="#767988"/></linearGradient><linearGradient id="h77" x1="0" y1="0" x2="0" y2="1"><stop offset="0" stop-color="#00f"/><stop offset="0.0855" stop-color="#00f"/><stop offset="0.286" stop-color="#0000e6"/><stop offset="0.346" stop-color="#0017de"/><stop offset="0.457" stop-color="#002ed0"/><stop offset="0.53" stop-color="#233ac7"/><stop offset="0.624" stop-color="#3a48bb"/><stop offset="1" stop-color="#777888"/></linearGradient><linearGradient id="h78" x1="0" y1="0" x2="0" y2="1"><stop offset="0" stop-color="#00f"/><stop offset="0.0855" stop-color="#00f"/><stop offset="0.325" stop-color="#0000e1"/><stop offset="0.415" stop-color="#001fd6"/><stop offset="0.474" stop-color="#1f2bce"/><stop offset="0.577" stop-color="#383dc1"/><stop offset="1" stop-color="#777789"/></linearGradient><linearGradient id="h79" x1="0" y1="0" x2="0" y2="1"><stop offset="0" stop-color="#00f"/><stop offset="0.0855" stop-color="#00f"/><stop offset="0.333" stop-color="#0000e0"/><stop offset="0.389" stop-color="#1c17d9"/><stop offset="0.509" stop-color="#3831ca"/><stop offset="1" stop-color="#797789"/></linearGradient><linearGradient id="h80" x1="0" y1="0" x2="0" y2="1"><stop offset="0" stop-color="#00f"/><stop offset="0.0855" stop-color="#00f"/><stop offset="0.239" stop-color="#0000ec"/><stop offset="0.278" stop-color="#1500e7"/><stop offset="0.338" stop-color="#2700df"/><stop offset="0.402" stop-color="#3419d7"/><stop offset="0.513" stop-color="#4531c9"/><stop offset="1" stop-color="#7a7789"/></linearGradient><linearGradient id="h81" x1="0" y1="0" x2="0" y2="1"><stop offset="0" stop-color="#00f"/><stop offset="0.132" stop-color="#0000f9"/><stop offset="0.197" stop-color="#1e00f1"/><stop offset="0.346" stop-color="#3b00de"/><stop offset="0.406" stop-color="#4418d7"/><stop offset="0.53" stop-color="#5233c7"/><stop offset="1" stop-color="#7b7788"/></linearGradient><linearGradient id="h82" x1="0" y1="0" x2="0" y2="1"><stop offset="0" stop-color="#00f"/><stop offset="0.0556" stop-color="#1a00ff"/><stop offset="0.137" stop-color="#2e00f8"/><stop offset="0.359" stop-color="#4c00dc"/><stop offset="0.415" stop-color="#5218d5"/><stop offset="0.547" stop-color="#5e35c5"/><stop offset="1" stop-color="#7c7788"/></linearGradient><linearGradient id="h83" x1="0" y1="0" x2="0" y2="1"><stop offset="0" stop-color="#3100ff"/><stop offset="0.0855" stop-color="#3e00ff"/><stop offset="0.368" stop-color="#5b00db"/><stop offset="0.427" stop-color="#5f19d4"/><stop offset="0.521" stop-color="#662fc8"/><stop offset="1" stop-color="#7d7788"/></linearGradient><linearGradient id="h84" x1="0" y1="0" x2="0" y2="1"><stop offset="0" stop-color="#4b00ff"/><stop offset="0.0855" stop-color="#5300ff"/><stop offset="0.38" stop-color="#6800da"/><stop offset="0.44" stop-color="#6b1ad2"/><stop offset="0.538" stop-color="#7031c6"/><stop offset="1" stop-color="#7e7788"/></linearGradient><linearGradient id="h85" x1="0" y1="0" x2="0" y2="1"><stop offset="0" stop-color="#6100ff"/><stop offset="0.0855" stop-color="#60f"/><stop offset="0.393" stop-color="#7500d8"/><stop offset="0.453" stop-color="#771bd0"/><stop offset="0.556" stop-color="#7a33c3"/><stop offset="1" stop-color="#807788"/></linearGradient><linearGradient id="h86" x1="0" y1="0" x2="0" y2="1"><stop offset="0" stop-color="#7400ff"/><stop offset="0.0855" stop-color="#70f"/><stop offset="0.406" stop-color="#8000d6"/><stop offset="0.457" stop-color="#8119d0"/><stop offset="0.568" stop-color="#8234c2"/><stop offset="1" stop-color="#817788"/></linearGradient><linearGradient id="h87" x1="0" y1="0" x2="0" y2="1"><stop offset="0" stop-color="#8600ff"/><stop offset="0.0855" stop-color="#80f"/><stop offset="0.419" stop-color="#8b00d5"/><stop offset="0.457" stop-color="#8b15d0"/><stop offset="0.551" stop-color="#8b2fc4"/><stop offset="1" stop-color="#827788"/></linearGradient><linearGradient id="h88" x1="0" y1="0" x2="0" y2="1"><stop offset="0" stop-color="#9800ff"/><stop offset="0.0855" stop-color="#9800ff"/><stop offset="0.432" stop-color="#9500d3"/><stop offset="0.474" stop-color="#9517ce"/><stop offset="0.568" stop-color="#9331c2"/><stop offset="1" stop-color="#837788"/></linearGradient><linearGradient id="h89" x1="0" y1="0" x2="0" y2="1"><stop offset="0" stop-color="#a900ff"/><stop offset="0.0855" stop-color="#a800ff"/><stop offset="0.444" stop-color="#9f00d1"/><stop offset="0.487" stop-color="#9e18cc"/><stop offset="0.585" stop-color="#9a33bf"/><stop offset="1" stop-color="#847788"/></linearGradient><linearGradient id="h90" x1="0" y1="0" x2="0" y2="1"><stop offset="0" stop-color="#ba00ff"/><stop offset="0.0812" stop-color="#b700ff"/><stop offset="0.457" stop-color="#a800d0"/><stop offset="0.504" stop-color="#a61aca"/><stop offset="0.607" stop-color="#a136bd"/><stop offset="1" stop-color="#857688"/></linearGradient><linearGradient id="h91" x1="0" y1="0" x2="0" y2="1"><stop offset="0" stop-color="#cb00ff"/><stop offset="0.0812" stop-color="#c700ff"/><stop offset="0.47" stop-color="#b100ce"/><stop offset="0.517" stop-color="#ae1bc8"/><stop offset="0.632" stop-color="#a63ab9"/><stop offset="1" stop-color="#877688"/></linearGradient><linearGradient id="h92" x1="0" y1="0" x2="0" y2="1"><stop offset="0" stop-color="#db00ff"/><stop offset="0.0812" stop-color="#d600ff"/><stop offset="0.483" stop-color="#b900cc"/><stop offset="0.538" stop-color="#b51fc5"/><stop offset="0.658" stop-color="#ab3eb6"/><stop offset="1" stop-color="#887688"/></linearGradient><linearGradient id="h93" x1="0" y1="0" x2="0" y2="1"><stop offset="0" stop-color="#ec00ff"/><stop offset="0.0812" stop-color="#e500ff"/><stop offset="0.496" stop-color="#c100cb"/><stop offset="0.538" stop-color="#bd1bc5"/><stop offset="0.632" stop-color="#b437b9"/><stop offset="1" stop-color="#897688"/></linearGradient><linearGradient id="h94" x1="0" y1="0" x2="0" y2="1"><stop offset="0" stop-color="#fc00ff"/><stop offset="0.0812" stop-color="#f400ff"/><stop offset="0.509" stop-color="#c900c9"/><stop offset="0.551" stop-color="#c41cc3"/><stop offset="0.62" stop-color="#bc32bb"/><stop offset="0.778" stop-color="#a953a6"/><stop offset="1" stop-color="#8a7688"/></linearGradient><linearGradient id="h95" x1="0" y1="0" x2="0" y2="1"><stop offset="0" stop-color="#f0f"/><stop offset="0.12" stop-color="#ff00fa"/><stop offset="0.517" stop-color="#d000c8"/><stop offset="0.547" stop-color="#cc15c4"/><stop offset="0.62" stop-color="#c330bb"/><stop offset="0.782" stop-color="#ad53a6"/><stop offset="1" stop-color="#8b7688"/></linearGradient><linearGradient id="h96" x1="0" y1="0" x2="0" y2="1"><stop offset="0" stop-color="#f0f"/><stop offset="0.0769" stop-color="#f0f"/><stop offset="0.231" stop-color="#ff00ec"/><stop offset="0.53" stop-color="#d700c6"/><stop offset="0.556" stop-color="#d314c3"/><stop offset="0.585" stop-color="#cf22bf"/><stop offset="0.65" stop-color="#c636b7"/><stop offset="0.791" stop-color="#b054a4"/><stop offset="1" stop-color="#8c7688"/></linearGradient><linearGradient id="h97" x1="0" y1="0" x2="0" y2="1"><stop offset="0" stop-color="#f0f"/><stop offset="0.0769" stop-color="#f0f"/><stop offset="0.316" stop-color="#ff00e1"/><stop offset="0.543" stop-color="#dd00c4"/><stop offset="0.573" stop-color="#d818c0"/><stop offset="0.645" stop-color="#cd33b7"/><stop offset="0.799" stop-color="#b355a3"/><stop offset="1" stop-color="#8d7688"/></linearGradient><linearGradient id="h98" x1="0" y1="0" x2="0" y2="1"><stop offset="0" stop-color="#ff00fb"/><stop offset="0.321" stop-color="#ff00d7"/><stop offset="0.538" stop-color="#de00be"/><stop offset="0.577" stop-color="#d81cba"/><stop offset="0.658" stop-color="#cb37b0"/><stop offset="0.803" stop-color="#b3569f"/><stop offset="1" stop-color="#8d7688"/></linearGradient><linearGradient id="h99" x1="0" y1="0" x2="0" y2="1"><stop offset="0" stop-color="#ff00ed"/><stop offset="0.325" stop-color="#ff00cd"/><stop offset="0.534" stop-color="#df00b8"/><stop offset="0.564" stop-color="#da17b5"/><stop offset="0.637" stop-color="#cf32ad"/><stop offset="0.765" stop-color="#b94fa0"/><stop offset="1" stop-color="#8d7687"/></linearGradient><linearGradient id="h100" x1="0" y1="0" x2="0" y2="1"><stop offset="0" stop-color="#ff00df"/><stop offset="0.325" stop-color="#ff00c3"/><stop offset="0.53" stop-color="#e000b1"/><stop offset="0.568" stop-color="#da1bae"/><stop offset="0.65" stop-color="#cd36a7"/><stop offset="0.791" stop-color="#b5549a"/><stop offset="1" stop-color="#8e7686"/></linearGradient><linearGradient id="h101" x1="0" y1="0" x2="0" y2="1"><stop offset="0" stop-color="#ff00d1"/><stop offset="0.329" stop-color="#ff00b9"/><stop offset="0.526" stop-color="#e100ab"/><stop offset="0.56" stop-color="#dc18a8"/><stop offset="0.632" stop-color="#d032a2"/><stop offset="0.795" stop-color="#b55596"/><stop offset="1" stop-color="#8e7685"/></linearGradient><linearGradient id="h102" x1="0" y1="0" x2="0" y2="1"><stop offset="0" stop-color="#ff00c4"/><stop offset="0.329" stop-color="#ff00b0"/><stop offset="0.521" stop-color="#e200a4"/><stop offset="0.577" stop-color="#d921a0"/><stop offset="0.641" stop-color="#cf359c"/><stop offset="0.799" stop-color="#b45692"/><stop offset="1" stop-color="#8e7684"/></linearGradient><linearGradient id="h103" x1="0" y1="0" x2="0" y2="1"><stop offset="0" stop-color="#ff00b6"/><stop offset="0.333" stop-color="#ff00a6"/><stop offset="0.521" stop-color="#e2009d"/><stop offset="0.551" stop-color="#dd179b"/><stop offset="0.624" stop-color="#d23198"/><stop offset="0.782" stop-color="#b7538f"/><stop offset="1" stop-color="#8e7683"/></linearGradient><linearGradient id="h104" x1="0" y1="0" x2="0" y2="1"><stop offset="0" stop-color="#ff00a8"/><stop offset="0.333" stop-color="#ff009d"/><stop offset="0.517" stop-color="#e30096"/><stop offset="0.568" stop-color="#db2094"/><stop offset="0.637" stop-color="#d03591"/><stop offset="0.786" stop-color="#b7548b"/><stop offset="1" stop-color="#8e7682"/></linearGradient><linearGradient id="h105" x1="0" y1="0" x2="0" y2="1"><stop offset="0" stop-color="#ff009a"/><stop offset="0.338" stop-color="#ff0093"/><stop offset="0.513" stop-color="#e4008f"/><stop offset="0.568" stop-color="#db218e"/><stop offset="0.62" stop-color="#d3318c"/><stop offset="0.791" stop-color="#b65588"/><stop offset="1" stop-color="#8e7682"/></linearGradient><linearGradient id="h106" x1="0" y1="0" x2="0" y2="1"><stop offset="0" stop-color="#ff008c"/><stop offset="0.338" stop-color="#ff008a"/><stop offset="0.509" stop-color="#e50088"/><stop offset="0.551" stop-color="#de1b87"/><stop offset="0.641" stop-color="#d03786"/><stop offset="1" stop-color="#8e7681"/></linearGradient><linearGradient id="h107" x1="0" y1="0" x2="0" y2="1"><stop offset="0" stop-color="#ff007e"/><stop offset="0.342" stop-color="#ff0080"/><stop offset="0.509" stop-color="#e50080"/><stop offset="0.551" stop-color="#de1c81"/><stop offset="0.615" stop-color="#d43181"/><stop offset="0.761" stop-color="#bc5081"/><stop offset="1" stop-color="#8e7680"/></linearGradient><linearGradient id="h108" x1="0" y1="0" x2="0" y2="1"><stop offset="0" stop-color="#ff0070"/><stop offset="0.342" stop-color="#f07"/><stop offset="0.504" stop-color="#e60079"/><stop offset="0.534" stop-color="#e1157a"/><stop offset="0.603" stop-color="#d62e7b"/><stop offset="0.765" stop-color="#bb517d"/><stop offset="1" stop-color="#8e767f"/></linearGradient><linearGradient id="h109" x1="0" y1="0" x2="0" y2="1"><stop offset="0" stop-color="#ff0062"/><stop offset="0.342" stop-color="#ff006d"/><stop offset="0.504" stop-color="#e60072"/><stop offset="0.551" stop-color="#df1e73"/><stop offset="0.62" stop-color="#d43375"/><stop offset="0.748" stop-color="#be4e78"/><stop offset="1" stop-color="#8e767e"/></linearGradient><linearGradient id="h110" x1="0" y1="0" x2="0" y2="1"><stop offset="0" stop-color="#ff0054"/><stop offset="0.346" stop-color="#ff0064"/><stop offset="0.5" stop-color="#e7006a"/><stop offset="0.547" stop-color="#e01d6c"/><stop offset="0.603" stop-color="#d72f6e"/><stop offset="0.752" stop-color="#be4f74"/><stop offset="1" stop-color="#8e767d"/></linearGradient><linearGradient id="h111" x1="0" y1="0" x2="0" y2="1"><stop offset="0" stop-color="#ff0045"/><stop offset="0.346" stop-color="#ff005a"/><stop offset="0.496" stop-color="#e80062"/><stop offset="0.526" stop-color="#e31464"/><stop offset="0.59" stop-color="#d92c67"/><stop offset="0.756" stop-color="#bd5070"/><stop offset="1" stop-color="#8e767c"/></linearGradient><linearGradient id="h112" x1="0" y1="0" x2="0" y2="1"><stop offset="0" stop-color="#ff0035"/><stop offset="0.346" stop-color="#ff0050"/><stop offset="0.496" stop-color="#e8005b"/><stop offset="0.538" stop-color="#e11b5e"/><stop offset="0.607" stop-color="#d63162"/><stop offset="0.739" stop-color="#c04d6b"/><stop offset="1" stop-color="#8e767c"/></linearGradient><linearGradient id="h113" x1="0" y1="0" x2="0" y2="1"><stop offset="0" stop-color="#ff0024"/><stop offset="0.346" stop-color="#ff0046"/><stop offset="0.496" stop-color="#e80053"/><stop offset="0.526" stop-color="#e31655"/><stop offset="0.594" stop-color="#d82e5b"/><stop offset="0.744" stop-color="#bf4e67"/><stop offset="1" stop-color="#8e767b"/></linearGradient><linearGradient id="h114" x1="0" y1="0" x2="0" y2="1"><stop offset="0" stop-color="#ff000e"/><stop offset="0.124" stop-color="#ff0023"/><stop offset="0.35" stop-color="#ff003d"/><stop offset="0.491" stop-color="#e9004b"/><stop offset="0.543" stop-color="#e11e50"/><stop offset="0.679" stop-color="#ca425d"/><stop offset="1" stop-color="#8e767a"/></linearGradient><linearGradient id="h115" x1="0" y1="0" x2="0" y2="1"><stop offset="0" stop-color="#f00"/><stop offset="0.0641" stop-color="#f00"/><stop offset="0.192" stop-color="#ff001d"/><stop offset="0.35" stop-color="#ff0032"/><stop offset="0.491" stop-color="#e90043"/><stop offset="0.538" stop-color="#e21d48"/><stop offset="0.645" stop-color="#d03b54"/><stop offset="1" stop-color="#8e7679"/></linearGradient><linearGradient id="h116" x1="0" y1="0" x2="0" y2="1"><stop offset="0" stop-color="#f00"/><stop offset="0.162" stop-color="#f00"/><stop offset="0.231" stop-color="#ff0013"/><stop offset="0.35" stop-color="#ff0027"/><stop offset="0.487" stop-color="#ea003a"/><stop offset="0.543" stop-color="#e11f41"/><stop offset="0.658" stop-color="#ce3e50"/><stop offset="1" stop-color="#8e7678"/></linearGradient></defs><rect x="0" y="0" width="2" height="234" fill="url(#h0)"/><rect x="2" y="0" width="2" height="234" fill="url(#h1)"/><rect x="4" y="0" width="2" height="234" fill="url(#h2)"/><rect x="6" y="0" width="2" height="234" fill="url(#h3)"/><rect x="8" y="0" width="2" height="234" fill="url(#h4)"/><rect x="10" y="0" width="2" height="234" fill="url(#h5)"/><rect x="12" y="0" width="2" height="234" fill="url(#h6)"/><rect x="14" y="0" width="2" height="234" fill="url(#h7)"/><rect x="16" y="0" width="2" height="234" fill="url(#h8)"/><rect x="18" y="0" width="2" height="234" fill="url(#h9)"/><rect x="20" y="0" width="2" height="234" fill="url(#h10)"/><rect x="22" y="0" width="2" height="234" fill="url(#h11)"/><rect x="24" y="0" width="2" height="234" fill="url(#h12)"/><rect x="26" y="0" width="2" height="234" fill="url(#h13)"/><rect x="28" y="0" width="2" height="234" fill="url(#h14)"/><rect x="30" y="0" width="2" height="234" fill="url(#h15)"/><rect x="32" y="0" width="2" height="234" fill="url(#h16)"/><rect x="34" y="0" width="2" height="234" fill="url(#h17)"/><rect x="36" y="0" width="2" height="234" fill="url(#h18)"/><rect x="38" y="0" width="2" height="234" fill="url(#h19)"/><rect x="40" y="0" width="2" height="234" fill="url(#h20)"/><rect x="42" y="0" width="2" height="234" fill="url(#h21)"/><rect x="44" y="0" width="2" height="234" fill="url(#h22)"/><rect x="46" y="0" width="2" height="234" fill="url(#h23)"/><rect x="48" y="0" width="2" height="234" fill="url(#h24)"/><rect x="50" y="0" width="2" height="234" fill="url(#h25)"/><rect x="52" y="0" width="2" height="234" fill="url(#h26)"/><rect x="54" y="0" width="2" height="234" fill="url(#h27)"/><rect x="56" y="0" width="2" height="234" fill="url(#h28)"/><rect x="58" y="0" width="2" height="234" fill="url(#h29)"/><rect x="60" y="0" width="2" height="234" fill="url(#h30)"/><rect x="62" y="0" width="2" height="234" fill="url(#h31)"/><rect x="64" y="0" width="2" height="234" fill="url(#h32)"/><rect x="66" y="0" width="2" height="234" fill="url(#h33)"/><rect x="68" y="0" width="2" height="234" fill="url(#h34)"/><rect x="70" y="0" width="2" height="234" fill="url(#h35)"/><rect x="72" y="0" width="2" height="234" fill="url(#h36)"/><rect x="74" y="0" width="2" height="234" fill="url(#h37)"/><rect x="76" y="0" width="2" height="234" fill="url(#h38)"/><rect x="78" y="0" width="2" height="234" fill="url(#h39)"/><rect x="80" y="0" width="2" height="234" fill="url(#h40)"/><rect x="82" y="0" width="2" height="234" fill="url(#h41)"/><rect x="84" y="0" width="2" height="234" fill="url(#h42)"/><rect x="86" y="0" width="2" height="234" fill="url(#h43)"/><rect x="88" y="0" width="2" height="234" fill="url(#h44)"/><rect x="90" y="0" width="2" height="234" fill="url(#h45)"/><rect x="92" y="0" width="2" height="234" fill="url(#h46)"/><rect x="94" y="0" width="2" height="234" fill="url(#h47)"/><rect x="96" y="0" width="2" height="234" fill="url(#h48)"/><rect x="98" y="0" width="2" height="234" fill="url(#h49)"/><rect x="100" y="0" width="2" height="234" fill="url(#h50)"/><rect x="102" y="0" width="2" height="234" fill="url(#h51)"/><rect x="104" y="0" width="2" height="234" fill="url(#h52)"/><rect x="106" y="0" width="2" height="234" fill="url(#h53)"/><rect x="108" y="0" width="2" height="234" fill="url(#h54)"/><rect x="110" y="0" width="2" height="234" fill="url(#h55)"/><rect x="112" y="0" width="2" height="234" fill="url(#h56)"/><rect x="114" y="0" width="2" height="234" fill="url(#h57)"/><rect x="116" y="0" width="2" height="234" fill="url(#h58)"/><rect x="118" y="0" width="2" height="234" fill="url(#h59)"/><rect x="120" y="0" width="2" height="234" fill="url(#h60)"/><rect x="122" y="0" width="2" height="234" fill="url(#h61)"/><rect x="124" y="0" width="2" height="234" fill="url(#h62)"/><rect x="126" y="0" width="2" height="234" fill="url(#h63)"/><rect x="128" y="0" width="2" height="234" fill="url(#h64)"/><rect x="130" y="0" width="2" height="234" fill="url(#h65)"/><rect x="132" y="0" width="2" height="234" fill="url(#h66)"/><rect x="134" y="0" width="2" height="234" fill="url(#h67)"/><rect x="136" y="0" width="2" height="234" fill="url(#h68)"/><rect x="138" y="0" width="2" height="234" fill="url(#h69)"/><rect x="140" y="0" width="2" height="234" fill="url(#h70)"/><rect x="142" y="0" width="2" height="234" fill="url(#h71)"/><rect x="144" y="0" width="2" height="234" fill="url(#h72)"/><rect x="146" y="0" width="2" height="234" fill="url(#h73)"/><rect x="148" y="0" width="2" height="234" fill="url(#h74)"/><rect x="150" y="0" width="2" height="234" fill="url(#h75)"/><rect x="152" y="0" width="2" height="234" fill="url(#h76)"/><rect x="154" y="0" width="2" height="234" fill="url(#h77)"/><rect x="156" y="0" width="2" height="234" fill="url(#h78)"/><rect x="158" y="0" width="2" height="234" fill="url(#h79)"/><rect x="160" y="0" width="2" height="234" fill="url(#h80)"/><rect x="162" y="0" width="2" height="234" fill="url(#h81)"/><rect x="164" y="0" width="2" height="234" fill="url(#h82)"/><rect x="166" y="0" width="2" height="234" fill="url(#h83)"/><rect x="168" y="0" width="2" height="234" fill="url(#h84)"/><rect x="170" y="0" width="2" height="234" fill="url(#h85)"/><rect x="172" y="0" width="2" height="234" fill="url(#h86)"/><rect x="174" y="0" width="2" height="234" fill="url(#h87)"/><rect x="176" y="0" width="2" height="234" fill="url(#h88)"/><rect x="178" y="0" width="2" height="234" fill="url(#h89)"/><rect x="180" y="0" width="2" height="234" fill="url(#h90)"/><rect x="182" y="0" width="2" height="234" fill="url(#h91)"/><rect x="184" y="0" width="2" height="234" fill="url(#h92)"/><rect x="186" y="0" width="2" height="234" fill="url(#h93)"/><rect x="188" y="0" width="2" height="234" fill="url(#h94)"/><rect x="190" y="0" width="2" height="234" fill="url(#h95)"/><rect x="192" y="0" width="2" height="234" fill="url(#h96)"/><rect x="194" y="0" width="2" height="234" fill="url(#h97)"/><rect x="196" y="0" width="2" height="234" fill="url(#h98)"/><rect x="198" y="0" width="2" height="234" fill="url(#h99)"/><rect x="200" y="0" width="2" height="234" fill="url(#h100)"/><rect x="202" y="0" width="2" height="234" fill="url(#h101)"/><rect x="204" y="0" width="2" height="234" fill="url(#h102)"/><rect x="206" y="0" width="2" height="234" fill="url(#h103)"/><rect x="208" y="0" width="2" height="234" fill="url(#h104)"/><rect x="210" y="0" width="2" height="234" fill="url(#h105)"/><rect x="212" y="0" width="2" height="234" fill="url(#h106)"/><rect x="214" y="0" width="2" height="234" fill="url(#h107)"/><rect x="216" y="0" width="2" height="234" fill="url(#h108)"/><rect x="218" y="0" width="2" height="234" fill="url(#h109)"/><rect x="220" y="0" width="2" height="234" fill="url(#h110)"/><rect x="222" y="0" width="2" height="234" fill="url(#h111)"/><rect x="224" y="0" width="2" height="234" fill="url(#h112)"/><rect x="226" y="0" width="2" height="234" fill="url(#h113)"/><rect x="228" y="0" width="2" height="234" fill="url(#h114)"/><rect x="230" y="0" width="2" height="234" fill="url(#h115)"/><rect x="232" y="0" width="2" height="234" fill="url(#h116)"/></svg>
<div class="sel" style="left:553px;top:298px;width:13px;height:13px"></div>
<div class="lbl" style="left:570px;top:298px;transform:scaleX(0.913);">Zoom</div>
<div class="btn" style="left:553px;top:316px;width:48px;height:20px;line-height:18px;"><span class="s" style="transform:scaleX(0.903);">Z-Out</span></div>
<div class="pan" style="left:616px;top:290px;width:175px;height:28px;background:#808080;box-shadow:0 0 0 1px #fff;"></div>
<div class="btn" style="left:622px;top:295px;width:39px;height:19px;line-height:17px;"><span class="s" style="transform:scaleX(0.881);">Inp</span></div>
<div class="btn" style="left:664px;top:295px;width:39px;height:19px;line-height:17px;"><span class="s" style="transform:scaleX(0.865);">I&gt;M</span></div>
<div class="btn" style="left:707px;top:295px;width:39px;height:19px;line-height:17px;"><span class="s" style="transform:scaleX(0.876);">Outp</span></div>
<div class="btn b" style="left:750px;top:295px;width:39px;height:19px;line-height:17px;background:#ffffc8;"><span class="s" style="transform:scaleX(0.930);">O&gt;M</span></div>
<div class="lbl" style="left:630px;top:323px;transform:scaleX(0.877);">Black Pt. Comp.</div>
<div class="sel" style="left:709px;top:319px;width:80px;height:21px;"><span class="tx" style="transform:scaleX(0.871);">Both</span><span class="dd"></span></div>
<div class="pan" style="left:553px;top:341px;width:240px;height:27px;background:#808080;box-shadow:0 0 0 1px #fff;"></div>
<div class="sel b" style="left:555px;top:343px;width:234px;height:21px;"><span class="tx" style="transform:scaleX(0.964);">xy Chromaticity (Saturation map)</span><span class="dd"></span></div>
<div class="pan" style="left:553px;top:369px;width:240px;height:159px;"></div>
<div class="btn dis" style="left:559px;top:375px;width:79px;height:23px;line-height:21px;"><span class="s" style="transform:scaleX(0.887);">Reset scale</span></div>
<div class="btn dis" style="left:642px;top:375px;width:76px;height:23px;line-height:21px;"><span class="s" style="transform:scaleX(0.852);">Reset view</span></div>
<div class="btn dis" style="left:723px;top:375px;width:66px;height:23px;line-height:21px;"><span class="s" style="transform:scaleX(0.856);">Top view</span></div>
<div class="sel" style="left:558px;top:404px;width:13px;height:13px"></div><svg class="abs" style="left:558px;top:404px" width="13" height="13" viewBox="0 0 13 13"><path d="M3 6l2.500 2.500L10 4" stroke="#000" stroke-width="2" fill="none"/></svg>
<div class="lbl" style="left:576px;top:404px;transform:scaleX(0.932);">Wavelth</div>
<div class="sel" style="left:627px;top:401px;width:162px;height:21px;"><span class="tx" style="transform:scaleX(0.880);">Normal/gamut boundaries</span><span class="dd"></span></div>
<div class="pan" style="left:553px;top:468px;width:87px;height:30px;"></div>
<div class="btn b" style="left:558px;top:473px;width:77px;height:21px;line-height:19px;"><span class="s" style="transform:scaleX(1.006);">Print Test</span></div>
<div class="pan" style="left:553px;top:497px;width:240px;height:31px;"></div>
<div class="sel" style="left:558px;top:503px;width:231px;height:19px;background:#f0f0f0;text-align:center;line-height:18px"><span class="s" style="display:inline-block;transform:scaleX(0.887);will-change:transform">not selected</span></div>
<div class="pan" style="left:559px;top:532px;width:144px;height:56px;"></div>
<div class="lbl b" style="left:569px;top:538px;transform:scaleX(0.951);">Display A</div>
<div class="btn b" style="left:650px;top:537px;width:47px;height:22px;line-height:20px;"><span class="s" style="transform:scaleX(1.010);">View</span></div>
<div class="sel" style="left:563px;top:562px;width:38px;height:19px;"><span class="tx" style="">1</span><span class="dd"></span></div>
<div class="lbl" style="left:611px;top:565px;transform:scaleX(0.897);">IN&nbsp; OUT</div>
<div class="sel" style="left:659px;top:562px;width:38px;height:19px;"><span class="tx" style="">3</span><span class="dd"></span></div>
<div class="pan" style="left:559px;top:592px;width:144px;height:56px;"></div>
<div class="lbl b" style="left:569px;top:598px;transform:scaleX(0.943);">Display B</div>
<div class="btn b" style="left:651px;top:597px;width:47px;height:22px;line-height:20px;"><span class="s" style="transform:scaleX(1.010);">View</span></div>
<div class="sel" style="left:563px;top:622px;width:38px;height:19px;"><span class="tx" style="">2</span><span class="dd"></span></div>
<div class="lbl" style="left:610px;top:625px;transform:scaleX(0.897);">IN&nbsp; OUT</div>
<div class="sel" style="left:660px;top:622px;width:38px;height:19px;"><span class="tx" style="">4</span><span class="dd"></span></div>
<div class="btn" style="left:720px;top:532px;width:69px;height:22px;line-height:20px;"><span class="s" style="transform:scaleX(0.851);">Help</span></div>
<div class="btn" style="left:720px;top:564px;width:69px;height:22px;line-height:20px;"><span class="s" style="transform:scaleX(0.840);">Exit</span></div>
<svg class="abs" style="left:709px;top:596px" width="80" height="48" viewBox="0 0 80 48"><defs><linearGradient id="lg" x1="0" y1="0" x2="1" y2="0"><stop offset="0" stop-color="#000070"/><stop offset="1" stop-color="#0000cc"/></linearGradient><linearGradient id="gg" x1="0" y1="0" x2="1" y2="0"><stop offset="0" stop-color="#001c00"/><stop offset="0.5" stop-color="#006000"/><stop offset="1" stop-color="#008408"/></linearGradient></defs><rect width="80" height="48" fill="url(#lg)"/><path d="M1 0H80V11.400z" fill="url(#gg)"/><path d="M1 0L80 11.400V17.700z" fill="#fff"/><path d="M1 0L80 17.700V23.200z" fill="#cc3c00"/><path d="M1 0L80 23.200V27z" fill="#fff"/><path d="M1 0L80 27V28.700z" fill="#a020a0"/><path d="M1 0L80 28.700V30.600z" fill="#f4f4ff"/><path d="M8 7.200C4.500 7 3 10 3.300 13.500C4 19 6.500 24.500 9.900 28.400L31.500 20.600z" fill="#ffffc0"/><text x="40.700" y="44.500" font-family="Liberation Serif, serif" font-style="italic" font-size="16.500" fill="#fff" text-anchor="middle" textLength="76" lengthAdjust="spacingAndGlyphs">Gamutvision</text></svg>
<div class="lbl b" style="left:9px;top:578px;">1</div>
<div class="lbl b" style="left:9px;top:630px;">2</div>
<div class="sel" style="left:20px;top:576px;width:252px;height:19px;background:#ffffc8;"><span class="tx" style="transform:scaleX(0.871);">*sRGB &nbsp; (IEC6 1996-2.1 sRGB)</span><span class="dd"></span></div>
<div class="sel" style="left:20px;top:628px;width:252px;height:19px;background:#e0ffe0;"><span class="tx" style="transform:scaleX(0.904);">38WN95C-W_hdreffect.icm</span><span class="dd"></span></div>
<div class="sel" style="left:278px;top:576px;width:252px;height:19px;background:#f0f0f0;"><span class="tx" style="transform:scaleX(0.854);">Browse...</span><span class="dd"></span></div>
<div class="sel" style="left:278px;top:628px;width:252px;height:19px;background:#f0f0f0;"><span class="tx" style="transform:scaleX(0.854);">Browse...</span><span class="dd"></span></div>
<div class="lbl b" style="left:535px;top:578px;">3</div>
<div class="lbl b" style="left:535px;top:630px;">4</div>
<svg class="abs" style="left:6px;top:598px" width="12" height="27" viewBox="0 0 12 27"><rect width="12" height="27" fill="#dcdcdc"/><path d="M4.500 0.500h3v18h3.500l-5 7.500l-5-7.500h3.500z" fill="#4d4d4d"/></svg>
<svg class="abs" style="left:533px;top:598px" width="12" height="27" viewBox="0 0 12 27"><rect width="12" height="27" fill="#dcdcdc"/><path d="M4.500 0.500h3v18h3.500l-5 7.500l-5-7.500h3.500z" fill="#4d4d4d"/></svg>
<div class="pan" style="left:20px;top:596px;width:223px;height:31px;background:#4a7ccc;border-color:#000 #000 #4a7ccc #000;border-width:0 1px 0 1px"></div>
<div class="btn b" style="left:25px;top:601px;width:47px;height:23px;line-height:21px;background:#ffffc8;"><span class="s" style="transform:scaleX(1.010);">View</span></div>
<div class="sel" style="left:95px;top:601px;width:142px;height:21px;background:#ffffee;"><span class="tx" style="transform:scaleX(0.880);">None (or Print Test)</span><span class="dd"></span></div>
<div class="lbl" style="left:250px;top:605px;transform:scaleX(0.872);">Rendering</div>
<div class="pan" style="left:308px;top:596px;width:223px;height:31px;background:#808080;border-width:0 1px 0 1px"></div>
<div class="sel" style="left:312px;top:601px;width:143px;height:21px;background:#f0f0f0;"><span class="tx" style="transform:scaleX(0.884);">Absolute</span><span class="dd"></span></div>
<div class="btn b" style="left:480px;top:601px;width:46px;height:23px;line-height:21px;"><span class="s" style="transform:scaleX(1.010);">View</span></div>
<svg class="abs" style="left:280px;top:8px;z-index:7" width="20" height="26" viewBox="280 8 20 26"><path d="M283.500 11.300V27.600L287.700 23.900L290.300 29.700L292.700 28.700L290.500 23.300L295 22.900z" fill="#fff" stroke="#101018" stroke-width="1" stroke-linejoin="round"/></svg>
<div id="frame2"></div><div id="frame"></div>
</body></html>
